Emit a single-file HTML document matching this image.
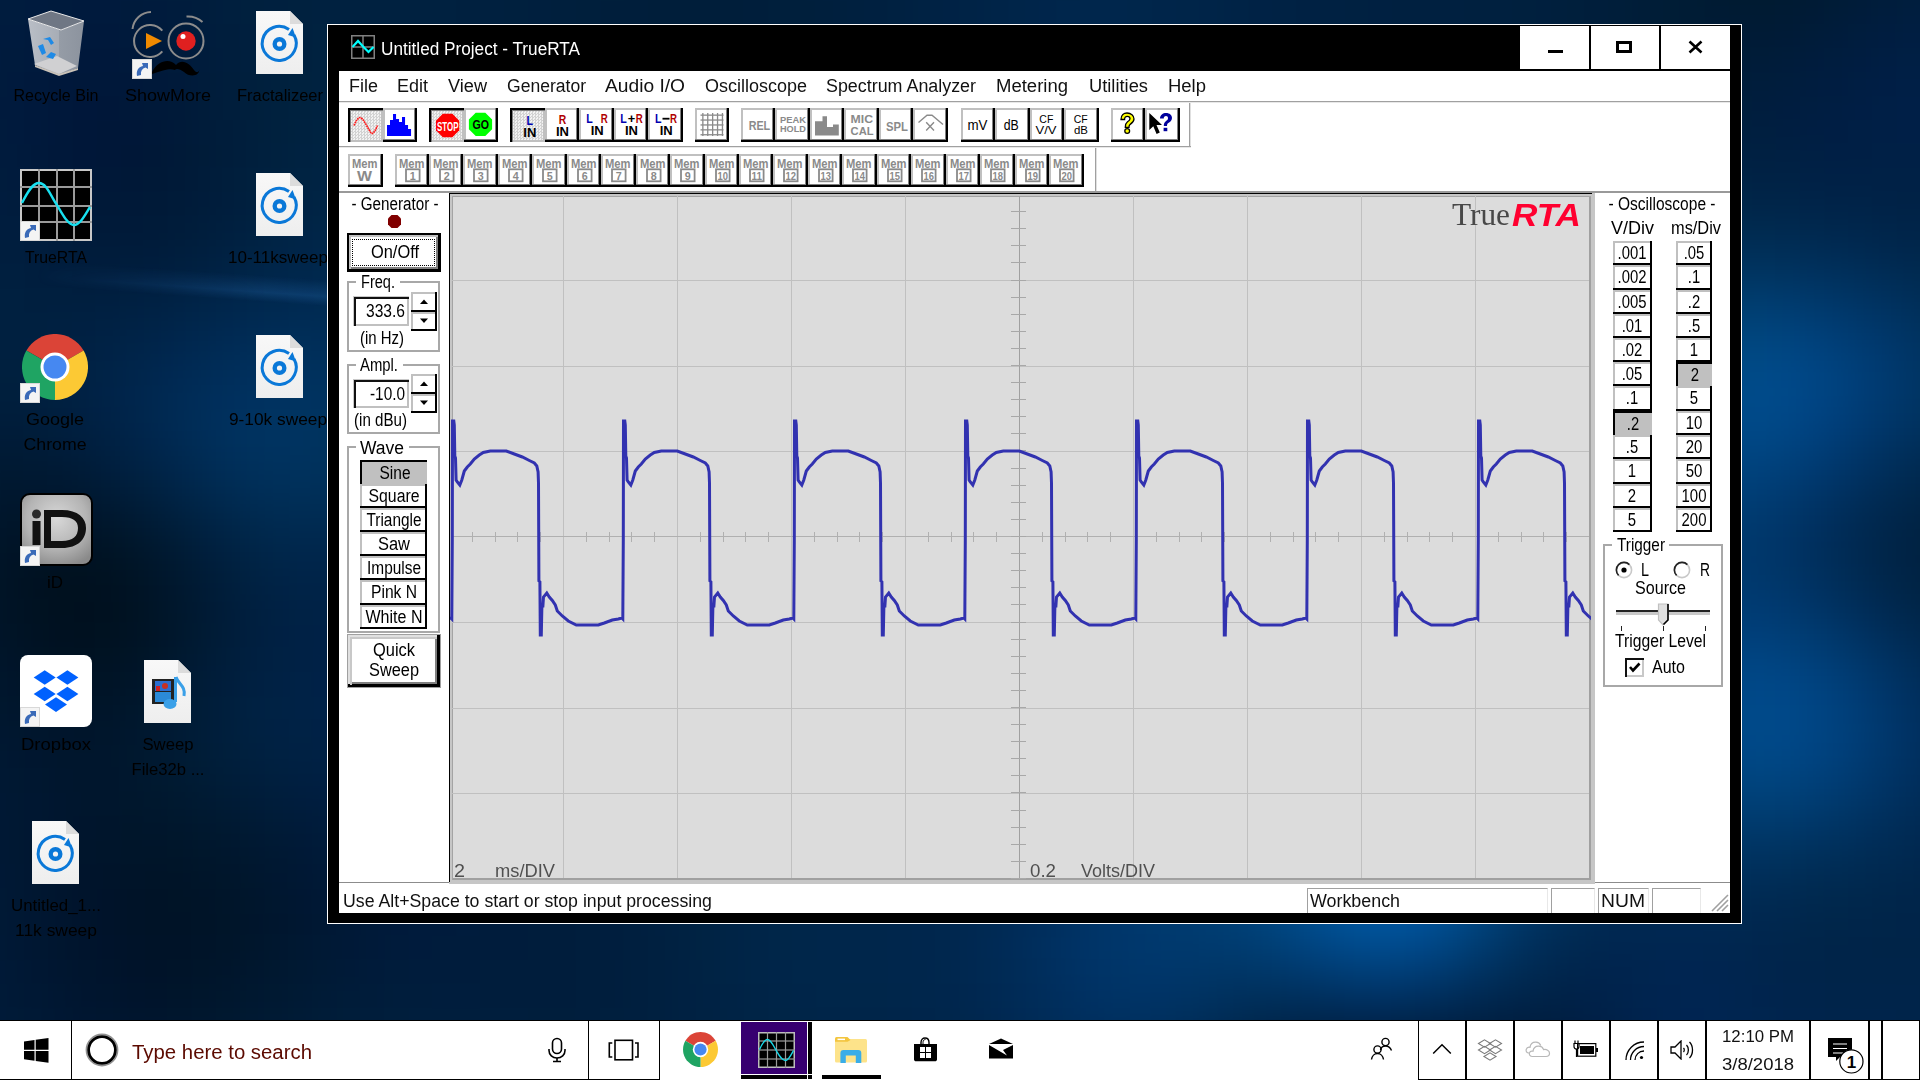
<!DOCTYPE html><html><head><meta charset="utf-8"><title>TrueRTA</title><style>
*{margin:0;padding:0;box-sizing:border-box}
html,body{width:1920px;height:1080px;overflow:hidden;font-family:"Liberation Sans", sans-serif}
body{position:relative;background:#021a3a}
div,svg{position:absolute}
.t{white-space:nowrap}
</style></head><body><svg style="left:-72px;top:-72px;filter:blur(13px)" width="2064" height="1224" viewBox="0 0 2064 1224"><rect width="2064" height="1224" fill="#002040"/><rect x="0" y="0" width="24" height="24" fill="#001f40"/><rect x="24" y="0" width="24" height="24" fill="#001f3f"/><rect x="48" y="0" width="24" height="24" fill="#001e3f"/><rect x="72" y="0" width="24" height="24" fill="#001e3f"/><rect x="96" y="0" width="24" height="24" fill="#001e3f"/><rect x="120" y="0" width="24" height="24" fill="#001e3f"/><rect x="144" y="0" width="24" height="24" fill="#001d3f"/><rect x="168" y="0" width="24" height="24" fill="#001d3f"/><rect x="192" y="0" width="24" height="24" fill="#001e3e"/><rect x="216" y="0" width="24" height="24" fill="#001e3f"/><rect x="240" y="0" width="24" height="24" fill="#001e3f"/><rect x="264" y="0" width="24" height="24" fill="#001f3f"/><rect x="288" y="0" width="24" height="24" fill="#001f3f"/><rect x="312" y="0" width="24" height="24" fill="#00203f"/><rect x="336" y="0" width="24" height="24" fill="#00203f"/><rect x="360" y="0" width="24" height="24" fill="#002040"/><rect x="384" y="0" width="24" height="24" fill="#002140"/><rect x="408" y="0" width="24" height="24" fill="#002140"/><rect x="432" y="0" width="24" height="24" fill="#002140"/><rect x="456" y="0" width="24" height="24" fill="#002040"/><rect x="480" y="0" width="24" height="24" fill="#002040"/><rect x="504" y="0" width="24" height="24" fill="#002040"/><rect x="528" y="0" width="24" height="24" fill="#00203f"/><rect x="552" y="0" width="24" height="24" fill="#00203f"/><rect x="576" y="0" width="24" height="24" fill="#00203e"/><rect x="600" y="0" width="24" height="24" fill="#001f3e"/><rect x="624" y="0" width="24" height="24" fill="#001f3d"/><rect x="648" y="0" width="24" height="24" fill="#001f3d"/><rect x="672" y="0" width="24" height="24" fill="#001f3c"/><rect x="696" y="0" width="24" height="24" fill="#001f3c"/><rect x="720" y="0" width="24" height="24" fill="#001e3b"/><rect x="744" y="0" width="24" height="24" fill="#001e3b"/><rect x="768" y="0" width="24" height="24" fill="#001e3b"/><rect x="792" y="0" width="24" height="24" fill="#001e3b"/><rect x="816" y="0" width="24" height="24" fill="#001f3c"/><rect x="840" y="0" width="24" height="24" fill="#001f3c"/><rect x="864" y="0" width="24" height="24" fill="#001f3d"/><rect x="888" y="0" width="24" height="24" fill="#001f3e"/><rect x="912" y="0" width="24" height="24" fill="#00203f"/><rect x="936" y="0" width="24" height="24" fill="#002040"/><rect x="960" y="0" width="24" height="24" fill="#002141"/><rect x="984" y="0" width="24" height="24" fill="#002143"/><rect x="1008" y="0" width="24" height="24" fill="#002244"/><rect x="1032" y="0" width="24" height="24" fill="#002345"/><rect x="1056" y="0" width="24" height="24" fill="#002347"/><rect x="1080" y="0" width="24" height="24" fill="#002448"/><rect x="1104" y="0" width="24" height="24" fill="#002549"/><rect x="1128" y="0" width="24" height="24" fill="#00254a"/><rect x="1152" y="0" width="24" height="24" fill="#00254a"/><rect x="1176" y="0" width="24" height="24" fill="#00254a"/><rect x="1200" y="0" width="24" height="24" fill="#00254a"/><rect x="1224" y="0" width="24" height="24" fill="#002449"/><rect x="1248" y="0" width="24" height="24" fill="#002448"/><rect x="1272" y="0" width="24" height="24" fill="#002347"/><rect x="1296" y="0" width="24" height="24" fill="#002345"/><rect x="1320" y="0" width="24" height="24" fill="#002244"/><rect x="1344" y="0" width="24" height="24" fill="#002243"/><rect x="1368" y="0" width="24" height="24" fill="#002142"/><rect x="1392" y="0" width="24" height="24" fill="#002142"/><rect x="1416" y="0" width="24" height="24" fill="#002141"/><rect x="1440" y="0" width="24" height="24" fill="#002041"/><rect x="1464" y="0" width="24" height="24" fill="#002040"/><rect x="1488" y="0" width="24" height="24" fill="#002040"/><rect x="1512" y="0" width="24" height="24" fill="#002040"/><rect x="1536" y="0" width="24" height="24" fill="#00203f"/><rect x="1560" y="0" width="24" height="24" fill="#00203f"/><rect x="1584" y="0" width="24" height="24" fill="#00203e"/><rect x="1608" y="0" width="24" height="24" fill="#001f3e"/><rect x="1632" y="0" width="24" height="24" fill="#001f3d"/><rect x="1656" y="0" width="24" height="24" fill="#001f3b"/><rect x="1680" y="0" width="24" height="24" fill="#001e39"/><rect x="1704" y="0" width="24" height="24" fill="#001d38"/><rect x="1728" y="0" width="24" height="24" fill="#001d36"/><rect x="1752" y="0" width="24" height="24" fill="#001c34"/><rect x="1776" y="0" width="24" height="24" fill="#001c32"/><rect x="1800" y="0" width="24" height="24" fill="#001b31"/><rect x="1824" y="0" width="24" height="24" fill="#001b30"/><rect x="1848" y="0" width="24" height="24" fill="#001b30"/><rect x="1872" y="0" width="24" height="24" fill="#001b31"/><rect x="1896" y="0" width="24" height="24" fill="#001b32"/><rect x="1920" y="0" width="24" height="24" fill="#001c34"/><rect x="1944" y="0" width="24" height="24" fill="#001c37"/><rect x="1968" y="0" width="24" height="24" fill="#001d39"/><rect x="1992" y="0" width="24" height="24" fill="#001e3b"/><rect x="2016" y="0" width="24" height="24" fill="#001e3c"/><rect x="2040" y="0" width="24" height="24" fill="#001f3e"/><rect x="2064" y="0" width="24" height="24" fill="#001f3f"/><rect x="0" y="24" width="24" height="24" fill="#001f40"/><rect x="24" y="24" width="24" height="24" fill="#001e3f"/><rect x="48" y="24" width="24" height="24" fill="#001e3f"/><rect x="72" y="24" width="24" height="24" fill="#001d3f"/><rect x="96" y="24" width="24" height="24" fill="#001d3f"/><rect x="120" y="24" width="24" height="24" fill="#001d3e"/><rect x="144" y="24" width="24" height="24" fill="#001c3e"/><rect x="168" y="24" width="24" height="24" fill="#001c3e"/><rect x="192" y="24" width="24" height="24" fill="#001d3e"/><rect x="216" y="24" width="24" height="24" fill="#001d3e"/><rect x="240" y="24" width="24" height="24" fill="#001e3e"/><rect x="264" y="24" width="24" height="24" fill="#001e3e"/><rect x="288" y="24" width="24" height="24" fill="#001f3f"/><rect x="312" y="24" width="24" height="24" fill="#00203f"/><rect x="336" y="24" width="24" height="24" fill="#00203f"/><rect x="360" y="24" width="24" height="24" fill="#002140"/><rect x="384" y="24" width="24" height="24" fill="#002140"/><rect x="408" y="24" width="24" height="24" fill="#002140"/><rect x="432" y="24" width="24" height="24" fill="#002140"/><rect x="456" y="24" width="24" height="24" fill="#002140"/><rect x="480" y="24" width="24" height="24" fill="#002040"/><rect x="504" y="24" width="24" height="24" fill="#002040"/><rect x="528" y="24" width="24" height="24" fill="#00203f"/><rect x="552" y="24" width="24" height="24" fill="#00203f"/><rect x="576" y="24" width="24" height="24" fill="#00203e"/><rect x="600" y="24" width="24" height="24" fill="#001f3e"/><rect x="624" y="24" width="24" height="24" fill="#001f3d"/><rect x="648" y="24" width="24" height="24" fill="#001f3c"/><rect x="672" y="24" width="24" height="24" fill="#001f3c"/><rect x="696" y="24" width="24" height="24" fill="#001e3b"/><rect x="720" y="24" width="24" height="24" fill="#001e3b"/><rect x="744" y="24" width="24" height="24" fill="#001e3a"/><rect x="768" y="24" width="24" height="24" fill="#001e3a"/><rect x="792" y="24" width="24" height="24" fill="#001e3b"/><rect x="816" y="24" width="24" height="24" fill="#001e3b"/><rect x="840" y="24" width="24" height="24" fill="#001f3c"/><rect x="864" y="24" width="24" height="24" fill="#001f3d"/><rect x="888" y="24" width="24" height="24" fill="#001f3e"/><rect x="912" y="24" width="24" height="24" fill="#00203f"/><rect x="936" y="24" width="24" height="24" fill="#002040"/><rect x="960" y="24" width="24" height="24" fill="#002141"/><rect x="984" y="24" width="24" height="24" fill="#002243"/><rect x="1008" y="24" width="24" height="24" fill="#002244"/><rect x="1032" y="24" width="24" height="24" fill="#002346"/><rect x="1056" y="24" width="24" height="24" fill="#002447"/><rect x="1080" y="24" width="24" height="24" fill="#002449"/><rect x="1104" y="24" width="24" height="24" fill="#00254a"/><rect x="1128" y="24" width="24" height="24" fill="#00254b"/><rect x="1152" y="24" width="24" height="24" fill="#00264b"/><rect x="1176" y="24" width="24" height="24" fill="#00264b"/><rect x="1200" y="24" width="24" height="24" fill="#00254b"/><rect x="1224" y="24" width="24" height="24" fill="#00254a"/><rect x="1248" y="24" width="24" height="24" fill="#002449"/><rect x="1272" y="24" width="24" height="24" fill="#002447"/><rect x="1296" y="24" width="24" height="24" fill="#002346"/><rect x="1320" y="24" width="24" height="24" fill="#002245"/><rect x="1344" y="24" width="24" height="24" fill="#002243"/><rect x="1368" y="24" width="24" height="24" fill="#002142"/><rect x="1392" y="24" width="24" height="24" fill="#002142"/><rect x="1416" y="24" width="24" height="24" fill="#002141"/><rect x="1440" y="24" width="24" height="24" fill="#002041"/><rect x="1464" y="24" width="24" height="24" fill="#002040"/><rect x="1488" y="24" width="24" height="24" fill="#002040"/><rect x="1512" y="24" width="24" height="24" fill="#002040"/><rect x="1536" y="24" width="24" height="24" fill="#00203f"/><rect x="1560" y="24" width="24" height="24" fill="#00203f"/><rect x="1584" y="24" width="24" height="24" fill="#00203e"/><rect x="1608" y="24" width="24" height="24" fill="#001f3e"/><rect x="1632" y="24" width="24" height="24" fill="#001f3c"/><rect x="1656" y="24" width="24" height="24" fill="#001e3b"/><rect x="1680" y="24" width="24" height="24" fill="#001e39"/><rect x="1704" y="24" width="24" height="24" fill="#001d37"/><rect x="1728" y="24" width="24" height="24" fill="#001d35"/><rect x="1752" y="24" width="24" height="24" fill="#001c33"/><rect x="1776" y="24" width="24" height="24" fill="#001b32"/><rect x="1800" y="24" width="24" height="24" fill="#001b31"/><rect x="1824" y="24" width="24" height="24" fill="#001b30"/><rect x="1848" y="24" width="24" height="24" fill="#001b31"/><rect x="1872" y="24" width="24" height="24" fill="#001b32"/><rect x="1896" y="24" width="24" height="24" fill="#001b33"/><rect x="1920" y="24" width="24" height="24" fill="#001c36"/><rect x="1944" y="24" width="24" height="24" fill="#001c38"/><rect x="1968" y="24" width="24" height="24" fill="#001d3a"/><rect x="1992" y="24" width="24" height="24" fill="#001e3c"/><rect x="2016" y="24" width="24" height="24" fill="#001e3e"/><rect x="2040" y="24" width="24" height="24" fill="#001f3f"/><rect x="2064" y="24" width="24" height="24" fill="#001f40"/><rect x="0" y="48" width="24" height="24" fill="#001f3f"/><rect x="24" y="48" width="24" height="24" fill="#001e3f"/><rect x="48" y="48" width="24" height="24" fill="#001d3f"/><rect x="72" y="48" width="24" height="24" fill="#001d3e"/><rect x="96" y="48" width="24" height="24" fill="#001c3e"/><rect x="120" y="48" width="24" height="24" fill="#001c3e"/><rect x="144" y="48" width="24" height="24" fill="#001b3d"/><rect x="168" y="48" width="24" height="24" fill="#001b3d"/><rect x="192" y="48" width="24" height="24" fill="#001c3d"/><rect x="216" y="48" width="24" height="24" fill="#001c3d"/><rect x="240" y="48" width="24" height="24" fill="#001d3e"/><rect x="264" y="48" width="24" height="24" fill="#001e3e"/><rect x="288" y="48" width="24" height="24" fill="#001f3e"/><rect x="312" y="48" width="24" height="24" fill="#00203f"/><rect x="336" y="48" width="24" height="24" fill="#00203f"/><rect x="360" y="48" width="24" height="24" fill="#00213f"/><rect x="384" y="48" width="24" height="24" fill="#002140"/><rect x="408" y="48" width="24" height="24" fill="#002140"/><rect x="432" y="48" width="24" height="24" fill="#002140"/><rect x="456" y="48" width="24" height="24" fill="#002140"/><rect x="480" y="48" width="24" height="24" fill="#002140"/><rect x="504" y="48" width="24" height="24" fill="#002040"/><rect x="528" y="48" width="24" height="24" fill="#00203f"/><rect x="552" y="48" width="24" height="24" fill="#00203f"/><rect x="576" y="48" width="24" height="24" fill="#00203e"/><rect x="600" y="48" width="24" height="24" fill="#001f3e"/><rect x="624" y="48" width="24" height="24" fill="#001f3d"/><rect x="648" y="48" width="24" height="24" fill="#001f3c"/><rect x="672" y="48" width="24" height="24" fill="#001f3b"/><rect x="696" y="48" width="24" height="24" fill="#001e3b"/><rect x="720" y="48" width="24" height="24" fill="#001e3a"/><rect x="744" y="48" width="24" height="24" fill="#001e3a"/><rect x="768" y="48" width="24" height="24" fill="#001e3a"/><rect x="792" y="48" width="24" height="24" fill="#001e3a"/><rect x="816" y="48" width="24" height="24" fill="#001e3b"/><rect x="840" y="48" width="24" height="24" fill="#001f3c"/><rect x="864" y="48" width="24" height="24" fill="#001f3c"/><rect x="888" y="48" width="24" height="24" fill="#001f3e"/><rect x="912" y="48" width="24" height="24" fill="#00203f"/><rect x="936" y="48" width="24" height="24" fill="#002040"/><rect x="960" y="48" width="24" height="24" fill="#002141"/><rect x="984" y="48" width="24" height="24" fill="#002243"/><rect x="1008" y="48" width="24" height="24" fill="#002245"/><rect x="1032" y="48" width="24" height="24" fill="#002346"/><rect x="1056" y="48" width="24" height="24" fill="#002448"/><rect x="1080" y="48" width="24" height="24" fill="#002549"/><rect x="1104" y="48" width="24" height="24" fill="#00254b"/><rect x="1128" y="48" width="24" height="24" fill="#00264b"/><rect x="1152" y="48" width="24" height="24" fill="#00264c"/><rect x="1176" y="48" width="24" height="24" fill="#00264c"/><rect x="1200" y="48" width="24" height="24" fill="#00264b"/><rect x="1224" y="48" width="24" height="24" fill="#00254a"/><rect x="1248" y="48" width="24" height="24" fill="#002549"/><rect x="1272" y="48" width="24" height="24" fill="#002448"/><rect x="1296" y="48" width="24" height="24" fill="#002346"/><rect x="1320" y="48" width="24" height="24" fill="#002245"/><rect x="1344" y="48" width="24" height="24" fill="#002244"/><rect x="1368" y="48" width="24" height="24" fill="#002143"/><rect x="1392" y="48" width="24" height="24" fill="#002142"/><rect x="1416" y="48" width="24" height="24" fill="#002141"/><rect x="1440" y="48" width="24" height="24" fill="#002041"/><rect x="1464" y="48" width="24" height="24" fill="#002040"/><rect x="1488" y="48" width="24" height="24" fill="#002040"/><rect x="1512" y="48" width="24" height="24" fill="#002040"/><rect x="1536" y="48" width="24" height="24" fill="#00203f"/><rect x="1560" y="48" width="24" height="24" fill="#00203f"/><rect x="1584" y="48" width="24" height="24" fill="#00203e"/><rect x="1608" y="48" width="24" height="24" fill="#001f3d"/><rect x="1632" y="48" width="24" height="24" fill="#001f3c"/><rect x="1656" y="48" width="24" height="24" fill="#001e3b"/><rect x="1680" y="48" width="24" height="24" fill="#001e39"/><rect x="1704" y="48" width="24" height="24" fill="#001d37"/><rect x="1728" y="48" width="24" height="24" fill="#001d35"/><rect x="1752" y="48" width="24" height="24" fill="#001c34"/><rect x="1776" y="48" width="24" height="24" fill="#001b32"/><rect x="1800" y="48" width="24" height="24" fill="#001b31"/><rect x="1824" y="48" width="24" height="24" fill="#001b31"/><rect x="1848" y="48" width="24" height="24" fill="#001b32"/><rect x="1872" y="48" width="24" height="24" fill="#001b33"/><rect x="1896" y="48" width="24" height="24" fill="#001b35"/><rect x="1920" y="48" width="24" height="24" fill="#001c38"/><rect x="1944" y="48" width="24" height="24" fill="#001d3a"/><rect x="1968" y="48" width="24" height="24" fill="#001d3c"/><rect x="1992" y="48" width="24" height="24" fill="#001e3e"/><rect x="2016" y="48" width="24" height="24" fill="#001f3f"/><rect x="2040" y="48" width="24" height="24" fill="#001f40"/><rect x="2064" y="48" width="24" height="24" fill="#001f41"/><rect x="0" y="72" width="24" height="24" fill="#001e3f"/><rect x="24" y="72" width="24" height="24" fill="#001e3f"/><rect x="48" y="72" width="24" height="24" fill="#001d3f"/><rect x="72" y="72" width="24" height="24" fill="#001c3e"/><rect x="96" y="72" width="24" height="24" fill="#001b3e"/><rect x="120" y="72" width="24" height="24" fill="#001b3d"/><rect x="144" y="72" width="24" height="24" fill="#001a3d"/><rect x="168" y="72" width="24" height="24" fill="#001a3d"/><rect x="192" y="72" width="24" height="24" fill="#001b3c"/><rect x="216" y="72" width="24" height="24" fill="#001b3d"/><rect x="240" y="72" width="24" height="24" fill="#001c3d"/><rect x="264" y="72" width="24" height="24" fill="#001d3d"/><rect x="288" y="72" width="24" height="24" fill="#001f3e"/><rect x="312" y="72" width="24" height="24" fill="#00203e"/><rect x="336" y="72" width="24" height="24" fill="#00203f"/><rect x="360" y="72" width="24" height="24" fill="#00213f"/><rect x="384" y="72" width="24" height="24" fill="#002140"/><rect x="408" y="72" width="24" height="24" fill="#002140"/><rect x="432" y="72" width="24" height="24" fill="#002140"/><rect x="456" y="72" width="24" height="24" fill="#002140"/><rect x="480" y="72" width="24" height="24" fill="#002140"/><rect x="504" y="72" width="24" height="24" fill="#002140"/><rect x="528" y="72" width="24" height="24" fill="#00203f"/><rect x="552" y="72" width="24" height="24" fill="#00203f"/><rect x="576" y="72" width="24" height="24" fill="#00203e"/><rect x="600" y="72" width="24" height="24" fill="#001f3e"/><rect x="624" y="72" width="24" height="24" fill="#001f3d"/><rect x="648" y="72" width="24" height="24" fill="#001f3c"/><rect x="672" y="72" width="24" height="24" fill="#001e3b"/><rect x="696" y="72" width="24" height="24" fill="#001e3b"/><rect x="720" y="72" width="24" height="24" fill="#001e3a"/><rect x="744" y="72" width="24" height="24" fill="#001e3a"/><rect x="768" y="72" width="24" height="24" fill="#001e3a"/><rect x="792" y="72" width="24" height="24" fill="#001e3a"/><rect x="816" y="72" width="24" height="24" fill="#001e3b"/><rect x="840" y="72" width="24" height="24" fill="#001f3c"/><rect x="864" y="72" width="24" height="24" fill="#001f3c"/><rect x="888" y="72" width="24" height="24" fill="#001f3d"/><rect x="912" y="72" width="24" height="24" fill="#00203f"/><rect x="936" y="72" width="24" height="24" fill="#002040"/><rect x="960" y="72" width="24" height="24" fill="#002141"/><rect x="984" y="72" width="24" height="24" fill="#002243"/><rect x="1008" y="72" width="24" height="24" fill="#002245"/><rect x="1032" y="72" width="24" height="24" fill="#002346"/><rect x="1056" y="72" width="24" height="24" fill="#002448"/><rect x="1080" y="72" width="24" height="24" fill="#002549"/><rect x="1104" y="72" width="24" height="24" fill="#00254b"/><rect x="1128" y="72" width="24" height="24" fill="#00264c"/><rect x="1152" y="72" width="24" height="24" fill="#00264c"/><rect x="1176" y="72" width="24" height="24" fill="#00264c"/><rect x="1200" y="72" width="24" height="24" fill="#00264b"/><rect x="1224" y="72" width="24" height="24" fill="#00254a"/><rect x="1248" y="72" width="24" height="24" fill="#002549"/><rect x="1272" y="72" width="24" height="24" fill="#002448"/><rect x="1296" y="72" width="24" height="24" fill="#002346"/><rect x="1320" y="72" width="24" height="24" fill="#002245"/><rect x="1344" y="72" width="24" height="24" fill="#002244"/><rect x="1368" y="72" width="24" height="24" fill="#002143"/><rect x="1392" y="72" width="24" height="24" fill="#002142"/><rect x="1416" y="72" width="24" height="24" fill="#002141"/><rect x="1440" y="72" width="24" height="24" fill="#002041"/><rect x="1464" y="72" width="24" height="24" fill="#002040"/><rect x="1488" y="72" width="24" height="24" fill="#002040"/><rect x="1512" y="72" width="24" height="24" fill="#002040"/><rect x="1536" y="72" width="24" height="24" fill="#00203f"/><rect x="1560" y="72" width="24" height="24" fill="#00203f"/><rect x="1584" y="72" width="24" height="24" fill="#00203e"/><rect x="1608" y="72" width="24" height="24" fill="#001f3e"/><rect x="1632" y="72" width="24" height="24" fill="#001f3c"/><rect x="1656" y="72" width="24" height="24" fill="#001e3b"/><rect x="1680" y="72" width="24" height="24" fill="#001e3a"/><rect x="1704" y="72" width="24" height="24" fill="#001d38"/><rect x="1728" y="72" width="24" height="24" fill="#001d36"/><rect x="1752" y="72" width="24" height="24" fill="#001c35"/><rect x="1776" y="72" width="24" height="24" fill="#001b34"/><rect x="1800" y="72" width="24" height="24" fill="#001b33"/><rect x="1824" y="72" width="24" height="24" fill="#001b33"/><rect x="1848" y="72" width="24" height="24" fill="#001b34"/><rect x="1872" y="72" width="24" height="24" fill="#001b36"/><rect x="1896" y="72" width="24" height="24" fill="#001c38"/><rect x="1920" y="72" width="24" height="24" fill="#001c3b"/><rect x="1944" y="72" width="24" height="24" fill="#001d3d"/><rect x="1968" y="72" width="24" height="24" fill="#001e3f"/><rect x="1992" y="72" width="24" height="24" fill="#001e40"/><rect x="2016" y="72" width="24" height="24" fill="#001f41"/><rect x="2040" y="72" width="24" height="24" fill="#001f42"/><rect x="2064" y="72" width="24" height="24" fill="#002042"/><rect x="0" y="96" width="24" height="24" fill="#001e3f"/><rect x="24" y="96" width="24" height="24" fill="#001d3f"/><rect x="48" y="96" width="24" height="24" fill="#001c3e"/><rect x="72" y="96" width="24" height="24" fill="#001b3e"/><rect x="96" y="96" width="24" height="24" fill="#001a3d"/><rect x="120" y="96" width="24" height="24" fill="#001a3d"/><rect x="144" y="96" width="24" height="24" fill="#00193c"/><rect x="168" y="96" width="24" height="24" fill="#00193c"/><rect x="192" y="96" width="24" height="24" fill="#001a3c"/><rect x="216" y="96" width="24" height="24" fill="#001b3c"/><rect x="240" y="96" width="24" height="24" fill="#001c3c"/><rect x="264" y="96" width="24" height="24" fill="#001d3d"/><rect x="288" y="96" width="24" height="24" fill="#001e3d"/><rect x="312" y="96" width="24" height="24" fill="#001f3e"/><rect x="336" y="96" width="24" height="24" fill="#00203f"/><rect x="360" y="96" width="24" height="24" fill="#00213f"/><rect x="384" y="96" width="24" height="24" fill="#002240"/><rect x="408" y="96" width="24" height="24" fill="#002240"/><rect x="432" y="96" width="24" height="24" fill="#002240"/><rect x="456" y="96" width="24" height="24" fill="#002140"/><rect x="480" y="96" width="24" height="24" fill="#002140"/><rect x="504" y="96" width="24" height="24" fill="#002140"/><rect x="528" y="96" width="24" height="24" fill="#00203f"/><rect x="552" y="96" width="24" height="24" fill="#00203f"/><rect x="576" y="96" width="24" height="24" fill="#00203e"/><rect x="600" y="96" width="24" height="24" fill="#001f3e"/><rect x="624" y="96" width="24" height="24" fill="#001f3d"/><rect x="648" y="96" width="24" height="24" fill="#001f3c"/><rect x="672" y="96" width="24" height="24" fill="#001f3c"/><rect x="696" y="96" width="24" height="24" fill="#001e3b"/><rect x="720" y="96" width="24" height="24" fill="#001e3a"/><rect x="744" y="96" width="24" height="24" fill="#001e3a"/><rect x="768" y="96" width="24" height="24" fill="#001e3a"/><rect x="792" y="96" width="24" height="24" fill="#001e3a"/><rect x="816" y="96" width="24" height="24" fill="#001e3b"/><rect x="840" y="96" width="24" height="24" fill="#001f3c"/><rect x="864" y="96" width="24" height="24" fill="#001f3d"/><rect x="888" y="96" width="24" height="24" fill="#001f3e"/><rect x="912" y="96" width="24" height="24" fill="#00203f"/><rect x="936" y="96" width="24" height="24" fill="#002040"/><rect x="960" y="96" width="24" height="24" fill="#002141"/><rect x="984" y="96" width="24" height="24" fill="#002243"/><rect x="1008" y="96" width="24" height="24" fill="#002245"/><rect x="1032" y="96" width="24" height="24" fill="#002346"/><rect x="1056" y="96" width="24" height="24" fill="#002448"/><rect x="1080" y="96" width="24" height="24" fill="#002549"/><rect x="1104" y="96" width="24" height="24" fill="#00254a"/><rect x="1128" y="96" width="24" height="24" fill="#00264b"/><rect x="1152" y="96" width="24" height="24" fill="#00264c"/><rect x="1176" y="96" width="24" height="24" fill="#00264c"/><rect x="1200" y="96" width="24" height="24" fill="#00264b"/><rect x="1224" y="96" width="24" height="24" fill="#00254a"/><rect x="1248" y="96" width="24" height="24" fill="#002449"/><rect x="1272" y="96" width="24" height="24" fill="#002448"/><rect x="1296" y="96" width="24" height="24" fill="#002346"/><rect x="1320" y="96" width="24" height="24" fill="#002245"/><rect x="1344" y="96" width="24" height="24" fill="#002244"/><rect x="1368" y="96" width="24" height="24" fill="#002143"/><rect x="1392" y="96" width="24" height="24" fill="#002142"/><rect x="1416" y="96" width="24" height="24" fill="#002141"/><rect x="1440" y="96" width="24" height="24" fill="#002041"/><rect x="1464" y="96" width="24" height="24" fill="#002040"/><rect x="1488" y="96" width="24" height="24" fill="#002040"/><rect x="1512" y="96" width="24" height="24" fill="#002040"/><rect x="1536" y="96" width="24" height="24" fill="#00203f"/><rect x="1560" y="96" width="24" height="24" fill="#00203f"/><rect x="1584" y="96" width="24" height="24" fill="#00203f"/><rect x="1608" y="96" width="24" height="24" fill="#001f3e"/><rect x="1632" y="96" width="24" height="24" fill="#001f3d"/><rect x="1656" y="96" width="24" height="24" fill="#001f3c"/><rect x="1680" y="96" width="24" height="24" fill="#001e3a"/><rect x="1704" y="96" width="24" height="24" fill="#001d39"/><rect x="1728" y="96" width="24" height="24" fill="#001d37"/><rect x="1752" y="96" width="24" height="24" fill="#001c36"/><rect x="1776" y="96" width="24" height="24" fill="#001c36"/><rect x="1800" y="96" width="24" height="24" fill="#001b36"/><rect x="1824" y="96" width="24" height="24" fill="#001b36"/><rect x="1848" y="96" width="24" height="24" fill="#001b37"/><rect x="1872" y="96" width="24" height="24" fill="#001c39"/><rect x="1896" y="96" width="24" height="24" fill="#001c3c"/><rect x="1920" y="96" width="24" height="24" fill="#001d3e"/><rect x="1944" y="96" width="24" height="24" fill="#001d40"/><rect x="1968" y="96" width="24" height="24" fill="#001e42"/><rect x="1992" y="96" width="24" height="24" fill="#001f43"/><rect x="2016" y="96" width="24" height="24" fill="#001f44"/><rect x="2040" y="96" width="24" height="24" fill="#002044"/><rect x="2064" y="96" width="24" height="24" fill="#002044"/><rect x="0" y="120" width="24" height="24" fill="#001e3f"/><rect x="24" y="120" width="24" height="24" fill="#001d3f"/><rect x="48" y="120" width="24" height="24" fill="#001c3e"/><rect x="72" y="120" width="24" height="24" fill="#001b3d"/><rect x="96" y="120" width="24" height="24" fill="#001a3d"/><rect x="120" y="120" width="24" height="24" fill="#00193c"/><rect x="144" y="120" width="24" height="24" fill="#00183b"/><rect x="168" y="120" width="24" height="24" fill="#00183b"/><rect x="192" y="120" width="24" height="24" fill="#00193b"/><rect x="216" y="120" width="24" height="24" fill="#001a3b"/><rect x="240" y="120" width="24" height="24" fill="#001b3b"/><rect x="264" y="120" width="24" height="24" fill="#001c3c"/><rect x="288" y="120" width="24" height="24" fill="#001e3d"/><rect x="312" y="120" width="24" height="24" fill="#001f3e"/><rect x="336" y="120" width="24" height="24" fill="#00213e"/><rect x="360" y="120" width="24" height="24" fill="#00213f"/><rect x="384" y="120" width="24" height="24" fill="#002240"/><rect x="408" y="120" width="24" height="24" fill="#002240"/><rect x="432" y="120" width="24" height="24" fill="#002241"/><rect x="456" y="120" width="24" height="24" fill="#002241"/><rect x="480" y="120" width="24" height="24" fill="#002140"/><rect x="504" y="120" width="24" height="24" fill="#002140"/><rect x="528" y="120" width="24" height="24" fill="#002140"/><rect x="552" y="120" width="24" height="24" fill="#00203f"/><rect x="576" y="120" width="24" height="24" fill="#00203f"/><rect x="600" y="120" width="24" height="24" fill="#001f3e"/><rect x="624" y="120" width="24" height="24" fill="#001f3d"/><rect x="648" y="120" width="24" height="24" fill="#001f3d"/><rect x="672" y="120" width="24" height="24" fill="#001f3c"/><rect x="696" y="120" width="24" height="24" fill="#001e3b"/><rect x="720" y="120" width="24" height="24" fill="#001e3b"/><rect x="744" y="120" width="24" height="24" fill="#001e3b"/><rect x="768" y="120" width="24" height="24" fill="#001e3b"/><rect x="792" y="120" width="24" height="24" fill="#001e3b"/><rect x="816" y="120" width="24" height="24" fill="#001e3b"/><rect x="840" y="120" width="24" height="24" fill="#001f3c"/><rect x="864" y="120" width="24" height="24" fill="#001f3d"/><rect x="888" y="120" width="24" height="24" fill="#001f3e"/><rect x="912" y="120" width="24" height="24" fill="#00203f"/><rect x="936" y="120" width="24" height="24" fill="#002040"/><rect x="960" y="120" width="24" height="24" fill="#002141"/><rect x="984" y="120" width="24" height="24" fill="#002243"/><rect x="1008" y="120" width="24" height="24" fill="#002244"/><rect x="1032" y="120" width="24" height="24" fill="#002346"/><rect x="1056" y="120" width="24" height="24" fill="#002447"/><rect x="1080" y="120" width="24" height="24" fill="#002449"/><rect x="1104" y="120" width="24" height="24" fill="#00254a"/><rect x="1128" y="120" width="24" height="24" fill="#00254b"/><rect x="1152" y="120" width="24" height="24" fill="#00254b"/><rect x="1176" y="120" width="24" height="24" fill="#00254b"/><rect x="1200" y="120" width="24" height="24" fill="#00254a"/><rect x="1224" y="120" width="24" height="24" fill="#00254a"/><rect x="1248" y="120" width="24" height="24" fill="#002448"/><rect x="1272" y="120" width="24" height="24" fill="#002447"/><rect x="1296" y="120" width="24" height="24" fill="#002346"/><rect x="1320" y="120" width="24" height="24" fill="#002245"/><rect x="1344" y="120" width="24" height="24" fill="#002243"/><rect x="1368" y="120" width="24" height="24" fill="#002142"/><rect x="1392" y="120" width="24" height="24" fill="#002142"/><rect x="1416" y="120" width="24" height="24" fill="#002141"/><rect x="1440" y="120" width="24" height="24" fill="#002041"/><rect x="1464" y="120" width="24" height="24" fill="#002040"/><rect x="1488" y="120" width="24" height="24" fill="#002040"/><rect x="1512" y="120" width="24" height="24" fill="#002040"/><rect x="1536" y="120" width="24" height="24" fill="#002040"/><rect x="1560" y="120" width="24" height="24" fill="#00203f"/><rect x="1584" y="120" width="24" height="24" fill="#00203f"/><rect x="1608" y="120" width="24" height="24" fill="#001f3e"/><rect x="1632" y="120" width="24" height="24" fill="#001f3d"/><rect x="1656" y="120" width="24" height="24" fill="#001f3c"/><rect x="1680" y="120" width="24" height="24" fill="#001e3b"/><rect x="1704" y="120" width="24" height="24" fill="#001e3a"/><rect x="1728" y="120" width="24" height="24" fill="#001d39"/><rect x="1752" y="120" width="24" height="24" fill="#001d38"/><rect x="1776" y="120" width="24" height="24" fill="#001c38"/><rect x="1800" y="120" width="24" height="24" fill="#001c38"/><rect x="1824" y="120" width="24" height="24" fill="#001c39"/><rect x="1848" y="120" width="24" height="24" fill="#001c3b"/><rect x="1872" y="120" width="24" height="24" fill="#001c3d"/><rect x="1896" y="120" width="24" height="24" fill="#001d3f"/><rect x="1920" y="120" width="24" height="24" fill="#001d41"/><rect x="1944" y="120" width="24" height="24" fill="#001e43"/><rect x="1968" y="120" width="24" height="24" fill="#001f44"/><rect x="1992" y="120" width="24" height="24" fill="#001f45"/><rect x="2016" y="120" width="24" height="24" fill="#002045"/><rect x="2040" y="120" width="24" height="24" fill="#002045"/><rect x="2064" y="120" width="24" height="24" fill="#002045"/><rect x="0" y="144" width="24" height="24" fill="#001e3f"/><rect x="24" y="144" width="24" height="24" fill="#001d3f"/><rect x="48" y="144" width="24" height="24" fill="#001c3e"/><rect x="72" y="144" width="24" height="24" fill="#001a3d"/><rect x="96" y="144" width="24" height="24" fill="#00193c"/><rect x="120" y="144" width="24" height="24" fill="#00183b"/><rect x="144" y="144" width="24" height="24" fill="#00183a"/><rect x="168" y="144" width="24" height="24" fill="#00183a"/><rect x="192" y="144" width="24" height="24" fill="#00183a"/><rect x="216" y="144" width="24" height="24" fill="#00193a"/><rect x="240" y="144" width="24" height="24" fill="#001a3a"/><rect x="264" y="144" width="24" height="24" fill="#001c3b"/><rect x="288" y="144" width="24" height="24" fill="#001e3c"/><rect x="312" y="144" width="24" height="24" fill="#001f3d"/><rect x="336" y="144" width="24" height="24" fill="#00213e"/><rect x="360" y="144" width="24" height="24" fill="#00223f"/><rect x="384" y="144" width="24" height="24" fill="#002240"/><rect x="408" y="144" width="24" height="24" fill="#002241"/><rect x="1776" y="144" width="24" height="24" fill="#001d3a"/><rect x="1800" y="144" width="24" height="24" fill="#001d3b"/><rect x="1824" y="144" width="24" height="24" fill="#001d3c"/><rect x="1848" y="144" width="24" height="24" fill="#001d3d"/><rect x="1872" y="144" width="24" height="24" fill="#001d3f"/><rect x="1896" y="144" width="24" height="24" fill="#001d41"/><rect x="1920" y="144" width="24" height="24" fill="#001e43"/><rect x="1944" y="144" width="24" height="24" fill="#001e45"/><rect x="1968" y="144" width="24" height="24" fill="#001f46"/><rect x="1992" y="144" width="24" height="24" fill="#001f47"/><rect x="2016" y="144" width="24" height="24" fill="#002047"/><rect x="2040" y="144" width="24" height="24" fill="#002046"/><rect x="2064" y="144" width="24" height="24" fill="#002045"/><rect x="0" y="168" width="24" height="24" fill="#001e3f"/><rect x="24" y="168" width="24" height="24" fill="#001d3f"/><rect x="48" y="168" width="24" height="24" fill="#001b3e"/><rect x="72" y="168" width="24" height="24" fill="#001a3d"/><rect x="96" y="168" width="24" height="24" fill="#00193c"/><rect x="120" y="168" width="24" height="24" fill="#00183b"/><rect x="144" y="168" width="24" height="24" fill="#00173a"/><rect x="168" y="168" width="24" height="24" fill="#001739"/><rect x="192" y="168" width="24" height="24" fill="#001839"/><rect x="216" y="168" width="24" height="24" fill="#001939"/><rect x="240" y="168" width="24" height="24" fill="#001a39"/><rect x="264" y="168" width="24" height="24" fill="#001c3a"/><rect x="288" y="168" width="24" height="24" fill="#001e3c"/><rect x="312" y="168" width="24" height="24" fill="#001f3d"/><rect x="336" y="168" width="24" height="24" fill="#00213e"/><rect x="360" y="168" width="24" height="24" fill="#00223f"/><rect x="384" y="168" width="24" height="24" fill="#002240"/><rect x="408" y="168" width="24" height="24" fill="#002341"/><rect x="1776" y="168" width="24" height="24" fill="#001e3c"/><rect x="1800" y="168" width="24" height="24" fill="#001e3d"/><rect x="1824" y="168" width="24" height="24" fill="#001d3e"/><rect x="1848" y="168" width="24" height="24" fill="#001d40"/><rect x="1872" y="168" width="24" height="24" fill="#001e41"/><rect x="1896" y="168" width="24" height="24" fill="#001e43"/><rect x="1920" y="168" width="24" height="24" fill="#001e45"/><rect x="1944" y="168" width="24" height="24" fill="#001f46"/><rect x="1968" y="168" width="24" height="24" fill="#001f47"/><rect x="1992" y="168" width="24" height="24" fill="#002047"/><rect x="2016" y="168" width="24" height="24" fill="#002047"/><rect x="2040" y="168" width="24" height="24" fill="#002046"/><rect x="2064" y="168" width="24" height="24" fill="#002045"/><rect x="0" y="192" width="24" height="24" fill="#001e3f"/><rect x="24" y="192" width="24" height="24" fill="#001d3f"/><rect x="48" y="192" width="24" height="24" fill="#001c3e"/><rect x="72" y="192" width="24" height="24" fill="#001a3d"/><rect x="96" y="192" width="24" height="24" fill="#00193c"/><rect x="120" y="192" width="24" height="24" fill="#00183a"/><rect x="144" y="192" width="24" height="24" fill="#001739"/><rect x="168" y="192" width="24" height="24" fill="#001738"/><rect x="192" y="192" width="24" height="24" fill="#001738"/><rect x="216" y="192" width="24" height="24" fill="#001838"/><rect x="240" y="192" width="24" height="24" fill="#001a39"/><rect x="264" y="192" width="24" height="24" fill="#001c3a"/><rect x="288" y="192" width="24" height="24" fill="#001d3b"/><rect x="312" y="192" width="24" height="24" fill="#001f3d"/><rect x="336" y="192" width="24" height="24" fill="#00213e"/><rect x="360" y="192" width="24" height="24" fill="#002240"/><rect x="384" y="192" width="24" height="24" fill="#002341"/><rect x="408" y="192" width="24" height="24" fill="#002342"/><rect x="1776" y="192" width="24" height="24" fill="#001f3f"/><rect x="1800" y="192" width="24" height="24" fill="#001f3f"/><rect x="1824" y="192" width="24" height="24" fill="#001f40"/><rect x="1848" y="192" width="24" height="24" fill="#001e41"/><rect x="1872" y="192" width="24" height="24" fill="#001e43"/><rect x="1896" y="192" width="24" height="24" fill="#001e44"/><rect x="1920" y="192" width="24" height="24" fill="#001f45"/><rect x="1944" y="192" width="24" height="24" fill="#001f46"/><rect x="1968" y="192" width="24" height="24" fill="#001f47"/><rect x="1992" y="192" width="24" height="24" fill="#002047"/><rect x="2016" y="192" width="24" height="24" fill="#002047"/><rect x="2040" y="192" width="24" height="24" fill="#002046"/><rect x="2064" y="192" width="24" height="24" fill="#002045"/><rect x="0" y="216" width="24" height="24" fill="#001e40"/><rect x="24" y="216" width="24" height="24" fill="#001d3f"/><rect x="48" y="216" width="24" height="24" fill="#001c3e"/><rect x="72" y="216" width="24" height="24" fill="#001b3d"/><rect x="96" y="216" width="24" height="24" fill="#00193b"/><rect x="120" y="216" width="24" height="24" fill="#00183a"/><rect x="144" y="216" width="24" height="24" fill="#001739"/><rect x="168" y="216" width="24" height="24" fill="#001738"/><rect x="192" y="216" width="24" height="24" fill="#001737"/><rect x="216" y="216" width="24" height="24" fill="#001837"/><rect x="240" y="216" width="24" height="24" fill="#001a38"/><rect x="264" y="216" width="24" height="24" fill="#001c39"/><rect x="288" y="216" width="24" height="24" fill="#001d3b"/><rect x="312" y="216" width="24" height="24" fill="#001f3d"/><rect x="336" y="216" width="24" height="24" fill="#00213f"/><rect x="360" y="216" width="24" height="24" fill="#002241"/><rect x="384" y="216" width="24" height="24" fill="#002342"/><rect x="408" y="216" width="24" height="24" fill="#002343"/><rect x="1776" y="216" width="24" height="24" fill="#002141"/><rect x="1800" y="216" width="24" height="24" fill="#002042"/><rect x="1824" y="216" width="24" height="24" fill="#002042"/><rect x="1848" y="216" width="24" height="24" fill="#002043"/><rect x="1872" y="216" width="24" height="24" fill="#002044"/><rect x="1896" y="216" width="24" height="24" fill="#001f45"/><rect x="1920" y="216" width="24" height="24" fill="#001f45"/><rect x="1944" y="216" width="24" height="24" fill="#002046"/><rect x="1968" y="216" width="24" height="24" fill="#002046"/><rect x="1992" y="216" width="24" height="24" fill="#002046"/><rect x="2016" y="216" width="24" height="24" fill="#002046"/><rect x="2040" y="216" width="24" height="24" fill="#002145"/><rect x="2064" y="216" width="24" height="24" fill="#002144"/><rect x="0" y="240" width="24" height="24" fill="#001f40"/><rect x="24" y="240" width="24" height="24" fill="#001e3f"/><rect x="48" y="240" width="24" height="24" fill="#001d3e"/><rect x="72" y="240" width="24" height="24" fill="#001b3d"/><rect x="96" y="240" width="24" height="24" fill="#001a3c"/><rect x="120" y="240" width="24" height="24" fill="#00193a"/><rect x="144" y="240" width="24" height="24" fill="#001839"/><rect x="168" y="240" width="24" height="24" fill="#001838"/><rect x="192" y="240" width="24" height="24" fill="#001837"/><rect x="216" y="240" width="24" height="24" fill="#001937"/><rect x="240" y="240" width="24" height="24" fill="#001a38"/><rect x="264" y="240" width="24" height="24" fill="#001c3a"/><rect x="288" y="240" width="24" height="24" fill="#001e3c"/><rect x="312" y="240" width="24" height="24" fill="#00203e"/><rect x="336" y="240" width="24" height="24" fill="#002140"/><rect x="360" y="240" width="24" height="24" fill="#002342"/><rect x="384" y="240" width="24" height="24" fill="#002343"/><rect x="408" y="240" width="24" height="24" fill="#002444"/><rect x="1776" y="240" width="24" height="24" fill="#002344"/><rect x="1800" y="240" width="24" height="24" fill="#002345"/><rect x="1824" y="240" width="24" height="24" fill="#002245"/><rect x="1848" y="240" width="24" height="24" fill="#002245"/><rect x="1872" y="240" width="24" height="24" fill="#002146"/><rect x="1896" y="240" width="24" height="24" fill="#002146"/><rect x="1920" y="240" width="24" height="24" fill="#002146"/><rect x="1944" y="240" width="24" height="24" fill="#002146"/><rect x="1968" y="240" width="24" height="24" fill="#002146"/><rect x="1992" y="240" width="24" height="24" fill="#002146"/><rect x="2016" y="240" width="24" height="24" fill="#002145"/><rect x="2040" y="240" width="24" height="24" fill="#002145"/><rect x="2064" y="240" width="24" height="24" fill="#002144"/><rect x="0" y="264" width="24" height="24" fill="#001f40"/><rect x="24" y="264" width="24" height="24" fill="#001e3f"/><rect x="48" y="264" width="24" height="24" fill="#001d3f"/><rect x="72" y="264" width="24" height="24" fill="#001c3d"/><rect x="96" y="264" width="24" height="24" fill="#001b3c"/><rect x="120" y="264" width="24" height="24" fill="#001a3a"/><rect x="144" y="264" width="24" height="24" fill="#001939"/><rect x="168" y="264" width="24" height="24" fill="#001938"/><rect x="192" y="264" width="24" height="24" fill="#001938"/><rect x="216" y="264" width="24" height="24" fill="#001a38"/><rect x="240" y="264" width="24" height="24" fill="#001b39"/><rect x="264" y="264" width="24" height="24" fill="#001c3b"/><rect x="288" y="264" width="24" height="24" fill="#001e3d"/><rect x="312" y="264" width="24" height="24" fill="#00203f"/><rect x="336" y="264" width="24" height="24" fill="#002241"/><rect x="360" y="264" width="24" height="24" fill="#002343"/><rect x="384" y="264" width="24" height="24" fill="#002445"/><rect x="408" y="264" width="24" height="24" fill="#002446"/><rect x="1776" y="264" width="24" height="24" fill="#002648"/><rect x="1800" y="264" width="24" height="24" fill="#002649"/><rect x="1824" y="264" width="24" height="24" fill="#002549"/><rect x="1848" y="264" width="24" height="24" fill="#002549"/><rect x="1872" y="264" width="24" height="24" fill="#002449"/><rect x="1896" y="264" width="24" height="24" fill="#002348"/><rect x="1920" y="264" width="24" height="24" fill="#002348"/><rect x="1944" y="264" width="24" height="24" fill="#002247"/><rect x="1968" y="264" width="24" height="24" fill="#002246"/><rect x="1992" y="264" width="24" height="24" fill="#002246"/><rect x="2016" y="264" width="24" height="24" fill="#002245"/><rect x="2040" y="264" width="24" height="24" fill="#002244"/><rect x="2064" y="264" width="24" height="24" fill="#002244"/><rect x="0" y="288" width="24" height="24" fill="#002040"/><rect x="24" y="288" width="24" height="24" fill="#001f40"/><rect x="48" y="288" width="24" height="24" fill="#001e3f"/><rect x="72" y="288" width="24" height="24" fill="#001d3e"/><rect x="96" y="288" width="24" height="24" fill="#001c3d"/><rect x="120" y="288" width="24" height="24" fill="#001b3b"/><rect x="144" y="288" width="24" height="24" fill="#001a3a"/><rect x="168" y="288" width="24" height="24" fill="#001a39"/><rect x="192" y="288" width="24" height="24" fill="#001a39"/><rect x="216" y="288" width="24" height="24" fill="#001b39"/><rect x="240" y="288" width="24" height="24" fill="#001c3a"/><rect x="264" y="288" width="24" height="24" fill="#001e3c"/><rect x="288" y="288" width="24" height="24" fill="#001f3f"/><rect x="312" y="288" width="24" height="24" fill="#002141"/><rect x="336" y="288" width="24" height="24" fill="#002344"/><rect x="360" y="288" width="24" height="24" fill="#002446"/><rect x="384" y="288" width="24" height="24" fill="#002547"/><rect x="408" y="288" width="24" height="24" fill="#002548"/><rect x="1776" y="288" width="24" height="24" fill="#002a4f"/><rect x="1800" y="288" width="24" height="24" fill="#002a4f"/><rect x="1824" y="288" width="24" height="24" fill="#002a4f"/><rect x="1848" y="288" width="24" height="24" fill="#00294f"/><rect x="1872" y="288" width="24" height="24" fill="#00284e"/><rect x="1896" y="288" width="24" height="24" fill="#00274d"/><rect x="1920" y="288" width="24" height="24" fill="#00264c"/><rect x="1944" y="288" width="24" height="24" fill="#00254a"/><rect x="1968" y="288" width="24" height="24" fill="#002449"/><rect x="1992" y="288" width="24" height="24" fill="#002448"/><rect x="2016" y="288" width="24" height="24" fill="#002446"/><rect x="2040" y="288" width="24" height="24" fill="#002345"/><rect x="2064" y="288" width="24" height="24" fill="#002344"/><rect x="0" y="312" width="24" height="24" fill="#002040"/><rect x="24" y="312" width="24" height="24" fill="#002040"/><rect x="48" y="312" width="24" height="24" fill="#001f3f"/><rect x="72" y="312" width="24" height="24" fill="#001e3e"/><rect x="96" y="312" width="24" height="24" fill="#001d3d"/><rect x="120" y="312" width="24" height="24" fill="#001c3c"/><rect x="144" y="312" width="24" height="24" fill="#001c3b"/><rect x="168" y="312" width="24" height="24" fill="#001c3b"/><rect x="192" y="312" width="24" height="24" fill="#001c3b"/><rect x="216" y="312" width="24" height="24" fill="#001c3c"/><rect x="240" y="312" width="24" height="24" fill="#001e3d"/><rect x="264" y="312" width="24" height="24" fill="#001f3f"/><rect x="288" y="312" width="24" height="24" fill="#002142"/><rect x="312" y="312" width="24" height="24" fill="#002344"/><rect x="336" y="312" width="24" height="24" fill="#002447"/><rect x="360" y="312" width="24" height="24" fill="#002549"/><rect x="384" y="312" width="24" height="24" fill="#00264a"/><rect x="408" y="312" width="24" height="24" fill="#00264b"/><rect x="1776" y="312" width="24" height="24" fill="#002f56"/><rect x="1800" y="312" width="24" height="24" fill="#002f58"/><rect x="1824" y="312" width="24" height="24" fill="#002f58"/><rect x="1848" y="312" width="24" height="24" fill="#002e57"/><rect x="1872" y="312" width="24" height="24" fill="#002d56"/><rect x="1896" y="312" width="24" height="24" fill="#002b54"/><rect x="1920" y="312" width="24" height="24" fill="#002a52"/><rect x="1944" y="312" width="24" height="24" fill="#00284f"/><rect x="1968" y="312" width="24" height="24" fill="#00274d"/><rect x="1992" y="312" width="24" height="24" fill="#00274b"/><rect x="2016" y="312" width="24" height="24" fill="#002649"/><rect x="2040" y="312" width="24" height="24" fill="#002547"/><rect x="2064" y="312" width="24" height="24" fill="#002546"/><rect x="0" y="336" width="24" height="24" fill="#002040"/><rect x="24" y="336" width="24" height="24" fill="#002040"/><rect x="48" y="336" width="24" height="24" fill="#002040"/><rect x="72" y="336" width="24" height="24" fill="#001f3f"/><rect x="96" y="336" width="24" height="24" fill="#001e3e"/><rect x="120" y="336" width="24" height="24" fill="#001e3e"/><rect x="144" y="336" width="24" height="24" fill="#001d3d"/><rect x="168" y="336" width="24" height="24" fill="#001d3d"/><rect x="192" y="336" width="24" height="24" fill="#001e3e"/><rect x="216" y="336" width="24" height="24" fill="#001e3f"/><rect x="240" y="336" width="24" height="24" fill="#002041"/><rect x="264" y="336" width="24" height="24" fill="#002143"/><rect x="288" y="336" width="24" height="24" fill="#002346"/><rect x="312" y="336" width="24" height="24" fill="#002548"/><rect x="336" y="336" width="24" height="24" fill="#00264b"/><rect x="360" y="336" width="24" height="24" fill="#00274c"/><rect x="384" y="336" width="24" height="24" fill="#00284d"/><rect x="408" y="336" width="24" height="24" fill="#00284e"/><rect x="1776" y="336" width="24" height="24" fill="#003560"/><rect x="1800" y="336" width="24" height="24" fill="#003562"/><rect x="1824" y="336" width="24" height="24" fill="#003562"/><rect x="1848" y="336" width="24" height="24" fill="#003461"/><rect x="1872" y="336" width="24" height="24" fill="#003260"/><rect x="1896" y="336" width="24" height="24" fill="#00315d"/><rect x="1920" y="336" width="24" height="24" fill="#002f5a"/><rect x="1944" y="336" width="24" height="24" fill="#002d56"/><rect x="1968" y="336" width="24" height="24" fill="#002b53"/><rect x="1992" y="336" width="24" height="24" fill="#002a50"/><rect x="2016" y="336" width="24" height="24" fill="#00294d"/><rect x="2040" y="336" width="24" height="24" fill="#00284b"/><rect x="2064" y="336" width="24" height="24" fill="#002748"/><rect x="0" y="360" width="24" height="24" fill="#002140"/><rect x="24" y="360" width="24" height="24" fill="#002040"/><rect x="48" y="360" width="24" height="24" fill="#002040"/><rect x="72" y="360" width="24" height="24" fill="#002040"/><rect x="96" y="360" width="24" height="24" fill="#001f3f"/><rect x="120" y="360" width="24" height="24" fill="#001f3f"/><rect x="144" y="360" width="24" height="24" fill="#001f3f"/><rect x="168" y="360" width="24" height="24" fill="#001f40"/><rect x="192" y="360" width="24" height="24" fill="#002041"/><rect x="216" y="360" width="24" height="24" fill="#002143"/><rect x="240" y="360" width="24" height="24" fill="#002245"/><rect x="264" y="360" width="24" height="24" fill="#002448"/><rect x="288" y="360" width="24" height="24" fill="#00254a"/><rect x="312" y="360" width="24" height="24" fill="#00274d"/><rect x="336" y="360" width="24" height="24" fill="#00284f"/><rect x="360" y="360" width="24" height="24" fill="#002951"/><rect x="384" y="360" width="24" height="24" fill="#002a51"/><rect x="408" y="360" width="24" height="24" fill="#002951"/><rect x="1776" y="360" width="24" height="24" fill="#003b6a"/><rect x="1800" y="360" width="24" height="24" fill="#003c6d"/><rect x="1824" y="360" width="24" height="24" fill="#003c6e"/><rect x="1848" y="360" width="24" height="24" fill="#003a6d"/><rect x="1872" y="360" width="24" height="24" fill="#00396b"/><rect x="1896" y="360" width="24" height="24" fill="#003667"/><rect x="1920" y="360" width="24" height="24" fill="#003463"/><rect x="1944" y="360" width="24" height="24" fill="#00315f"/><rect x="1968" y="360" width="24" height="24" fill="#002f5a"/><rect x="1992" y="360" width="24" height="24" fill="#002d56"/><rect x="2016" y="360" width="24" height="24" fill="#002b52"/><rect x="2040" y="360" width="24" height="24" fill="#002a4e"/><rect x="2064" y="360" width="24" height="24" fill="#00294b"/><rect x="0" y="384" width="24" height="24" fill="#002040"/><rect x="24" y="384" width="24" height="24" fill="#002040"/><rect x="48" y="384" width="24" height="24" fill="#002040"/><rect x="72" y="384" width="24" height="24" fill="#002040"/><rect x="96" y="384" width="24" height="24" fill="#002040"/><rect x="120" y="384" width="24" height="24" fill="#002041"/><rect x="144" y="384" width="24" height="24" fill="#002042"/><rect x="168" y="384" width="24" height="24" fill="#002143"/><rect x="192" y="384" width="24" height="24" fill="#002245"/><rect x="216" y="384" width="24" height="24" fill="#002347"/><rect x="240" y="384" width="24" height="24" fill="#00254a"/><rect x="264" y="384" width="24" height="24" fill="#00274d"/><rect x="288" y="384" width="24" height="24" fill="#002850"/><rect x="312" y="384" width="24" height="24" fill="#002a52"/><rect x="336" y="384" width="24" height="24" fill="#002b54"/><rect x="360" y="384" width="24" height="24" fill="#002c55"/><rect x="384" y="384" width="24" height="24" fill="#002c55"/><rect x="408" y="384" width="24" height="24" fill="#002c55"/><rect x="1776" y="384" width="24" height="24" fill="#004174"/><rect x="1800" y="384" width="24" height="24" fill="#004277"/><rect x="1824" y="384" width="24" height="24" fill="#004279"/><rect x="1848" y="384" width="24" height="24" fill="#004078"/><rect x="1872" y="384" width="24" height="24" fill="#003e75"/><rect x="1896" y="384" width="24" height="24" fill="#003b71"/><rect x="1920" y="384" width="24" height="24" fill="#00386c"/><rect x="1944" y="384" width="24" height="24" fill="#003566"/><rect x="1968" y="384" width="24" height="24" fill="#003361"/><rect x="1992" y="384" width="24" height="24" fill="#00305b"/><rect x="2016" y="384" width="24" height="24" fill="#002e56"/><rect x="2040" y="384" width="24" height="24" fill="#002c52"/><rect x="2064" y="384" width="24" height="24" fill="#002a4e"/><rect x="0" y="408" width="24" height="24" fill="#00203f"/><rect x="24" y="408" width="24" height="24" fill="#00203f"/><rect x="48" y="408" width="24" height="24" fill="#00203f"/><rect x="72" y="408" width="24" height="24" fill="#002040"/><rect x="96" y="408" width="24" height="24" fill="#002041"/><rect x="120" y="408" width="24" height="24" fill="#002142"/><rect x="144" y="408" width="24" height="24" fill="#002143"/><rect x="168" y="408" width="24" height="24" fill="#002246"/><rect x="192" y="408" width="24" height="24" fill="#002448"/><rect x="216" y="408" width="24" height="24" fill="#00254b"/><rect x="240" y="408" width="24" height="24" fill="#00274f"/><rect x="264" y="408" width="24" height="24" fill="#002952"/><rect x="288" y="408" width="24" height="24" fill="#002b55"/><rect x="312" y="408" width="24" height="24" fill="#002d58"/><rect x="336" y="408" width="24" height="24" fill="#002e59"/><rect x="360" y="408" width="24" height="24" fill="#002f5a"/><rect x="384" y="408" width="24" height="24" fill="#002e59"/><rect x="408" y="408" width="24" height="24" fill="#002e58"/><rect x="1776" y="408" width="24" height="24" fill="#00457d"/><rect x="1800" y="408" width="24" height="24" fill="#004780"/><rect x="1824" y="408" width="24" height="24" fill="#004782"/><rect x="1848" y="408" width="24" height="24" fill="#004581"/><rect x="1872" y="408" width="24" height="24" fill="#00437e"/><rect x="1896" y="408" width="24" height="24" fill="#003f79"/><rect x="1920" y="408" width="24" height="24" fill="#003c73"/><rect x="1944" y="408" width="24" height="24" fill="#00386d"/><rect x="1968" y="408" width="24" height="24" fill="#003566"/><rect x="1992" y="408" width="24" height="24" fill="#00325f"/><rect x="2016" y="408" width="24" height="24" fill="#00305a"/><rect x="2040" y="408" width="24" height="24" fill="#002e54"/><rect x="2064" y="408" width="24" height="24" fill="#002c50"/><rect x="0" y="432" width="24" height="24" fill="#001f3e"/><rect x="24" y="432" width="24" height="24" fill="#001f3e"/><rect x="48" y="432" width="24" height="24" fill="#001f3e"/><rect x="72" y="432" width="24" height="24" fill="#00203f"/><rect x="96" y="432" width="24" height="24" fill="#002040"/><rect x="120" y="432" width="24" height="24" fill="#002142"/><rect x="144" y="432" width="24" height="24" fill="#002244"/><rect x="168" y="432" width="24" height="24" fill="#002347"/><rect x="192" y="432" width="24" height="24" fill="#00254b"/><rect x="216" y="432" width="24" height="24" fill="#00274f"/><rect x="240" y="432" width="24" height="24" fill="#002953"/><rect x="264" y="432" width="24" height="24" fill="#002c56"/><rect x="288" y="432" width="24" height="24" fill="#002e5a"/><rect x="312" y="432" width="24" height="24" fill="#002f5c"/><rect x="336" y="432" width="24" height="24" fill="#00315d"/><rect x="360" y="432" width="24" height="24" fill="#00315e"/><rect x="384" y="432" width="24" height="24" fill="#00315d"/><rect x="408" y="432" width="24" height="24" fill="#00305b"/><rect x="1776" y="432" width="24" height="24" fill="#004882"/><rect x="1800" y="432" width="24" height="24" fill="#004a86"/><rect x="1824" y="432" width="24" height="24" fill="#004a88"/><rect x="1848" y="432" width="24" height="24" fill="#004887"/><rect x="1872" y="432" width="24" height="24" fill="#004583"/><rect x="1896" y="432" width="24" height="24" fill="#00427e"/><rect x="1920" y="432" width="24" height="24" fill="#003e77"/><rect x="1944" y="432" width="24" height="24" fill="#003a70"/><rect x="1968" y="432" width="24" height="24" fill="#003668"/><rect x="1992" y="432" width="24" height="24" fill="#003361"/><rect x="2016" y="432" width="24" height="24" fill="#00315b"/><rect x="2040" y="432" width="24" height="24" fill="#002e55"/><rect x="2064" y="432" width="24" height="24" fill="#002c51"/><rect x="0" y="456" width="24" height="24" fill="#001e3c"/><rect x="24" y="456" width="24" height="24" fill="#001e3c"/><rect x="48" y="456" width="24" height="24" fill="#001e3c"/><rect x="72" y="456" width="24" height="24" fill="#001f3d"/><rect x="96" y="456" width="24" height="24" fill="#001f3f"/><rect x="120" y="456" width="24" height="24" fill="#002041"/><rect x="144" y="456" width="24" height="24" fill="#002144"/><rect x="168" y="456" width="24" height="24" fill="#002348"/><rect x="192" y="456" width="24" height="24" fill="#00254c"/><rect x="216" y="456" width="24" height="24" fill="#002850"/><rect x="240" y="456" width="24" height="24" fill="#002b55"/><rect x="264" y="456" width="24" height="24" fill="#002d59"/><rect x="288" y="456" width="24" height="24" fill="#002f5d"/><rect x="312" y="456" width="24" height="24" fill="#00315f"/><rect x="336" y="456" width="24" height="24" fill="#003260"/><rect x="360" y="456" width="24" height="24" fill="#003360"/><rect x="384" y="456" width="24" height="24" fill="#00325f"/><rect x="408" y="456" width="24" height="24" fill="#00315c"/><rect x="1776" y="456" width="24" height="24" fill="#004a85"/><rect x="1800" y="456" width="24" height="24" fill="#004b89"/><rect x="1824" y="456" width="24" height="24" fill="#004a8a"/><rect x="1848" y="456" width="24" height="24" fill="#004989"/><rect x="1872" y="456" width="24" height="24" fill="#004585"/><rect x="1896" y="456" width="24" height="24" fill="#00427e"/><rect x="1920" y="456" width="24" height="24" fill="#003d77"/><rect x="1944" y="456" width="24" height="24" fill="#00396f"/><rect x="1968" y="456" width="24" height="24" fill="#003668"/><rect x="1992" y="456" width="24" height="24" fill="#003360"/><rect x="2016" y="456" width="24" height="24" fill="#00305a"/><rect x="2040" y="456" width="24" height="24" fill="#002e55"/><rect x="2064" y="456" width="24" height="24" fill="#002c50"/><rect x="0" y="480" width="24" height="24" fill="#001d3a"/><rect x="24" y="480" width="24" height="24" fill="#001d3a"/><rect x="48" y="480" width="24" height="24" fill="#001d3a"/><rect x="72" y="480" width="24" height="24" fill="#001d3b"/><rect x="96" y="480" width="24" height="24" fill="#001e3c"/><rect x="120" y="480" width="24" height="24" fill="#001f3e"/><rect x="144" y="480" width="24" height="24" fill="#002042"/><rect x="168" y="480" width="24" height="24" fill="#002246"/><rect x="192" y="480" width="24" height="24" fill="#00254b"/><rect x="216" y="480" width="24" height="24" fill="#002850"/><rect x="240" y="480" width="24" height="24" fill="#002b55"/><rect x="264" y="480" width="24" height="24" fill="#002e5a"/><rect x="288" y="480" width="24" height="24" fill="#00305d"/><rect x="312" y="480" width="24" height="24" fill="#003260"/><rect x="336" y="480" width="24" height="24" fill="#003361"/><rect x="360" y="480" width="24" height="24" fill="#003461"/><rect x="384" y="480" width="24" height="24" fill="#00335f"/><rect x="408" y="480" width="24" height="24" fill="#00325d"/><rect x="1776" y="480" width="24" height="24" fill="#004984"/><rect x="1800" y="480" width="24" height="24" fill="#004a88"/><rect x="1824" y="480" width="24" height="24" fill="#004988"/><rect x="1848" y="480" width="24" height="24" fill="#004786"/><rect x="1872" y="480" width="24" height="24" fill="#004381"/><rect x="1896" y="480" width="24" height="24" fill="#003f7b"/><rect x="1920" y="480" width="24" height="24" fill="#003b73"/><rect x="1944" y="480" width="24" height="24" fill="#00376b"/><rect x="1968" y="480" width="24" height="24" fill="#003464"/><rect x="1992" y="480" width="24" height="24" fill="#00315d"/><rect x="2016" y="480" width="24" height="24" fill="#002e57"/><rect x="2040" y="480" width="24" height="24" fill="#002c52"/><rect x="2064" y="480" width="24" height="24" fill="#002b4e"/><rect x="0" y="504" width="24" height="24" fill="#001c38"/><rect x="24" y="504" width="24" height="24" fill="#001c37"/><rect x="48" y="504" width="24" height="24" fill="#001b37"/><rect x="72" y="504" width="24" height="24" fill="#001b37"/><rect x="96" y="504" width="24" height="24" fill="#001c38"/><rect x="120" y="504" width="24" height="24" fill="#001d3b"/><rect x="144" y="504" width="24" height="24" fill="#001e3e"/><rect x="168" y="504" width="24" height="24" fill="#002142"/><rect x="192" y="504" width="24" height="24" fill="#002347"/><rect x="216" y="504" width="24" height="24" fill="#00264d"/><rect x="240" y="504" width="24" height="24" fill="#002a52"/><rect x="264" y="504" width="24" height="24" fill="#002d57"/><rect x="288" y="504" width="24" height="24" fill="#00305c"/><rect x="312" y="504" width="24" height="24" fill="#00325f"/><rect x="336" y="504" width="24" height="24" fill="#003360"/><rect x="360" y="504" width="24" height="24" fill="#003360"/><rect x="384" y="504" width="24" height="24" fill="#00335e"/><rect x="408" y="504" width="24" height="24" fill="#00315c"/><rect x="1776" y="504" width="24" height="24" fill="#004681"/><rect x="1800" y="504" width="24" height="24" fill="#004784"/><rect x="1824" y="504" width="24" height="24" fill="#004683"/><rect x="1848" y="504" width="24" height="24" fill="#004380"/><rect x="1872" y="504" width="24" height="24" fill="#00407b"/><rect x="1896" y="504" width="24" height="24" fill="#003b74"/><rect x="1920" y="504" width="24" height="24" fill="#00376c"/><rect x="1944" y="504" width="24" height="24" fill="#003364"/><rect x="1968" y="504" width="24" height="24" fill="#00305d"/><rect x="1992" y="504" width="24" height="24" fill="#002d57"/><rect x="2016" y="504" width="24" height="24" fill="#002b52"/><rect x="2040" y="504" width="24" height="24" fill="#002a4d"/><rect x="2064" y="504" width="24" height="24" fill="#00294a"/><rect x="0" y="528" width="24" height="24" fill="#001b36"/><rect x="24" y="528" width="24" height="24" fill="#001a34"/><rect x="48" y="528" width="24" height="24" fill="#001a33"/><rect x="72" y="528" width="24" height="24" fill="#001a33"/><rect x="96" y="528" width="24" height="24" fill="#001a34"/><rect x="120" y="528" width="24" height="24" fill="#001a35"/><rect x="144" y="528" width="24" height="24" fill="#001c38"/><rect x="168" y="528" width="24" height="24" fill="#001e3d"/><rect x="192" y="528" width="24" height="24" fill="#002142"/><rect x="216" y="528" width="24" height="24" fill="#002447"/><rect x="240" y="528" width="24" height="24" fill="#00274d"/><rect x="264" y="528" width="24" height="24" fill="#002b53"/><rect x="288" y="528" width="24" height="24" fill="#002e58"/><rect x="312" y="528" width="24" height="24" fill="#00305b"/><rect x="336" y="528" width="24" height="24" fill="#00315d"/><rect x="360" y="528" width="24" height="24" fill="#00325d"/><rect x="384" y="528" width="24" height="24" fill="#00315c"/><rect x="408" y="528" width="24" height="24" fill="#003059"/><rect x="1776" y="528" width="24" height="24" fill="#00437c"/><rect x="1800" y="528" width="24" height="24" fill="#00437d"/><rect x="1824" y="528" width="24" height="24" fill="#00417c"/><rect x="1848" y="528" width="24" height="24" fill="#003f78"/><rect x="1872" y="528" width="24" height="24" fill="#003b73"/><rect x="1896" y="528" width="24" height="24" fill="#00376b"/><rect x="1920" y="528" width="24" height="24" fill="#003364"/><rect x="1944" y="528" width="24" height="24" fill="#002f5c"/><rect x="1968" y="528" width="24" height="24" fill="#002c55"/><rect x="1992" y="528" width="24" height="24" fill="#002a50"/><rect x="2016" y="528" width="24" height="24" fill="#00284c"/><rect x="2040" y="528" width="24" height="24" fill="#002748"/><rect x="2064" y="528" width="24" height="24" fill="#002646"/><rect x="0" y="552" width="24" height="24" fill="#001a34"/><rect x="24" y="552" width="24" height="24" fill="#001932"/><rect x="48" y="552" width="24" height="24" fill="#001830"/><rect x="72" y="552" width="24" height="24" fill="#00172f"/><rect x="96" y="552" width="24" height="24" fill="#00172f"/><rect x="120" y="552" width="24" height="24" fill="#001830"/><rect x="144" y="552" width="24" height="24" fill="#001932"/><rect x="168" y="552" width="24" height="24" fill="#001b36"/><rect x="192" y="552" width="24" height="24" fill="#001e3b"/><rect x="216" y="552" width="24" height="24" fill="#002140"/><rect x="240" y="552" width="24" height="24" fill="#002447"/><rect x="264" y="552" width="24" height="24" fill="#00284d"/><rect x="288" y="552" width="24" height="24" fill="#002b52"/><rect x="312" y="552" width="24" height="24" fill="#002d56"/><rect x="336" y="552" width="24" height="24" fill="#002f58"/><rect x="360" y="552" width="24" height="24" fill="#002f59"/><rect x="384" y="552" width="24" height="24" fill="#002f58"/><rect x="408" y="552" width="24" height="24" fill="#002e56"/><rect x="1776" y="552" width="24" height="24" fill="#003f76"/><rect x="1800" y="552" width="24" height="24" fill="#003f77"/><rect x="1824" y="552" width="24" height="24" fill="#003d75"/><rect x="1848" y="552" width="24" height="24" fill="#003a70"/><rect x="1872" y="552" width="24" height="24" fill="#00366a"/><rect x="1896" y="552" width="24" height="24" fill="#003263"/><rect x="1920" y="552" width="24" height="24" fill="#002e5b"/><rect x="1944" y="552" width="24" height="24" fill="#002b54"/><rect x="1968" y="552" width="24" height="24" fill="#00284e"/><rect x="1992" y="552" width="24" height="24" fill="#002649"/><rect x="2016" y="552" width="24" height="24" fill="#002546"/><rect x="2040" y="552" width="24" height="24" fill="#002443"/><rect x="2064" y="552" width="24" height="24" fill="#002442"/><rect x="0" y="576" width="24" height="24" fill="#001932"/><rect x="24" y="576" width="24" height="24" fill="#00182f"/><rect x="48" y="576" width="24" height="24" fill="#00172d"/><rect x="72" y="576" width="24" height="24" fill="#00162b"/><rect x="96" y="576" width="24" height="24" fill="#00152a"/><rect x="120" y="576" width="24" height="24" fill="#00152a"/><rect x="144" y="576" width="24" height="24" fill="#00162c"/><rect x="168" y="576" width="24" height="24" fill="#00182f"/><rect x="192" y="576" width="24" height="24" fill="#001a33"/><rect x="216" y="576" width="24" height="24" fill="#001d39"/><rect x="240" y="576" width="24" height="24" fill="#00213f"/><rect x="264" y="576" width="24" height="24" fill="#002445"/><rect x="288" y="576" width="24" height="24" fill="#00274b"/><rect x="312" y="576" width="24" height="24" fill="#002a4f"/><rect x="336" y="576" width="24" height="24" fill="#002b52"/><rect x="360" y="576" width="24" height="24" fill="#002c53"/><rect x="384" y="576" width="24" height="24" fill="#002c53"/><rect x="408" y="576" width="24" height="24" fill="#002b51"/><rect x="1776" y="576" width="24" height="24" fill="#003c71"/><rect x="1800" y="576" width="24" height="24" fill="#003b71"/><rect x="1824" y="576" width="24" height="24" fill="#00396e"/><rect x="1848" y="576" width="24" height="24" fill="#00366a"/><rect x="1872" y="576" width="24" height="24" fill="#003263"/><rect x="1896" y="576" width="24" height="24" fill="#002e5c"/><rect x="1920" y="576" width="24" height="24" fill="#002b54"/><rect x="1944" y="576" width="24" height="24" fill="#00274e"/><rect x="1968" y="576" width="24" height="24" fill="#002548"/><rect x="1992" y="576" width="24" height="24" fill="#002344"/><rect x="2016" y="576" width="24" height="24" fill="#002241"/><rect x="2040" y="576" width="24" height="24" fill="#002240"/><rect x="2064" y="576" width="24" height="24" fill="#00223f"/><rect x="0" y="600" width="24" height="24" fill="#001931"/><rect x="24" y="600" width="24" height="24" fill="#00172e"/><rect x="48" y="600" width="24" height="24" fill="#00162a"/><rect x="72" y="600" width="24" height="24" fill="#001428"/><rect x="96" y="600" width="24" height="24" fill="#001326"/><rect x="120" y="600" width="24" height="24" fill="#001325"/><rect x="144" y="600" width="24" height="24" fill="#001326"/><rect x="168" y="600" width="24" height="24" fill="#001528"/><rect x="192" y="600" width="24" height="24" fill="#00172c"/><rect x="216" y="600" width="24" height="24" fill="#001a32"/><rect x="240" y="600" width="24" height="24" fill="#001d38"/><rect x="264" y="600" width="24" height="24" fill="#00203f"/><rect x="288" y="600" width="24" height="24" fill="#002344"/><rect x="312" y="600" width="24" height="24" fill="#002649"/><rect x="336" y="600" width="24" height="24" fill="#00284d"/><rect x="360" y="600" width="24" height="24" fill="#00284e"/><rect x="384" y="600" width="24" height="24" fill="#00284e"/><rect x="408" y="600" width="24" height="24" fill="#00284d"/><rect x="1776" y="600" width="24" height="24" fill="#00396e"/><rect x="1800" y="600" width="24" height="24" fill="#00396d"/><rect x="1824" y="600" width="24" height="24" fill="#00376b"/><rect x="1848" y="600" width="24" height="24" fill="#003466"/><rect x="1872" y="600" width="24" height="24" fill="#00305f"/><rect x="1896" y="600" width="24" height="24" fill="#002c58"/><rect x="1920" y="600" width="24" height="24" fill="#002951"/><rect x="1944" y="600" width="24" height="24" fill="#00264a"/><rect x="1968" y="600" width="24" height="24" fill="#002345"/><rect x="1992" y="600" width="24" height="24" fill="#002241"/><rect x="2016" y="600" width="24" height="24" fill="#00213e"/><rect x="2040" y="600" width="24" height="24" fill="#00203d"/><rect x="2064" y="600" width="24" height="24" fill="#00203d"/><rect x="0" y="624" width="24" height="24" fill="#001830"/><rect x="24" y="624" width="24" height="24" fill="#00172d"/><rect x="48" y="624" width="24" height="24" fill="#001529"/><rect x="72" y="624" width="24" height="24" fill="#001325"/><rect x="96" y="624" width="24" height="24" fill="#001223"/><rect x="120" y="624" width="24" height="24" fill="#001121"/><rect x="144" y="624" width="24" height="24" fill="#001221"/><rect x="168" y="624" width="24" height="24" fill="#001323"/><rect x="192" y="624" width="24" height="24" fill="#001527"/><rect x="216" y="624" width="24" height="24" fill="#00172c"/><rect x="240" y="624" width="24" height="24" fill="#001a32"/><rect x="264" y="624" width="24" height="24" fill="#001d39"/><rect x="288" y="624" width="24" height="24" fill="#00203f"/><rect x="312" y="624" width="24" height="24" fill="#002344"/><rect x="336" y="624" width="24" height="24" fill="#002548"/><rect x="360" y="624" width="24" height="24" fill="#00254a"/><rect x="384" y="624" width="24" height="24" fill="#00254a"/><rect x="408" y="624" width="24" height="24" fill="#00254a"/><rect x="1776" y="624" width="24" height="24" fill="#00396d"/><rect x="1800" y="624" width="24" height="24" fill="#00386d"/><rect x="1824" y="624" width="24" height="24" fill="#00376a"/><rect x="1848" y="624" width="24" height="24" fill="#003465"/><rect x="1872" y="624" width="24" height="24" fill="#00305f"/><rect x="1896" y="624" width="24" height="24" fill="#002d58"/><rect x="1920" y="624" width="24" height="24" fill="#002951"/><rect x="1944" y="624" width="24" height="24" fill="#00264a"/><rect x="1968" y="624" width="24" height="24" fill="#002345"/><rect x="1992" y="624" width="24" height="24" fill="#002141"/><rect x="2016" y="624" width="24" height="24" fill="#00203e"/><rect x="2040" y="624" width="24" height="24" fill="#00203d"/><rect x="2064" y="624" width="24" height="24" fill="#00203d"/><rect x="0" y="648" width="24" height="24" fill="#001830"/><rect x="24" y="648" width="24" height="24" fill="#00172c"/><rect x="48" y="648" width="24" height="24" fill="#001528"/><rect x="72" y="648" width="24" height="24" fill="#001325"/><rect x="96" y="648" width="24" height="24" fill="#001121"/><rect x="120" y="648" width="24" height="24" fill="#00111f"/><rect x="144" y="648" width="24" height="24" fill="#00111f"/><rect x="168" y="648" width="24" height="24" fill="#001121"/><rect x="192" y="648" width="24" height="24" fill="#001324"/><rect x="216" y="648" width="24" height="24" fill="#001529"/><rect x="240" y="648" width="24" height="24" fill="#00182f"/><rect x="264" y="648" width="24" height="24" fill="#001b35"/><rect x="288" y="648" width="24" height="24" fill="#001e3b"/><rect x="312" y="648" width="24" height="24" fill="#002141"/><rect x="336" y="648" width="24" height="24" fill="#002245"/><rect x="360" y="648" width="24" height="24" fill="#002347"/><rect x="384" y="648" width="24" height="24" fill="#002347"/><rect x="408" y="648" width="24" height="24" fill="#002347"/><rect x="1776" y="648" width="24" height="24" fill="#003a6f"/><rect x="1800" y="648" width="24" height="24" fill="#003a6f"/><rect x="1824" y="648" width="24" height="24" fill="#00386d"/><rect x="1848" y="648" width="24" height="24" fill="#003669"/><rect x="1872" y="648" width="24" height="24" fill="#003263"/><rect x="1896" y="648" width="24" height="24" fill="#002f5b"/><rect x="1920" y="648" width="24" height="24" fill="#002b54"/><rect x="1944" y="648" width="24" height="24" fill="#00274d"/><rect x="1968" y="648" width="24" height="24" fill="#002547"/><rect x="1992" y="648" width="24" height="24" fill="#002243"/><rect x="2016" y="648" width="24" height="24" fill="#002140"/><rect x="2040" y="648" width="24" height="24" fill="#00203e"/><rect x="2064" y="648" width="24" height="24" fill="#00203d"/><rect x="0" y="672" width="24" height="24" fill="#001931"/><rect x="24" y="672" width="24" height="24" fill="#00172d"/><rect x="48" y="672" width="24" height="24" fill="#001529"/><rect x="72" y="672" width="24" height="24" fill="#001325"/><rect x="96" y="672" width="24" height="24" fill="#001222"/><rect x="120" y="672" width="24" height="24" fill="#00111f"/><rect x="144" y="672" width="24" height="24" fill="#00101f"/><rect x="168" y="672" width="24" height="24" fill="#001120"/><rect x="192" y="672" width="24" height="24" fill="#001323"/><rect x="216" y="672" width="24" height="24" fill="#001528"/><rect x="240" y="672" width="24" height="24" fill="#00182d"/><rect x="264" y="672" width="24" height="24" fill="#001a34"/><rect x="288" y="672" width="24" height="24" fill="#001d3a"/><rect x="312" y="672" width="24" height="24" fill="#001f3f"/><rect x="336" y="672" width="24" height="24" fill="#002143"/><rect x="360" y="672" width="24" height="24" fill="#002245"/><rect x="384" y="672" width="24" height="24" fill="#002246"/><rect x="408" y="672" width="24" height="24" fill="#002146"/><rect x="1776" y="672" width="24" height="24" fill="#003c73"/><rect x="1800" y="672" width="24" height="24" fill="#003c74"/><rect x="1824" y="672" width="24" height="24" fill="#003b73"/><rect x="1848" y="672" width="24" height="24" fill="#00396f"/><rect x="1872" y="672" width="24" height="24" fill="#003669"/><rect x="1896" y="672" width="24" height="24" fill="#003262"/><rect x="1920" y="672" width="24" height="24" fill="#002e5a"/><rect x="1944" y="672" width="24" height="24" fill="#002a53"/><rect x="1968" y="672" width="24" height="24" fill="#00274c"/><rect x="1992" y="672" width="24" height="24" fill="#002547"/><rect x="2016" y="672" width="24" height="24" fill="#002343"/><rect x="2040" y="672" width="24" height="24" fill="#002141"/><rect x="2064" y="672" width="24" height="24" fill="#00213f"/><rect x="0" y="696" width="24" height="24" fill="#001932"/><rect x="24" y="696" width="24" height="24" fill="#00172e"/><rect x="48" y="696" width="24" height="24" fill="#00152a"/><rect x="72" y="696" width="24" height="24" fill="#001426"/><rect x="96" y="696" width="24" height="24" fill="#001223"/><rect x="120" y="696" width="24" height="24" fill="#001121"/><rect x="144" y="696" width="24" height="24" fill="#001120"/><rect x="168" y="696" width="24" height="24" fill="#001221"/><rect x="192" y="696" width="24" height="24" fill="#001324"/><rect x="216" y="696" width="24" height="24" fill="#001528"/><rect x="240" y="696" width="24" height="24" fill="#00182e"/><rect x="264" y="696" width="24" height="24" fill="#001b34"/><rect x="288" y="696" width="24" height="24" fill="#001d3a"/><rect x="312" y="696" width="24" height="24" fill="#001f3f"/><rect x="336" y="696" width="24" height="24" fill="#002043"/><rect x="360" y="696" width="24" height="24" fill="#002145"/><rect x="384" y="696" width="24" height="24" fill="#002146"/><rect x="408" y="696" width="24" height="24" fill="#002145"/><rect x="1776" y="696" width="24" height="24" fill="#003f78"/><rect x="1800" y="696" width="24" height="24" fill="#00407a"/><rect x="1824" y="696" width="24" height="24" fill="#003f7a"/><rect x="1848" y="696" width="24" height="24" fill="#003e76"/><rect x="1872" y="696" width="24" height="24" fill="#003b71"/><rect x="1896" y="696" width="24" height="24" fill="#00376a"/><rect x="1920" y="696" width="24" height="24" fill="#003262"/><rect x="1944" y="696" width="24" height="24" fill="#002e5a"/><rect x="1968" y="696" width="24" height="24" fill="#002a53"/><rect x="1992" y="696" width="24" height="24" fill="#00274d"/><rect x="2016" y="696" width="24" height="24" fill="#002548"/><rect x="2040" y="696" width="24" height="24" fill="#002344"/><rect x="2064" y="696" width="24" height="24" fill="#002242"/><rect x="0" y="720" width="24" height="24" fill="#001a33"/><rect x="24" y="720" width="24" height="24" fill="#001830"/><rect x="48" y="720" width="24" height="24" fill="#00162c"/><rect x="72" y="720" width="24" height="24" fill="#001429"/><rect x="96" y="720" width="24" height="24" fill="#001325"/><rect x="120" y="720" width="24" height="24" fill="#001223"/><rect x="144" y="720" width="24" height="24" fill="#001223"/><rect x="168" y="720" width="24" height="24" fill="#001324"/><rect x="192" y="720" width="24" height="24" fill="#001426"/><rect x="216" y="720" width="24" height="24" fill="#00162b"/><rect x="240" y="720" width="24" height="24" fill="#001930"/><rect x="264" y="720" width="24" height="24" fill="#001b36"/><rect x="288" y="720" width="24" height="24" fill="#001e3b"/><rect x="312" y="720" width="24" height="24" fill="#001f40"/><rect x="336" y="720" width="24" height="24" fill="#002143"/><rect x="360" y="720" width="24" height="24" fill="#002145"/><rect x="384" y="720" width="24" height="24" fill="#002146"/><rect x="408" y="720" width="24" height="24" fill="#002146"/><rect x="1776" y="720" width="24" height="24" fill="#00427e"/><rect x="1800" y="720" width="24" height="24" fill="#004481"/><rect x="1824" y="720" width="24" height="24" fill="#004481"/><rect x="1848" y="720" width="24" height="24" fill="#00427e"/><rect x="1872" y="720" width="24" height="24" fill="#003f79"/><rect x="1896" y="720" width="24" height="24" fill="#003b72"/><rect x="1920" y="720" width="24" height="24" fill="#00376a"/><rect x="1944" y="720" width="24" height="24" fill="#003262"/><rect x="1968" y="720" width="24" height="24" fill="#002e5a"/><rect x="1992" y="720" width="24" height="24" fill="#002a52"/><rect x="2016" y="720" width="24" height="24" fill="#00274d"/><rect x="2040" y="720" width="24" height="24" fill="#002448"/><rect x="2064" y="720" width="24" height="24" fill="#002345"/><rect x="0" y="744" width="24" height="24" fill="#001a35"/><rect x="24" y="744" width="24" height="24" fill="#001932"/><rect x="48" y="744" width="24" height="24" fill="#00172e"/><rect x="72" y="744" width="24" height="24" fill="#00152b"/><rect x="96" y="744" width="24" height="24" fill="#001428"/><rect x="120" y="744" width="24" height="24" fill="#001326"/><rect x="144" y="744" width="24" height="24" fill="#001326"/><rect x="168" y="744" width="24" height="24" fill="#001427"/><rect x="192" y="744" width="24" height="24" fill="#001529"/><rect x="216" y="744" width="24" height="24" fill="#00172d"/><rect x="240" y="744" width="24" height="24" fill="#001a32"/><rect x="264" y="744" width="24" height="24" fill="#001c38"/><rect x="288" y="744" width="24" height="24" fill="#001e3d"/><rect x="312" y="744" width="24" height="24" fill="#002041"/><rect x="336" y="744" width="24" height="24" fill="#002144"/><rect x="360" y="744" width="24" height="24" fill="#002246"/><rect x="384" y="744" width="24" height="24" fill="#002147"/><rect x="408" y="744" width="24" height="24" fill="#002146"/><rect x="1776" y="744" width="24" height="24" fill="#004582"/><rect x="1800" y="744" width="24" height="24" fill="#004786"/><rect x="1824" y="744" width="24" height="24" fill="#004787"/><rect x="1848" y="744" width="24" height="24" fill="#004685"/><rect x="1872" y="744" width="24" height="24" fill="#004380"/><rect x="1896" y="744" width="24" height="24" fill="#003f79"/><rect x="1920" y="744" width="24" height="24" fill="#003a71"/><rect x="1944" y="744" width="24" height="24" fill="#003568"/><rect x="1968" y="744" width="24" height="24" fill="#00305f"/><rect x="1992" y="744" width="24" height="24" fill="#002c57"/><rect x="2016" y="744" width="24" height="24" fill="#002851"/><rect x="2040" y="744" width="24" height="24" fill="#00264b"/><rect x="2064" y="744" width="24" height="24" fill="#002447"/><rect x="0" y="768" width="24" height="24" fill="#001b36"/><rect x="24" y="768" width="24" height="24" fill="#001933"/><rect x="48" y="768" width="24" height="24" fill="#001830"/><rect x="72" y="768" width="24" height="24" fill="#00162d"/><rect x="96" y="768" width="24" height="24" fill="#00152b"/><rect x="120" y="768" width="24" height="24" fill="#001429"/><rect x="144" y="768" width="24" height="24" fill="#001429"/><rect x="168" y="768" width="24" height="24" fill="#00152a"/><rect x="192" y="768" width="24" height="24" fill="#00172c"/><rect x="216" y="768" width="24" height="24" fill="#00192f"/><rect x="240" y="768" width="24" height="24" fill="#001b34"/><rect x="264" y="768" width="24" height="24" fill="#001d39"/><rect x="288" y="768" width="24" height="24" fill="#001f3d"/><rect x="312" y="768" width="24" height="24" fill="#002142"/><rect x="336" y="768" width="24" height="24" fill="#002244"/><rect x="360" y="768" width="24" height="24" fill="#002246"/><rect x="384" y="768" width="24" height="24" fill="#002247"/><rect x="408" y="768" width="24" height="24" fill="#002146"/><rect x="1776" y="768" width="24" height="24" fill="#004785"/><rect x="1800" y="768" width="24" height="24" fill="#004989"/><rect x="1824" y="768" width="24" height="24" fill="#00498a"/><rect x="1848" y="768" width="24" height="24" fill="#004888"/><rect x="1872" y="768" width="24" height="24" fill="#004584"/><rect x="1896" y="768" width="24" height="24" fill="#00417d"/><rect x="1920" y="768" width="24" height="24" fill="#003c75"/><rect x="1944" y="768" width="24" height="24" fill="#00376c"/><rect x="1968" y="768" width="24" height="24" fill="#003263"/><rect x="1992" y="768" width="24" height="24" fill="#002d5b"/><rect x="2016" y="768" width="24" height="24" fill="#002a54"/><rect x="2040" y="768" width="24" height="24" fill="#00274e"/><rect x="2064" y="768" width="24" height="24" fill="#002449"/><rect x="0" y="792" width="24" height="24" fill="#001b37"/><rect x="24" y="792" width="24" height="24" fill="#001a35"/><rect x="48" y="792" width="24" height="24" fill="#001832"/><rect x="72" y="792" width="24" height="24" fill="#00172f"/><rect x="96" y="792" width="24" height="24" fill="#00162d"/><rect x="120" y="792" width="24" height="24" fill="#00152c"/><rect x="144" y="792" width="24" height="24" fill="#00152b"/><rect x="168" y="792" width="24" height="24" fill="#00162c"/><rect x="192" y="792" width="24" height="24" fill="#00172e"/><rect x="216" y="792" width="24" height="24" fill="#001931"/><rect x="240" y="792" width="24" height="24" fill="#001b35"/><rect x="264" y="792" width="24" height="24" fill="#001d39"/><rect x="288" y="792" width="24" height="24" fill="#001f3d"/><rect x="312" y="792" width="24" height="24" fill="#002141"/><rect x="336" y="792" width="24" height="24" fill="#002144"/><rect x="360" y="792" width="24" height="24" fill="#002245"/><rect x="384" y="792" width="24" height="24" fill="#002146"/><rect x="408" y="792" width="24" height="24" fill="#002146"/><rect x="1776" y="792" width="24" height="24" fill="#004784"/><rect x="1800" y="792" width="24" height="24" fill="#004988"/><rect x="1824" y="792" width="24" height="24" fill="#00498a"/><rect x="1848" y="792" width="24" height="24" fill="#004888"/><rect x="1872" y="792" width="24" height="24" fill="#004584"/><rect x="1896" y="792" width="24" height="24" fill="#00417e"/><rect x="1920" y="792" width="24" height="24" fill="#003d76"/><rect x="1944" y="792" width="24" height="24" fill="#00376d"/><rect x="1968" y="792" width="24" height="24" fill="#003264"/><rect x="1992" y="792" width="24" height="24" fill="#002e5c"/><rect x="2016" y="792" width="24" height="24" fill="#002a55"/><rect x="2040" y="792" width="24" height="24" fill="#00274f"/><rect x="2064" y="792" width="24" height="24" fill="#00254a"/><rect x="0" y="816" width="24" height="24" fill="#001b38"/><rect x="24" y="816" width="24" height="24" fill="#001a36"/><rect x="48" y="816" width="24" height="24" fill="#001934"/><rect x="72" y="816" width="24" height="24" fill="#001731"/><rect x="96" y="816" width="24" height="24" fill="#00162f"/><rect x="120" y="816" width="24" height="24" fill="#00162d"/><rect x="144" y="816" width="24" height="24" fill="#00162d"/><rect x="168" y="816" width="24" height="24" fill="#00162d"/><rect x="192" y="816" width="24" height="24" fill="#00182e"/><rect x="216" y="816" width="24" height="24" fill="#001931"/><rect x="240" y="816" width="24" height="24" fill="#001b34"/><rect x="264" y="816" width="24" height="24" fill="#001d38"/><rect x="288" y="816" width="24" height="24" fill="#001f3c"/><rect x="312" y="816" width="24" height="24" fill="#00203f"/><rect x="336" y="816" width="24" height="24" fill="#002142"/><rect x="360" y="816" width="24" height="24" fill="#002143"/><rect x="384" y="816" width="24" height="24" fill="#002144"/><rect x="408" y="816" width="24" height="24" fill="#002045"/><rect x="1776" y="816" width="24" height="24" fill="#004581"/><rect x="1800" y="816" width="24" height="24" fill="#004784"/><rect x="1824" y="816" width="24" height="24" fill="#004886"/><rect x="1848" y="816" width="24" height="24" fill="#004684"/><rect x="1872" y="816" width="24" height="24" fill="#004481"/><rect x="1896" y="816" width="24" height="24" fill="#00407b"/><rect x="1920" y="816" width="24" height="24" fill="#003b73"/><rect x="1944" y="816" width="24" height="24" fill="#00376b"/><rect x="1968" y="816" width="24" height="24" fill="#003263"/><rect x="1992" y="816" width="24" height="24" fill="#002d5b"/><rect x="2016" y="816" width="24" height="24" fill="#002a55"/><rect x="2040" y="816" width="24" height="24" fill="#00274f"/><rect x="2064" y="816" width="24" height="24" fill="#00244a"/><rect x="0" y="840" width="24" height="24" fill="#001c39"/><rect x="24" y="840" width="24" height="24" fill="#001a37"/><rect x="48" y="840" width="24" height="24" fill="#001935"/><rect x="72" y="840" width="24" height="24" fill="#001832"/><rect x="96" y="840" width="24" height="24" fill="#001730"/><rect x="120" y="840" width="24" height="24" fill="#00162e"/><rect x="144" y="840" width="24" height="24" fill="#00162d"/><rect x="168" y="840" width="24" height="24" fill="#00162d"/><rect x="192" y="840" width="24" height="24" fill="#00172e"/><rect x="216" y="840" width="24" height="24" fill="#001930"/><rect x="240" y="840" width="24" height="24" fill="#001a32"/><rect x="264" y="840" width="24" height="24" fill="#001c36"/><rect x="288" y="840" width="24" height="24" fill="#001d39"/><rect x="312" y="840" width="24" height="24" fill="#001e3c"/><rect x="336" y="840" width="24" height="24" fill="#001f3e"/><rect x="360" y="840" width="24" height="24" fill="#001f41"/><rect x="384" y="840" width="24" height="24" fill="#001f42"/><rect x="408" y="840" width="24" height="24" fill="#001f42"/><rect x="1776" y="840" width="24" height="24" fill="#00427a"/><rect x="1800" y="840" width="24" height="24" fill="#00447e"/><rect x="1824" y="840" width="24" height="24" fill="#00447f"/><rect x="1848" y="840" width="24" height="24" fill="#00437d"/><rect x="1872" y="840" width="24" height="24" fill="#00407a"/><rect x="1896" y="840" width="24" height="24" fill="#003d75"/><rect x="1920" y="840" width="24" height="24" fill="#00396e"/><rect x="1944" y="840" width="24" height="24" fill="#003467"/><rect x="1968" y="840" width="24" height="24" fill="#003060"/><rect x="1992" y="840" width="24" height="24" fill="#002c59"/><rect x="2016" y="840" width="24" height="24" fill="#002953"/><rect x="2040" y="840" width="24" height="24" fill="#00264e"/><rect x="2064" y="840" width="24" height="24" fill="#00244a"/><rect x="0" y="864" width="24" height="24" fill="#001c3a"/><rect x="24" y="864" width="24" height="24" fill="#001a38"/><rect x="48" y="864" width="24" height="24" fill="#001935"/><rect x="72" y="864" width="24" height="24" fill="#001833"/><rect x="96" y="864" width="24" height="24" fill="#001731"/><rect x="120" y="864" width="24" height="24" fill="#00162f"/><rect x="144" y="864" width="24" height="24" fill="#00162d"/><rect x="168" y="864" width="24" height="24" fill="#00162d"/><rect x="192" y="864" width="24" height="24" fill="#00172d"/><rect x="216" y="864" width="24" height="24" fill="#00182e"/><rect x="240" y="864" width="24" height="24" fill="#001930"/><rect x="264" y="864" width="24" height="24" fill="#001a32"/><rect x="288" y="864" width="24" height="24" fill="#001b35"/><rect x="312" y="864" width="24" height="24" fill="#001c38"/><rect x="336" y="864" width="24" height="24" fill="#001d3b"/><rect x="360" y="864" width="24" height="24" fill="#001d3d"/><rect x="384" y="864" width="24" height="24" fill="#001d3f"/><rect x="408" y="864" width="24" height="24" fill="#001d40"/><rect x="1776" y="864" width="24" height="24" fill="#003d72"/><rect x="1800" y="864" width="24" height="24" fill="#003f75"/><rect x="1824" y="864" width="24" height="24" fill="#003f75"/><rect x="1848" y="864" width="24" height="24" fill="#003e74"/><rect x="1872" y="864" width="24" height="24" fill="#003c71"/><rect x="1896" y="864" width="24" height="24" fill="#00396c"/><rect x="1920" y="864" width="24" height="24" fill="#003567"/><rect x="1944" y="864" width="24" height="24" fill="#003261"/><rect x="1968" y="864" width="24" height="24" fill="#002e5b"/><rect x="1992" y="864" width="24" height="24" fill="#002b55"/><rect x="2016" y="864" width="24" height="24" fill="#002850"/><rect x="2040" y="864" width="24" height="24" fill="#00254c"/><rect x="2064" y="864" width="24" height="24" fill="#002449"/><rect x="0" y="888" width="24" height="24" fill="#001c3a"/><rect x="24" y="888" width="24" height="24" fill="#001b38"/><rect x="48" y="888" width="24" height="24" fill="#001936"/><rect x="72" y="888" width="24" height="24" fill="#001833"/><rect x="96" y="888" width="24" height="24" fill="#001731"/><rect x="120" y="888" width="24" height="24" fill="#00162f"/><rect x="144" y="888" width="24" height="24" fill="#00152d"/><rect x="168" y="888" width="24" height="24" fill="#00152c"/><rect x="192" y="888" width="24" height="24" fill="#00162b"/><rect x="216" y="888" width="24" height="24" fill="#00162c"/><rect x="240" y="888" width="24" height="24" fill="#00172d"/><rect x="264" y="888" width="24" height="24" fill="#00182f"/><rect x="288" y="888" width="24" height="24" fill="#001931"/><rect x="312" y="888" width="24" height="24" fill="#001a34"/><rect x="336" y="888" width="24" height="24" fill="#001b37"/><rect x="360" y="888" width="24" height="24" fill="#001b39"/><rect x="384" y="888" width="24" height="24" fill="#001c3b"/><rect x="408" y="888" width="24" height="24" fill="#001c3d"/><rect x="1776" y="888" width="24" height="24" fill="#00386a"/><rect x="1800" y="888" width="24" height="24" fill="#00396b"/><rect x="1824" y="888" width="24" height="24" fill="#00396b"/><rect x="1848" y="888" width="24" height="24" fill="#00386a"/><rect x="1872" y="888" width="24" height="24" fill="#003667"/><rect x="1896" y="888" width="24" height="24" fill="#003463"/><rect x="1920" y="888" width="24" height="24" fill="#00315f"/><rect x="1944" y="888" width="24" height="24" fill="#002e5a"/><rect x="1968" y="888" width="24" height="24" fill="#002b56"/><rect x="1992" y="888" width="24" height="24" fill="#002951"/><rect x="2016" y="888" width="24" height="24" fill="#00264e"/><rect x="2040" y="888" width="24" height="24" fill="#00244a"/><rect x="2064" y="888" width="24" height="24" fill="#002347"/><rect x="0" y="912" width="24" height="24" fill="#001c3a"/><rect x="24" y="912" width="24" height="24" fill="#001b38"/><rect x="48" y="912" width="24" height="24" fill="#001936"/><rect x="72" y="912" width="24" height="24" fill="#001833"/><rect x="96" y="912" width="24" height="24" fill="#001731"/><rect x="120" y="912" width="24" height="24" fill="#00162e"/><rect x="144" y="912" width="24" height="24" fill="#00152c"/><rect x="168" y="912" width="24" height="24" fill="#00152b"/><rect x="192" y="912" width="24" height="24" fill="#00152a"/><rect x="216" y="912" width="24" height="24" fill="#00152a"/><rect x="240" y="912" width="24" height="24" fill="#00162a"/><rect x="264" y="912" width="24" height="24" fill="#00172c"/><rect x="288" y="912" width="24" height="24" fill="#00172e"/><rect x="312" y="912" width="24" height="24" fill="#001831"/><rect x="336" y="912" width="24" height="24" fill="#001933"/><rect x="360" y="912" width="24" height="24" fill="#001936"/><rect x="384" y="912" width="24" height="24" fill="#001a39"/><rect x="408" y="912" width="24" height="24" fill="#001a3b"/><rect x="1776" y="912" width="24" height="24" fill="#003361"/><rect x="1800" y="912" width="24" height="24" fill="#003462"/><rect x="1824" y="912" width="24" height="24" fill="#003361"/><rect x="1848" y="912" width="24" height="24" fill="#00335f"/><rect x="1872" y="912" width="24" height="24" fill="#00315d"/><rect x="1896" y="912" width="24" height="24" fill="#002f5a"/><rect x="1920" y="912" width="24" height="24" fill="#002d57"/><rect x="1944" y="912" width="24" height="24" fill="#002b54"/><rect x="1968" y="912" width="24" height="24" fill="#002951"/><rect x="1992" y="912" width="24" height="24" fill="#00274e"/><rect x="2016" y="912" width="24" height="24" fill="#00254b"/><rect x="2040" y="912" width="24" height="24" fill="#002448"/><rect x="2064" y="912" width="24" height="24" fill="#002346"/><rect x="0" y="936" width="24" height="24" fill="#001c3a"/><rect x="24" y="936" width="24" height="24" fill="#001b39"/><rect x="48" y="936" width="24" height="24" fill="#001936"/><rect x="72" y="936" width="24" height="24" fill="#001834"/><rect x="96" y="936" width="24" height="24" fill="#001731"/><rect x="120" y="936" width="24" height="24" fill="#00152e"/><rect x="144" y="936" width="24" height="24" fill="#00142c"/><rect x="168" y="936" width="24" height="24" fill="#00142a"/><rect x="192" y="936" width="24" height="24" fill="#001429"/><rect x="216" y="936" width="24" height="24" fill="#001428"/><rect x="240" y="936" width="24" height="24" fill="#001428"/><rect x="264" y="936" width="24" height="24" fill="#00152a"/><rect x="288" y="936" width="24" height="24" fill="#00162b"/><rect x="312" y="936" width="24" height="24" fill="#00172e"/><rect x="336" y="936" width="24" height="24" fill="#001731"/><rect x="360" y="936" width="24" height="24" fill="#001834"/><rect x="384" y="936" width="24" height="24" fill="#001936"/><rect x="408" y="936" width="24" height="24" fill="#001939"/><rect x="1776" y="936" width="24" height="24" fill="#002e5a"/><rect x="1800" y="936" width="24" height="24" fill="#002f5a"/><rect x="1824" y="936" width="24" height="24" fill="#002e59"/><rect x="1848" y="936" width="24" height="24" fill="#002e57"/><rect x="1872" y="936" width="24" height="24" fill="#002c55"/><rect x="1896" y="936" width="24" height="24" fill="#002b53"/><rect x="1920" y="936" width="24" height="24" fill="#002a51"/><rect x="1944" y="936" width="24" height="24" fill="#00284f"/><rect x="1968" y="936" width="24" height="24" fill="#00274d"/><rect x="1992" y="936" width="24" height="24" fill="#00254b"/><rect x="2016" y="936" width="24" height="24" fill="#002449"/><rect x="2040" y="936" width="24" height="24" fill="#002347"/><rect x="2064" y="936" width="24" height="24" fill="#002246"/><rect x="0" y="960" width="24" height="24" fill="#001c3b"/><rect x="24" y="960" width="24" height="24" fill="#001b39"/><rect x="48" y="960" width="24" height="24" fill="#001a36"/><rect x="72" y="960" width="24" height="24" fill="#001834"/><rect x="96" y="960" width="24" height="24" fill="#001731"/><rect x="120" y="960" width="24" height="24" fill="#00152e"/><rect x="144" y="960" width="24" height="24" fill="#00142c"/><rect x="168" y="960" width="24" height="24" fill="#00132a"/><rect x="192" y="960" width="24" height="24" fill="#001328"/><rect x="216" y="960" width="24" height="24" fill="#001327"/><rect x="240" y="960" width="24" height="24" fill="#001427"/><rect x="264" y="960" width="24" height="24" fill="#001428"/><rect x="288" y="960" width="24" height="24" fill="#00152a"/><rect x="312" y="960" width="24" height="24" fill="#00162c"/><rect x="336" y="960" width="24" height="24" fill="#00172f"/><rect x="360" y="960" width="24" height="24" fill="#001732"/><rect x="384" y="960" width="24" height="24" fill="#001835"/><rect x="408" y="960" width="24" height="24" fill="#001937"/><rect x="432" y="960" width="24" height="24" fill="#001939"/><rect x="456" y="960" width="24" height="24" fill="#001a3b"/><rect x="480" y="960" width="24" height="24" fill="#001b3c"/><rect x="504" y="960" width="24" height="24" fill="#001b3d"/><rect x="528" y="960" width="24" height="24" fill="#001c3d"/><rect x="552" y="960" width="24" height="24" fill="#001c3d"/><rect x="576" y="960" width="24" height="24" fill="#001c3d"/><rect x="600" y="960" width="24" height="24" fill="#001d3d"/><rect x="624" y="960" width="24" height="24" fill="#001d3d"/><rect x="648" y="960" width="24" height="24" fill="#001e3d"/><rect x="672" y="960" width="24" height="24" fill="#001f3e"/><rect x="696" y="960" width="24" height="24" fill="#001f3f"/><rect x="720" y="960" width="24" height="24" fill="#002041"/><rect x="744" y="960" width="24" height="24" fill="#002242"/><rect x="768" y="960" width="24" height="24" fill="#002344"/><rect x="792" y="960" width="24" height="24" fill="#002446"/><rect x="816" y="960" width="24" height="24" fill="#002547"/><rect x="840" y="960" width="24" height="24" fill="#002549"/><rect x="864" y="960" width="24" height="24" fill="#002649"/><rect x="888" y="960" width="24" height="24" fill="#00264a"/><rect x="912" y="960" width="24" height="24" fill="#00264a"/><rect x="936" y="960" width="24" height="24" fill="#00264b"/><rect x="960" y="960" width="24" height="24" fill="#00264b"/><rect x="984" y="960" width="24" height="24" fill="#00264c"/><rect x="1008" y="960" width="24" height="24" fill="#00274d"/><rect x="1032" y="960" width="24" height="24" fill="#002850"/><rect x="1056" y="960" width="24" height="24" fill="#002953"/><rect x="1080" y="960" width="24" height="24" fill="#002b57"/><rect x="1104" y="960" width="24" height="24" fill="#002e5c"/><rect x="1128" y="960" width="24" height="24" fill="#003061"/><rect x="1152" y="960" width="24" height="24" fill="#003365"/><rect x="1176" y="960" width="24" height="24" fill="#003569"/><rect x="1200" y="960" width="24" height="24" fill="#00376c"/><rect x="1224" y="960" width="24" height="24" fill="#00396e"/><rect x="1248" y="960" width="24" height="24" fill="#003b70"/><rect x="1272" y="960" width="24" height="24" fill="#003e73"/><rect x="1296" y="960" width="24" height="24" fill="#004178"/><rect x="1320" y="960" width="24" height="24" fill="#00457f"/><rect x="1344" y="960" width="24" height="24" fill="#004a87"/><rect x="1368" y="960" width="24" height="24" fill="#004f91"/><rect x="1392" y="960" width="24" height="24" fill="#00549a"/><rect x="1416" y="960" width="24" height="24" fill="#0058a2"/><rect x="1440" y="960" width="24" height="24" fill="#0059a5"/><rect x="1464" y="960" width="24" height="24" fill="#0058a4"/><rect x="1488" y="960" width="24" height="24" fill="#00559d"/><rect x="1512" y="960" width="24" height="24" fill="#004f92"/><rect x="1536" y="960" width="24" height="24" fill="#004885"/><rect x="1560" y="960" width="24" height="24" fill="#004077"/><rect x="1584" y="960" width="24" height="24" fill="#00396a"/><rect x="1608" y="960" width="24" height="24" fill="#003360"/><rect x="1632" y="960" width="24" height="24" fill="#002e59"/><rect x="1656" y="960" width="24" height="24" fill="#002c55"/><rect x="1680" y="960" width="24" height="24" fill="#002a54"/><rect x="1704" y="960" width="24" height="24" fill="#002a54"/><rect x="1728" y="960" width="24" height="24" fill="#002a55"/><rect x="1752" y="960" width="24" height="24" fill="#002a55"/><rect x="1776" y="960" width="24" height="24" fill="#002b55"/><rect x="1800" y="960" width="24" height="24" fill="#002b54"/><rect x="1824" y="960" width="24" height="24" fill="#002a52"/><rect x="1848" y="960" width="24" height="24" fill="#002951"/><rect x="1872" y="960" width="24" height="24" fill="#00294f"/><rect x="1896" y="960" width="24" height="24" fill="#00284d"/><rect x="1920" y="960" width="24" height="24" fill="#00274c"/><rect x="1944" y="960" width="24" height="24" fill="#00264b"/><rect x="1968" y="960" width="24" height="24" fill="#00254a"/><rect x="1992" y="960" width="24" height="24" fill="#002449"/><rect x="2016" y="960" width="24" height="24" fill="#002448"/><rect x="2040" y="960" width="24" height="24" fill="#002346"/><rect x="2064" y="960" width="24" height="24" fill="#002245"/><rect x="0" y="984" width="24" height="24" fill="#001c3b"/><rect x="24" y="984" width="24" height="24" fill="#001b39"/><rect x="48" y="984" width="24" height="24" fill="#001a37"/><rect x="72" y="984" width="24" height="24" fill="#001834"/><rect x="96" y="984" width="24" height="24" fill="#001732"/><rect x="120" y="984" width="24" height="24" fill="#00152f"/><rect x="144" y="984" width="24" height="24" fill="#00142c"/><rect x="168" y="984" width="24" height="24" fill="#00132a"/><rect x="192" y="984" width="24" height="24" fill="#001328"/><rect x="216" y="984" width="24" height="24" fill="#001327"/><rect x="240" y="984" width="24" height="24" fill="#001327"/><rect x="264" y="984" width="24" height="24" fill="#001428"/><rect x="288" y="984" width="24" height="24" fill="#001529"/><rect x="312" y="984" width="24" height="24" fill="#00152c"/><rect x="336" y="984" width="24" height="24" fill="#00162e"/><rect x="360" y="984" width="24" height="24" fill="#001731"/><rect x="384" y="984" width="24" height="24" fill="#001834"/><rect x="408" y="984" width="24" height="24" fill="#001937"/><rect x="432" y="984" width="24" height="24" fill="#001a39"/><rect x="456" y="984" width="24" height="24" fill="#001a3b"/><rect x="480" y="984" width="24" height="24" fill="#001b3c"/><rect x="504" y="984" width="24" height="24" fill="#001b3c"/><rect x="528" y="984" width="24" height="24" fill="#001c3d"/><rect x="552" y="984" width="24" height="24" fill="#001c3c"/><rect x="576" y="984" width="24" height="24" fill="#001c3c"/><rect x="600" y="984" width="24" height="24" fill="#001d3c"/><rect x="624" y="984" width="24" height="24" fill="#001d3c"/><rect x="648" y="984" width="24" height="24" fill="#001e3d"/><rect x="672" y="984" width="24" height="24" fill="#001e3e"/><rect x="696" y="984" width="24" height="24" fill="#001f3f"/><rect x="720" y="984" width="24" height="24" fill="#002041"/><rect x="744" y="984" width="24" height="24" fill="#002242"/><rect x="768" y="984" width="24" height="24" fill="#002344"/><rect x="792" y="984" width="24" height="24" fill="#002446"/><rect x="816" y="984" width="24" height="24" fill="#002548"/><rect x="840" y="984" width="24" height="24" fill="#002649"/><rect x="864" y="984" width="24" height="24" fill="#00264a"/><rect x="888" y="984" width="24" height="24" fill="#00264b"/><rect x="912" y="984" width="24" height="24" fill="#00264b"/><rect x="936" y="984" width="24" height="24" fill="#00264b"/><rect x="960" y="984" width="24" height="24" fill="#00264c"/><rect x="984" y="984" width="24" height="24" fill="#00264d"/><rect x="1008" y="984" width="24" height="24" fill="#00274e"/><rect x="1032" y="984" width="24" height="24" fill="#002851"/><rect x="1056" y="984" width="24" height="24" fill="#002a54"/><rect x="1080" y="984" width="24" height="24" fill="#002c59"/><rect x="1104" y="984" width="24" height="24" fill="#002e5d"/><rect x="1128" y="984" width="24" height="24" fill="#003162"/><rect x="1152" y="984" width="24" height="24" fill="#003467"/><rect x="1176" y="984" width="24" height="24" fill="#00366a"/><rect x="1200" y="984" width="24" height="24" fill="#00386d"/><rect x="1224" y="984" width="24" height="24" fill="#003a6f"/><rect x="1248" y="984" width="24" height="24" fill="#003b70"/><rect x="1272" y="984" width="24" height="24" fill="#003d72"/><rect x="1296" y="984" width="24" height="24" fill="#003f75"/><rect x="1320" y="984" width="24" height="24" fill="#00427a"/><rect x="1344" y="984" width="24" height="24" fill="#004681"/><rect x="1368" y="984" width="24" height="24" fill="#004a8a"/><rect x="1392" y="984" width="24" height="24" fill="#004f92"/><rect x="1416" y="984" width="24" height="24" fill="#005298"/><rect x="1440" y="984" width="24" height="24" fill="#00539b"/><rect x="1464" y="984" width="24" height="24" fill="#00529a"/><rect x="1488" y="984" width="24" height="24" fill="#004f94"/><rect x="1512" y="984" width="24" height="24" fill="#004a8a"/><rect x="1536" y="984" width="24" height="24" fill="#00437d"/><rect x="1560" y="984" width="24" height="24" fill="#003c70"/><rect x="1584" y="984" width="24" height="24" fill="#003565"/><rect x="1608" y="984" width="24" height="24" fill="#00305c"/><rect x="1632" y="984" width="24" height="24" fill="#002c56"/><rect x="1656" y="984" width="24" height="24" fill="#002953"/><rect x="1680" y="984" width="24" height="24" fill="#002852"/><rect x="1704" y="984" width="24" height="24" fill="#002852"/><rect x="1728" y="984" width="24" height="24" fill="#002852"/><rect x="1752" y="984" width="24" height="24" fill="#002852"/><rect x="1776" y="984" width="24" height="24" fill="#002852"/><rect x="1800" y="984" width="24" height="24" fill="#002850"/><rect x="1824" y="984" width="24" height="24" fill="#00274f"/><rect x="1848" y="984" width="24" height="24" fill="#00274d"/><rect x="1872" y="984" width="24" height="24" fill="#00264b"/><rect x="1896" y="984" width="24" height="24" fill="#00264a"/><rect x="1920" y="984" width="24" height="24" fill="#00254a"/><rect x="1944" y="984" width="24" height="24" fill="#002549"/><rect x="1968" y="984" width="24" height="24" fill="#002449"/><rect x="1992" y="984" width="24" height="24" fill="#002448"/><rect x="2016" y="984" width="24" height="24" fill="#002347"/><rect x="2040" y="984" width="24" height="24" fill="#002346"/><rect x="2064" y="984" width="24" height="24" fill="#002245"/><rect x="0" y="1008" width="24" height="24" fill="#001d3b"/><rect x="24" y="1008" width="24" height="24" fill="#001b39"/><rect x="48" y="1008" width="24" height="24" fill="#001a37"/><rect x="72" y="1008" width="24" height="24" fill="#001835"/><rect x="96" y="1008" width="24" height="24" fill="#001732"/><rect x="120" y="1008" width="24" height="24" fill="#00162f"/><rect x="144" y="1008" width="24" height="24" fill="#00142d"/><rect x="168" y="1008" width="24" height="24" fill="#00132b"/><rect x="192" y="1008" width="24" height="24" fill="#001329"/><rect x="216" y="1008" width="24" height="24" fill="#001328"/><rect x="240" y="1008" width="24" height="24" fill="#001328"/><rect x="264" y="1008" width="24" height="24" fill="#001429"/><rect x="288" y="1008" width="24" height="24" fill="#00152a"/><rect x="312" y="1008" width="24" height="24" fill="#00162c"/><rect x="336" y="1008" width="24" height="24" fill="#00172f"/><rect x="360" y="1008" width="24" height="24" fill="#001832"/><rect x="384" y="1008" width="24" height="24" fill="#001935"/><rect x="408" y="1008" width="24" height="24" fill="#001937"/><rect x="432" y="1008" width="24" height="24" fill="#001a39"/><rect x="456" y="1008" width="24" height="24" fill="#001b3b"/><rect x="480" y="1008" width="24" height="24" fill="#001b3c"/><rect x="504" y="1008" width="24" height="24" fill="#001c3c"/><rect x="528" y="1008" width="24" height="24" fill="#001c3c"/><rect x="552" y="1008" width="24" height="24" fill="#001c3c"/><rect x="576" y="1008" width="24" height="24" fill="#001c3c"/><rect x="600" y="1008" width="24" height="24" fill="#001d3c"/><rect x="624" y="1008" width="24" height="24" fill="#001d3c"/><rect x="648" y="1008" width="24" height="24" fill="#001e3d"/><rect x="672" y="1008" width="24" height="24" fill="#001e3e"/><rect x="696" y="1008" width="24" height="24" fill="#001f3f"/><rect x="720" y="1008" width="24" height="24" fill="#002040"/><rect x="744" y="1008" width="24" height="24" fill="#002242"/><rect x="768" y="1008" width="24" height="24" fill="#002344"/><rect x="792" y="1008" width="24" height="24" fill="#002446"/><rect x="816" y="1008" width="24" height="24" fill="#002548"/><rect x="840" y="1008" width="24" height="24" fill="#002649"/><rect x="864" y="1008" width="24" height="24" fill="#00264a"/><rect x="888" y="1008" width="24" height="24" fill="#00264b"/><rect x="912" y="1008" width="24" height="24" fill="#00264b"/><rect x="936" y="1008" width="24" height="24" fill="#00264b"/><rect x="960" y="1008" width="24" height="24" fill="#00264c"/><rect x="984" y="1008" width="24" height="24" fill="#00264d"/><rect x="1008" y="1008" width="24" height="24" fill="#00274e"/><rect x="1032" y="1008" width="24" height="24" fill="#002851"/><rect x="1056" y="1008" width="24" height="24" fill="#002a55"/><rect x="1080" y="1008" width="24" height="24" fill="#002c59"/><rect x="1104" y="1008" width="24" height="24" fill="#002f5e"/><rect x="1128" y="1008" width="24" height="24" fill="#003163"/><rect x="1152" y="1008" width="24" height="24" fill="#003467"/><rect x="1176" y="1008" width="24" height="24" fill="#00366a"/><rect x="1200" y="1008" width="24" height="24" fill="#00376c"/><rect x="1224" y="1008" width="24" height="24" fill="#00396d"/><rect x="1248" y="1008" width="24" height="24" fill="#00396d"/><rect x="1272" y="1008" width="24" height="24" fill="#003a6e"/><rect x="1296" y="1008" width="24" height="24" fill="#003b6f"/><rect x="1320" y="1008" width="24" height="24" fill="#003d72"/><rect x="1344" y="1008" width="24" height="24" fill="#004077"/><rect x="1368" y="1008" width="24" height="24" fill="#00437e"/><rect x="1392" y="1008" width="24" height="24" fill="#004684"/><rect x="1416" y="1008" width="24" height="24" fill="#004989"/><rect x="1440" y="1008" width="24" height="24" fill="#004a8c"/><rect x="1464" y="1008" width="24" height="24" fill="#00498a"/><rect x="1488" y="1008" width="24" height="24" fill="#004685"/><rect x="1512" y="1008" width="24" height="24" fill="#00427c"/><rect x="1536" y="1008" width="24" height="24" fill="#003c71"/><rect x="1560" y="1008" width="24" height="24" fill="#003667"/><rect x="1584" y="1008" width="24" height="24" fill="#00305d"/><rect x="1608" y="1008" width="24" height="24" fill="#002c56"/><rect x="1632" y="1008" width="24" height="24" fill="#002951"/><rect x="1656" y="1008" width="24" height="24" fill="#002750"/><rect x="1680" y="1008" width="24" height="24" fill="#002650"/><rect x="1704" y="1008" width="24" height="24" fill="#002650"/><rect x="1728" y="1008" width="24" height="24" fill="#002651"/><rect x="1752" y="1008" width="24" height="24" fill="#002651"/><rect x="1776" y="1008" width="24" height="24" fill="#002650"/><rect x="1800" y="1008" width="24" height="24" fill="#00264f"/><rect x="1824" y="1008" width="24" height="24" fill="#00254d"/><rect x="1848" y="1008" width="24" height="24" fill="#00254b"/><rect x="1872" y="1008" width="24" height="24" fill="#00254a"/><rect x="1896" y="1008" width="24" height="24" fill="#002449"/><rect x="1920" y="1008" width="24" height="24" fill="#002449"/><rect x="1944" y="1008" width="24" height="24" fill="#002448"/><rect x="1968" y="1008" width="24" height="24" fill="#002448"/><rect x="1992" y="1008" width="24" height="24" fill="#002448"/><rect x="2016" y="1008" width="24" height="24" fill="#002347"/><rect x="2040" y="1008" width="24" height="24" fill="#002347"/><rect x="2064" y="1008" width="24" height="24" fill="#002246"/><rect x="0" y="1032" width="24" height="24" fill="#001d3c"/><rect x="24" y="1032" width="24" height="24" fill="#001c3a"/><rect x="48" y="1032" width="24" height="24" fill="#001a38"/><rect x="72" y="1032" width="24" height="24" fill="#001936"/><rect x="96" y="1032" width="24" height="24" fill="#001733"/><rect x="120" y="1032" width="24" height="24" fill="#001630"/><rect x="144" y="1032" width="24" height="24" fill="#00152e"/><rect x="168" y="1032" width="24" height="24" fill="#00142c"/><rect x="192" y="1032" width="24" height="24" fill="#00132a"/><rect x="216" y="1032" width="24" height="24" fill="#001329"/><rect x="240" y="1032" width="24" height="24" fill="#001429"/><rect x="264" y="1032" width="24" height="24" fill="#00152a"/><rect x="288" y="1032" width="24" height="24" fill="#00152c"/><rect x="312" y="1032" width="24" height="24" fill="#00172e"/><rect x="336" y="1032" width="24" height="24" fill="#001830"/><rect x="360" y="1032" width="24" height="24" fill="#001933"/><rect x="384" y="1032" width="24" height="24" fill="#001a35"/><rect x="408" y="1032" width="24" height="24" fill="#001a38"/><rect x="432" y="1032" width="24" height="24" fill="#001b3a"/><rect x="456" y="1032" width="24" height="24" fill="#001c3b"/><rect x="480" y="1032" width="24" height="24" fill="#001c3c"/><rect x="504" y="1032" width="24" height="24" fill="#001c3c"/><rect x="528" y="1032" width="24" height="24" fill="#001c3c"/><rect x="552" y="1032" width="24" height="24" fill="#001d3c"/><rect x="576" y="1032" width="24" height="24" fill="#001d3c"/><rect x="600" y="1032" width="24" height="24" fill="#001d3c"/><rect x="624" y="1032" width="24" height="24" fill="#001d3c"/><rect x="648" y="1032" width="24" height="24" fill="#001e3d"/><rect x="672" y="1032" width="24" height="24" fill="#001e3d"/><rect x="696" y="1032" width="24" height="24" fill="#001f3f"/><rect x="720" y="1032" width="24" height="24" fill="#002040"/><rect x="744" y="1032" width="24" height="24" fill="#002142"/><rect x="768" y="1032" width="24" height="24" fill="#002344"/><rect x="792" y="1032" width="24" height="24" fill="#002446"/><rect x="816" y="1032" width="24" height="24" fill="#002548"/><rect x="840" y="1032" width="24" height="24" fill="#002549"/><rect x="864" y="1032" width="24" height="24" fill="#00264a"/><rect x="888" y="1032" width="24" height="24" fill="#00264a"/><rect x="912" y="1032" width="24" height="24" fill="#00264b"/><rect x="936" y="1032" width="24" height="24" fill="#00264b"/><rect x="960" y="1032" width="24" height="24" fill="#00264c"/><rect x="984" y="1032" width="24" height="24" fill="#00264c"/><rect x="1008" y="1032" width="24" height="24" fill="#00274e"/><rect x="1032" y="1032" width="24" height="24" fill="#002851"/><rect x="1056" y="1032" width="24" height="24" fill="#002a54"/><rect x="1080" y="1032" width="24" height="24" fill="#002c58"/><rect x="1104" y="1032" width="24" height="24" fill="#002e5d"/><rect x="1128" y="1032" width="24" height="24" fill="#003162"/><rect x="1152" y="1032" width="24" height="24" fill="#003366"/><rect x="1176" y="1032" width="24" height="24" fill="#003568"/><rect x="1200" y="1032" width="24" height="24" fill="#00366a"/><rect x="1224" y="1032" width="24" height="24" fill="#00366a"/><rect x="1248" y="1032" width="24" height="24" fill="#003669"/><rect x="1272" y="1032" width="24" height="24" fill="#003667"/><rect x="1296" y="1032" width="24" height="24" fill="#003667"/><rect x="1320" y="1032" width="24" height="24" fill="#003768"/><rect x="1344" y="1032" width="24" height="24" fill="#00386b"/><rect x="1368" y="1032" width="24" height="24" fill="#003a6f"/><rect x="1392" y="1032" width="24" height="24" fill="#003c73"/><rect x="1416" y="1032" width="24" height="24" fill="#003e77"/><rect x="1440" y="1032" width="24" height="24" fill="#003e78"/><rect x="1464" y="1032" width="24" height="24" fill="#003e77"/><rect x="1488" y="1032" width="24" height="24" fill="#003b73"/><rect x="1512" y="1032" width="24" height="24" fill="#00386c"/><rect x="1536" y="1032" width="24" height="24" fill="#003363"/><rect x="1560" y="1032" width="24" height="24" fill="#002f5b"/><rect x="1584" y="1032" width="24" height="24" fill="#002b54"/><rect x="1608" y="1032" width="24" height="24" fill="#00274f"/><rect x="1632" y="1032" width="24" height="24" fill="#00254d"/><rect x="1656" y="1032" width="24" height="24" fill="#00244d"/><rect x="1680" y="1032" width="24" height="24" fill="#00244e"/><rect x="1704" y="1032" width="24" height="24" fill="#00254f"/><rect x="1728" y="1032" width="24" height="24" fill="#002551"/><rect x="1752" y="1032" width="24" height="24" fill="#002551"/><rect x="1776" y="1032" width="24" height="24" fill="#002550"/><rect x="1800" y="1032" width="24" height="24" fill="#00254f"/><rect x="1824" y="1032" width="24" height="24" fill="#00254d"/><rect x="1848" y="1032" width="24" height="24" fill="#00244b"/><rect x="1872" y="1032" width="24" height="24" fill="#00244a"/><rect x="1896" y="1032" width="24" height="24" fill="#002449"/><rect x="1920" y="1032" width="24" height="24" fill="#002449"/><rect x="1944" y="1032" width="24" height="24" fill="#002449"/><rect x="1968" y="1032" width="24" height="24" fill="#002449"/><rect x="1992" y="1032" width="24" height="24" fill="#002448"/><rect x="2016" y="1032" width="24" height="24" fill="#002348"/><rect x="2040" y="1032" width="24" height="24" fill="#002347"/><rect x="2064" y="1032" width="24" height="24" fill="#002346"/><rect x="0" y="1056" width="24" height="24" fill="#001d3c"/><rect x="24" y="1056" width="24" height="24" fill="#001c3a"/><rect x="48" y="1056" width="24" height="24" fill="#001b39"/><rect x="72" y="1056" width="24" height="24" fill="#001936"/><rect x="96" y="1056" width="24" height="24" fill="#001834"/><rect x="120" y="1056" width="24" height="24" fill="#001732"/><rect x="144" y="1056" width="24" height="24" fill="#00152f"/><rect x="168" y="1056" width="24" height="24" fill="#00152e"/><rect x="192" y="1056" width="24" height="24" fill="#00142c"/><rect x="216" y="1056" width="24" height="24" fill="#00142b"/><rect x="240" y="1056" width="24" height="24" fill="#00152b"/><rect x="264" y="1056" width="24" height="24" fill="#00162c"/><rect x="288" y="1056" width="24" height="24" fill="#00172e"/><rect x="312" y="1056" width="24" height="24" fill="#001830"/><rect x="336" y="1056" width="24" height="24" fill="#001932"/><rect x="360" y="1056" width="24" height="24" fill="#001a34"/><rect x="384" y="1056" width="24" height="24" fill="#001b37"/><rect x="408" y="1056" width="24" height="24" fill="#001c39"/><rect x="432" y="1056" width="24" height="24" fill="#001c3a"/><rect x="456" y="1056" width="24" height="24" fill="#001d3c"/><rect x="480" y="1056" width="24" height="24" fill="#001d3c"/><rect x="504" y="1056" width="24" height="24" fill="#001d3d"/><rect x="528" y="1056" width="24" height="24" fill="#001d3d"/><rect x="552" y="1056" width="24" height="24" fill="#001d3c"/><rect x="576" y="1056" width="24" height="24" fill="#001d3c"/><rect x="600" y="1056" width="24" height="24" fill="#001d3c"/><rect x="624" y="1056" width="24" height="24" fill="#001d3c"/><rect x="648" y="1056" width="24" height="24" fill="#001e3d"/><rect x="672" y="1056" width="24" height="24" fill="#001e3d"/><rect x="696" y="1056" width="24" height="24" fill="#001f3f"/><rect x="720" y="1056" width="24" height="24" fill="#002040"/><rect x="744" y="1056" width="24" height="24" fill="#002142"/><rect x="768" y="1056" width="24" height="24" fill="#002244"/><rect x="792" y="1056" width="24" height="24" fill="#002345"/><rect x="816" y="1056" width="24" height="24" fill="#002447"/><rect x="840" y="1056" width="24" height="24" fill="#002548"/><rect x="864" y="1056" width="24" height="24" fill="#002549"/><rect x="888" y="1056" width="24" height="24" fill="#00264a"/><rect x="912" y="1056" width="24" height="24" fill="#00264a"/><rect x="936" y="1056" width="24" height="24" fill="#00264a"/><rect x="960" y="1056" width="24" height="24" fill="#00264b"/><rect x="984" y="1056" width="24" height="24" fill="#00264c"/><rect x="1008" y="1056" width="24" height="24" fill="#00264d"/><rect x="1032" y="1056" width="24" height="24" fill="#002750"/><rect x="1056" y="1056" width="24" height="24" fill="#002953"/><rect x="1080" y="1056" width="24" height="24" fill="#002b57"/><rect x="1104" y="1056" width="24" height="24" fill="#002d5b"/><rect x="1128" y="1056" width="24" height="24" fill="#002f5f"/><rect x="1152" y="1056" width="24" height="24" fill="#003163"/><rect x="1176" y="1056" width="24" height="24" fill="#003365"/><rect x="1200" y="1056" width="24" height="24" fill="#003366"/><rect x="1224" y="1056" width="24" height="24" fill="#003365"/><rect x="1248" y="1056" width="24" height="24" fill="#003363"/><rect x="1272" y="1056" width="24" height="24" fill="#003260"/><rect x="1296" y="1056" width="24" height="24" fill="#00305d"/><rect x="1320" y="1056" width="24" height="24" fill="#00305c"/><rect x="1344" y="1056" width="24" height="24" fill="#00305c"/><rect x="1368" y="1056" width="24" height="24" fill="#00305e"/><rect x="1392" y="1056" width="24" height="24" fill="#003160"/><rect x="1416" y="1056" width="24" height="24" fill="#003263"/><rect x="1440" y="1056" width="24" height="24" fill="#003264"/><rect x="1464" y="1056" width="24" height="24" fill="#003162"/><rect x="1488" y="1056" width="24" height="24" fill="#00305f"/><rect x="1512" y="1056" width="24" height="24" fill="#002d5a"/><rect x="1536" y="1056" width="24" height="24" fill="#002a54"/><rect x="1560" y="1056" width="24" height="24" fill="#00274f"/><rect x="1584" y="1056" width="24" height="24" fill="#00254b"/><rect x="1608" y="1056" width="24" height="24" fill="#002348"/><rect x="1632" y="1056" width="24" height="24" fill="#002248"/><rect x="1656" y="1056" width="24" height="24" fill="#00224a"/><rect x="1680" y="1056" width="24" height="24" fill="#00234c"/><rect x="1704" y="1056" width="24" height="24" fill="#00244f"/><rect x="1728" y="1056" width="24" height="24" fill="#002450"/><rect x="1752" y="1056" width="24" height="24" fill="#002551"/><rect x="1776" y="1056" width="24" height="24" fill="#002551"/><rect x="1800" y="1056" width="24" height="24" fill="#00254f"/><rect x="1824" y="1056" width="24" height="24" fill="#00244e"/><rect x="1848" y="1056" width="24" height="24" fill="#00244c"/><rect x="1872" y="1056" width="24" height="24" fill="#00244b"/><rect x="1896" y="1056" width="24" height="24" fill="#00244a"/><rect x="1920" y="1056" width="24" height="24" fill="#00244a"/><rect x="1944" y="1056" width="24" height="24" fill="#00244a"/><rect x="1968" y="1056" width="24" height="24" fill="#00244a"/><rect x="1992" y="1056" width="24" height="24" fill="#002449"/><rect x="2016" y="1056" width="24" height="24" fill="#002448"/><rect x="2040" y="1056" width="24" height="24" fill="#002347"/><rect x="2064" y="1056" width="24" height="24" fill="#002346"/><rect x="0" y="1080" width="24" height="24" fill="#001d3c"/><rect x="24" y="1080" width="24" height="24" fill="#001c3b"/><rect x="48" y="1080" width="24" height="24" fill="#001b39"/><rect x="72" y="1080" width="24" height="24" fill="#001a37"/><rect x="96" y="1080" width="24" height="24" fill="#001935"/><rect x="120" y="1080" width="24" height="24" fill="#001733"/><rect x="144" y="1080" width="24" height="24" fill="#001631"/><rect x="168" y="1080" width="24" height="24" fill="#001630"/><rect x="192" y="1080" width="24" height="24" fill="#00152e"/><rect x="216" y="1080" width="24" height="24" fill="#00152e"/><rect x="240" y="1080" width="24" height="24" fill="#00162e"/><rect x="264" y="1080" width="24" height="24" fill="#00172f"/><rect x="288" y="1080" width="24" height="24" fill="#001830"/><rect x="312" y="1080" width="24" height="24" fill="#001932"/><rect x="336" y="1080" width="24" height="24" fill="#001a34"/><rect x="360" y="1080" width="24" height="24" fill="#001b36"/><rect x="384" y="1080" width="24" height="24" fill="#001c38"/><rect x="408" y="1080" width="24" height="24" fill="#001d3a"/><rect x="432" y="1080" width="24" height="24" fill="#001d3b"/><rect x="456" y="1080" width="24" height="24" fill="#001e3c"/><rect x="480" y="1080" width="24" height="24" fill="#001e3d"/><rect x="504" y="1080" width="24" height="24" fill="#001e3d"/><rect x="528" y="1080" width="24" height="24" fill="#001e3d"/><rect x="552" y="1080" width="24" height="24" fill="#001e3d"/><rect x="576" y="1080" width="24" height="24" fill="#001e3d"/><rect x="600" y="1080" width="24" height="24" fill="#001e3c"/><rect x="624" y="1080" width="24" height="24" fill="#001e3c"/><rect x="648" y="1080" width="24" height="24" fill="#001e3d"/><rect x="672" y="1080" width="24" height="24" fill="#001f3e"/><rect x="696" y="1080" width="24" height="24" fill="#001f3f"/><rect x="720" y="1080" width="24" height="24" fill="#002040"/><rect x="744" y="1080" width="24" height="24" fill="#002142"/><rect x="768" y="1080" width="24" height="24" fill="#002243"/><rect x="792" y="1080" width="24" height="24" fill="#002345"/><rect x="816" y="1080" width="24" height="24" fill="#002446"/><rect x="840" y="1080" width="24" height="24" fill="#002547"/><rect x="864" y="1080" width="24" height="24" fill="#002548"/><rect x="888" y="1080" width="24" height="24" fill="#002549"/><rect x="912" y="1080" width="24" height="24" fill="#002549"/><rect x="936" y="1080" width="24" height="24" fill="#002549"/><rect x="960" y="1080" width="24" height="24" fill="#00254a"/><rect x="984" y="1080" width="24" height="24" fill="#00254b"/><rect x="1008" y="1080" width="24" height="24" fill="#00264c"/><rect x="1032" y="1080" width="24" height="24" fill="#00274e"/><rect x="1056" y="1080" width="24" height="24" fill="#002851"/><rect x="1080" y="1080" width="24" height="24" fill="#002a55"/><rect x="1104" y="1080" width="24" height="24" fill="#002c58"/><rect x="1128" y="1080" width="24" height="24" fill="#002e5c"/><rect x="1152" y="1080" width="24" height="24" fill="#002f5f"/><rect x="1176" y="1080" width="24" height="24" fill="#003060"/><rect x="1200" y="1080" width="24" height="24" fill="#003160"/><rect x="1224" y="1080" width="24" height="24" fill="#00305f"/><rect x="1248" y="1080" width="24" height="24" fill="#002f5c"/><rect x="1272" y="1080" width="24" height="24" fill="#002d58"/><rect x="1296" y="1080" width="24" height="24" fill="#002b54"/><rect x="1320" y="1080" width="24" height="24" fill="#002950"/><rect x="1344" y="1080" width="24" height="24" fill="#00274f"/><rect x="1368" y="1080" width="24" height="24" fill="#00274e"/><rect x="1392" y="1080" width="24" height="24" fill="#00264e"/><rect x="1416" y="1080" width="24" height="24" fill="#00264f"/><rect x="1440" y="1080" width="24" height="24" fill="#00264f"/><rect x="1464" y="1080" width="24" height="24" fill="#00264e"/><rect x="1488" y="1080" width="24" height="24" fill="#00254c"/><rect x="1512" y="1080" width="24" height="24" fill="#002349"/><rect x="1536" y="1080" width="24" height="24" fill="#002246"/><rect x="1560" y="1080" width="24" height="24" fill="#002043"/><rect x="1584" y="1080" width="24" height="24" fill="#001f42"/><rect x="1608" y="1080" width="24" height="24" fill="#001f42"/><rect x="1632" y="1080" width="24" height="24" fill="#001f44"/><rect x="1656" y="1080" width="24" height="24" fill="#002047"/><rect x="1680" y="1080" width="24" height="24" fill="#00224a"/><rect x="1704" y="1080" width="24" height="24" fill="#00234e"/><rect x="1728" y="1080" width="24" height="24" fill="#002450"/><rect x="1752" y="1080" width="24" height="24" fill="#002451"/><rect x="1776" y="1080" width="24" height="24" fill="#002551"/><rect x="1800" y="1080" width="24" height="24" fill="#002550"/><rect x="1824" y="1080" width="24" height="24" fill="#00254f"/><rect x="1848" y="1080" width="24" height="24" fill="#00244d"/><rect x="1872" y="1080" width="24" height="24" fill="#00244c"/><rect x="1896" y="1080" width="24" height="24" fill="#00244b"/><rect x="1920" y="1080" width="24" height="24" fill="#00244b"/><rect x="1944" y="1080" width="24" height="24" fill="#00244b"/><rect x="1968" y="1080" width="24" height="24" fill="#00244a"/><rect x="1992" y="1080" width="24" height="24" fill="#00244a"/><rect x="2016" y="1080" width="24" height="24" fill="#002449"/><rect x="2040" y="1080" width="24" height="24" fill="#002348"/><rect x="2064" y="1080" width="24" height="24" fill="#002346"/><rect x="0" y="1104" width="24" height="24" fill="#001e3d"/><rect x="24" y="1104" width="24" height="24" fill="#001d3c"/><rect x="48" y="1104" width="24" height="24" fill="#001c3a"/><rect x="72" y="1104" width="24" height="24" fill="#001b38"/><rect x="96" y="1104" width="24" height="24" fill="#001937"/><rect x="120" y="1104" width="24" height="24" fill="#001835"/><rect x="144" y="1104" width="24" height="24" fill="#001733"/><rect x="168" y="1104" width="24" height="24" fill="#001732"/><rect x="192" y="1104" width="24" height="24" fill="#001731"/><rect x="216" y="1104" width="24" height="24" fill="#001730"/><rect x="240" y="1104" width="24" height="24" fill="#001731"/><rect x="264" y="1104" width="24" height="24" fill="#001831"/><rect x="288" y="1104" width="24" height="24" fill="#001933"/><rect x="312" y="1104" width="24" height="24" fill="#001a34"/><rect x="336" y="1104" width="24" height="24" fill="#001b36"/><rect x="360" y="1104" width="24" height="24" fill="#001c38"/><rect x="384" y="1104" width="24" height="24" fill="#001d3a"/><rect x="408" y="1104" width="24" height="24" fill="#001e3b"/><rect x="432" y="1104" width="24" height="24" fill="#001e3c"/><rect x="456" y="1104" width="24" height="24" fill="#001f3d"/><rect x="480" y="1104" width="24" height="24" fill="#001f3d"/><rect x="504" y="1104" width="24" height="24" fill="#001e3e"/><rect x="528" y="1104" width="24" height="24" fill="#001e3d"/><rect x="552" y="1104" width="24" height="24" fill="#001e3d"/><rect x="576" y="1104" width="24" height="24" fill="#001e3d"/><rect x="600" y="1104" width="24" height="24" fill="#001e3d"/><rect x="624" y="1104" width="24" height="24" fill="#001e3d"/><rect x="648" y="1104" width="24" height="24" fill="#001e3d"/><rect x="672" y="1104" width="24" height="24" fill="#001f3e"/><rect x="696" y="1104" width="24" height="24" fill="#001f3f"/><rect x="720" y="1104" width="24" height="24" fill="#002040"/><rect x="744" y="1104" width="24" height="24" fill="#002141"/><rect x="768" y="1104" width="24" height="24" fill="#002243"/><rect x="792" y="1104" width="24" height="24" fill="#002344"/><rect x="816" y="1104" width="24" height="24" fill="#002345"/><rect x="840" y="1104" width="24" height="24" fill="#002446"/><rect x="864" y="1104" width="24" height="24" fill="#002447"/><rect x="888" y="1104" width="24" height="24" fill="#002448"/><rect x="912" y="1104" width="24" height="24" fill="#002448"/><rect x="936" y="1104" width="24" height="24" fill="#002448"/><rect x="960" y="1104" width="24" height="24" fill="#002448"/><rect x="984" y="1104" width="24" height="24" fill="#002549"/><rect x="1008" y="1104" width="24" height="24" fill="#00254a"/><rect x="1032" y="1104" width="24" height="24" fill="#00264c"/><rect x="1056" y="1104" width="24" height="24" fill="#00274f"/><rect x="1080" y="1104" width="24" height="24" fill="#002852"/><rect x="1104" y="1104" width="24" height="24" fill="#002a55"/><rect x="1128" y="1104" width="24" height="24" fill="#002c58"/><rect x="1152" y="1104" width="24" height="24" fill="#002d5a"/><rect x="1176" y="1104" width="24" height="24" fill="#002e5b"/><rect x="1200" y="1104" width="24" height="24" fill="#002d5b"/><rect x="1224" y="1104" width="24" height="24" fill="#002c58"/><rect x="1248" y="1104" width="24" height="24" fill="#002a54"/><rect x="1272" y="1104" width="24" height="24" fill="#002850"/><rect x="1296" y="1104" width="24" height="24" fill="#00254b"/><rect x="1320" y="1104" width="24" height="24" fill="#002246"/><rect x="1344" y="1104" width="24" height="24" fill="#002042"/><rect x="1368" y="1104" width="24" height="24" fill="#001e40"/><rect x="1392" y="1104" width="24" height="24" fill="#001d3f"/><rect x="1416" y="1104" width="24" height="24" fill="#001d3e"/><rect x="1440" y="1104" width="24" height="24" fill="#001c3e"/><rect x="1464" y="1104" width="24" height="24" fill="#001c3d"/><rect x="1488" y="1104" width="24" height="24" fill="#001b3c"/><rect x="1512" y="1104" width="24" height="24" fill="#001b3b"/><rect x="1536" y="1104" width="24" height="24" fill="#001b3a"/><rect x="1560" y="1104" width="24" height="24" fill="#001b3a"/><rect x="1584" y="1104" width="24" height="24" fill="#001b3a"/><rect x="1608" y="1104" width="24" height="24" fill="#001c3d"/><rect x="1632" y="1104" width="24" height="24" fill="#001d40"/><rect x="1656" y="1104" width="24" height="24" fill="#001f44"/><rect x="1680" y="1104" width="24" height="24" fill="#002149"/><rect x="1704" y="1104" width="24" height="24" fill="#00224c"/><rect x="1728" y="1104" width="24" height="24" fill="#00234f"/><rect x="1752" y="1104" width="24" height="24" fill="#002451"/><rect x="1776" y="1104" width="24" height="24" fill="#002551"/><rect x="1800" y="1104" width="24" height="24" fill="#002550"/><rect x="1824" y="1104" width="24" height="24" fill="#00254f"/><rect x="1848" y="1104" width="24" height="24" fill="#00254e"/><rect x="1872" y="1104" width="24" height="24" fill="#00254d"/><rect x="1896" y="1104" width="24" height="24" fill="#00244c"/><rect x="1920" y="1104" width="24" height="24" fill="#00244b"/><rect x="1944" y="1104" width="24" height="24" fill="#00244b"/><rect x="1968" y="1104" width="24" height="24" fill="#00244a"/><rect x="1992" y="1104" width="24" height="24" fill="#00244a"/><rect x="2016" y="1104" width="24" height="24" fill="#002449"/><rect x="2040" y="1104" width="24" height="24" fill="#002347"/><rect x="2064" y="1104" width="24" height="24" fill="#002346"/></svg><div style="left:-40px;top:170px;width:420px;height:120px;transform:rotate(4deg);transform-origin:0 0;-webkit-mask-image:linear-gradient(90deg,transparent 20%,#000 75%);mask-image:linear-gradient(90deg,transparent 20%,#000 75%);background:linear-gradient(180deg,rgba(20,80,150,0) 70%,rgba(40,110,180,0.28) 84%,rgba(12,60,120,0) 92%)"></div><svg style="position:absolute;left:26px;top:9px" width="62" height="68" viewBox="0 0 62 68"><defs><linearGradient id="rbs" x1="0" x2="1"><stop offset="0" stop-color="#b9bec6"/><stop offset="0.55" stop-color="#a7adb6"/><stop offset="0.56" stop-color="#959ca6"/><stop offset="1" stop-color="#8c939e"/></linearGradient></defs><path d="M2 10 L35 21 L58 12 L52 59 L33 66 L9 56 Z" fill="url(#rbs)"/><path d="M2 10 L25 2 L58 12 L35 21 Z" fill="#6f7784" stroke="#e8e8e8" stroke-width="1"/><path d="M8 55 L31 47 L51 57 L33 65 Z" fill="#d0d0d2"/><path d="M9 56 L33 65 L52 59 L52 61 L33 67 L9 58 Z" fill="#c9c2b8"/><g fill="#1e8ae6"><path d="M17 30 L24 28 L28 34 L25 36 L22 31 Z"/><path d="M12 37 L17 35 L20 44 L16 46 Z"/><path d="M20 48 L27 50 L30 45 L25 43 Z"/></g></svg><div class="t" style="left:-24.0px;top:85.96px;width:160px;text-align:center;font-size:16px;line-height:19px;color:#000;transform:scaleX(1.0061);transform-origin:50% 0;">Recycle Bin</div><svg style="position:absolute;left:128px;top:8px" width="80" height="72" viewBox="0 0 80 72"><path d="M4.5 21 A19 19 0 0 1 23 4" fill="none" stroke="#8c8c8c" stroke-width="2"/><path d="M58.5 8.5 A22 22 0 0 1 74.5 14" fill="none" stroke="#8c8c8c" stroke-width="2"/><path d="M34.3 22.7 A16 16 0 1 0 34.3 43.3" fill="none" stroke="#8c8c8c" stroke-width="2"/><circle cx="58" cy="33" r="17.5" fill="none" stroke="#8c8c8c" stroke-width="2"/><path d="M18 25 L34 33 L18 41 Z" fill="#f08a00"/><circle cx="58" cy="33" r="9.7" fill="#e02020"/><circle cx="55" cy="28.5" r="2.5" fill="#fff"/><path d="M24 64 C30 52 42 50 48 57 C54 50 62 56 66 62 C69 66 72 64 71 60 C73 68 62 70 56 64 C52 61 48 60 47 62 C42 60 36 62 24 66 Z" fill="#000"/></svg><div style="left:132px;top:59px;width:20px;height:20px;background:#f4f4f4;border:1px solid #d8d8d8"><svg width="18" height="18" viewBox="0 0 18 18" style="position:absolute;left:0;top:0"><path d="M4 16 C3 11 5 7 10 6 L9 3 L15 3 L15 9 L12.5 7.5 C9 8.5 7.5 11 8 15 Z" fill="#3a6ab8"/></svg></div><div class="t" style="left:87.5px;top:85.96px;width:160px;text-align:center;font-size:16px;line-height:19px;color:#000;transform:scaleX(1.1244);transform-origin:50% 0;">ShowMore</div><svg style="position:absolute;left:256px;top:11px" width="48" height="64" viewBox="0 0 48 64"><defs><linearGradient id="dg25611" x1="0" y1="0" x2="0" y2="1"><stop offset="0" stop-color="#f8f8f8"/><stop offset="1" stop-color="#eeeeee"/></linearGradient></defs><path d="M0 0 H34 L47 13 V63 H0 Z" fill="url(#dg25611)"/><path d="M34 0 V13 H47 Z" fill="#dcdcdc"/><g transform="translate(23.5,33)"><path d="M9.5 -14.5 A17 17 0 1 0 14.5 -9" fill="none" stroke="#0a78d8" stroke-width="3"/><path d="M13 -16 L16.5 -6.5 L8.5 -9 Z" fill="#0a78d8"/><circle r="7" fill="#0a78d8"/><circle r="2.6" fill="#f4f4f4"/></g></svg><div class="t" style="left:199.5px;top:85.96px;width:160px;text-align:center;font-size:16px;line-height:19px;color:#000;transform:scaleX(1.0290);transform-origin:50% 0;">Fractalizeer</div><svg style="position:absolute;left:20px;top:169px" width="72" height="72" viewBox="0 0 72 72"><rect x="0" y="0" width="72" height="72" fill="#000"/><rect x="1" y="1" width="70" height="70" fill="none" stroke="#c8c8c8" stroke-width="2"/><rect x="18" y="0" width="2" height="72" fill="#9a9a9a"/><rect x="36" y="0" width="2" height="72" fill="#9a9a9a"/><rect x="53" y="0" width="2" height="72" fill="#9a9a9a"/><rect x="0" y="17" width="72" height="2" fill="#9a9a9a"/><rect x="0" y="36" width="72" height="2" fill="#9a9a9a"/><rect x="0" y="52" width="72" height="2" fill="#9a9a9a"/><path d="M2 34 C8 22 13 14 19 14 C27 14 31 28 37 36 C43 46 48 56 54 56 C60 56 65 46 70 38" fill="none" stroke="#18e0f0" stroke-width="2.4"/></svg><div style="left:20px;top:221px;width:20px;height:20px;background:#f4f4f4;border:1px solid #d8d8d8"><svg width="18" height="18" viewBox="0 0 18 18" style="position:absolute;left:0;top:0"><path d="M4 16 C3 11 5 7 10 6 L9 3 L15 3 L15 9 L12.5 7.5 C9 8.5 7.5 11 8 15 Z" fill="#3a6ab8"/></svg></div><div class="t" style="left:-24.5px;top:247.96px;width:160px;text-align:center;font-size:16px;line-height:19px;color:#000;transform:scaleX(0.9868);transform-origin:50% 0;">TrueRTA</div><svg style="position:absolute;left:256px;top:173px" width="48" height="64" viewBox="0 0 48 64"><defs><linearGradient id="dg256173" x1="0" y1="0" x2="0" y2="1"><stop offset="0" stop-color="#f8f8f8"/><stop offset="1" stop-color="#eeeeee"/></linearGradient></defs><path d="M0 0 H34 L47 13 V63 H0 Z" fill="url(#dg256173)"/><path d="M34 0 V13 H47 Z" fill="#dcdcdc"/><g transform="translate(23.5,33)"><path d="M9.5 -14.5 A17 17 0 1 0 14.5 -9" fill="none" stroke="#0a78d8" stroke-width="3"/><path d="M13 -16 L16.5 -6.5 L8.5 -9 Z" fill="#0a78d8"/><circle r="7" fill="#0a78d8"/><circle r="2.6" fill="#f4f4f4"/></g></svg><div class="t" style="left:228px;top:247.96px;font-size:16px;line-height:19px;color:#000;transform:scaleX(1.0640);transform-origin:0 0;">10-11ksweep</div><svg style="position:absolute;left:22px;top:334px" width="66" height="66" viewBox="-33 -33 66 66"><path d="M0 0 L-28.6 -16.5 A33 33 0 0 1 28.6 -16.5 Z" fill="#db4437"/><path d="M0 0 L28.6 -16.5 A33 33 0 0 1 0 33 Z" fill="#fcc934"/><path d="M0 0 L0 33 A33 33 0 0 1 -28.6 -16.5 Z" fill="#1fa463"/><circle r="14.5" fill="#fff"/><circle r="11.5" fill="#4688f1"/></svg><div style="left:20px;top:383px;width:20px;height:20px;background:#f4f4f4;border:1px solid #d8d8d8"><svg width="18" height="18" viewBox="0 0 18 18" style="position:absolute;left:0;top:0"><path d="M4 16 C3 11 5 7 10 6 L9 3 L15 3 L15 9 L12.5 7.5 C9 8.5 7.5 11 8 15 Z" fill="#3a6ab8"/></svg></div><div class="t" style="left:-25.5px;top:409.96px;width:160px;text-align:center;font-size:16px;line-height:19px;color:#000;transform:scaleX(1.1242);transform-origin:50% 0;">Google</div><div class="t" style="left:-25.0px;top:434.96px;width:160px;text-align:center;font-size:16px;line-height:19px;color:#000;transform:scaleX(1.1071);transform-origin:50% 0;">Chrome</div><svg style="position:absolute;left:256px;top:335px" width="48" height="64" viewBox="0 0 48 64"><defs><linearGradient id="dg256335" x1="0" y1="0" x2="0" y2="1"><stop offset="0" stop-color="#f8f8f8"/><stop offset="1" stop-color="#eeeeee"/></linearGradient></defs><path d="M0 0 H34 L47 13 V63 H0 Z" fill="url(#dg256335)"/><path d="M34 0 V13 H47 Z" fill="#dcdcdc"/><g transform="translate(23.5,33)"><path d="M9.5 -14.5 A17 17 0 1 0 14.5 -9" fill="none" stroke="#0a78d8" stroke-width="3"/><path d="M13 -16 L16.5 -6.5 L8.5 -9 Z" fill="#0a78d8"/><circle r="7" fill="#0a78d8"/><circle r="2.6" fill="#f4f4f4"/></g></svg><div class="t" style="left:229px;top:409.96px;font-size:16px;line-height:19px;color:#000;transform:scaleX(1.0803);transform-origin:0 0;">9-10k sweep</div><svg style="position:absolute;left:20px;top:493px" width="73" height="73" viewBox="0 0 73 73"><defs><radialGradient id="idg" cx="0.5" cy="0.35" r="0.7"><stop offset="0" stop-color="#d8d8d8"/><stop offset="0.6" stop-color="#b4b4b4"/><stop offset="1" stop-color="#8a8a8a"/></radialGradient></defs><rect x="1" y="1" width="71" height="71" rx="9" fill="url(#idg)" stroke="#000" stroke-width="2"/><circle cx="16.5" cy="21" r="4.5" fill="#2a2a2a"/><rect x="12.5" y="28" width="8" height="24" fill="#111"/><path d="M24 17 H42 C58 17 66 25 66 35 C66 46 58 55 42 55 H24 Z M31 24 V48 H42 C53 48 58 43 58 35 C58 28 53 24 42 24 Z" fill="#111" fill-rule="evenodd"/></svg><div style="left:20px;top:546px;width:20px;height:20px;background:#f4f4f4;border:1px solid #d8d8d8"><svg width="18" height="18" viewBox="0 0 18 18" style="position:absolute;left:0;top:0"><path d="M4 16 C3 11 5 7 10 6 L9 3 L15 3 L15 9 L12.5 7.5 C9 8.5 7.5 11 8 15 Z" fill="#3a6ab8"/></svg></div><div class="t" style="left:-25.0px;top:572.96px;width:160px;text-align:center;font-size:16px;line-height:19px;color:#000;transform:scaleX(1.0589);transform-origin:50% 0;">iD</div><svg style="position:absolute;left:20px;top:655px" width="72" height="72" viewBox="0 0 72 72"><rect x="0" y="0" width="72" height="72" rx="8" fill="#fff"/><path d="M13.7 22.5 L24.7 15.2 L35.7 22.5 L24.7 29.8 Z" fill="#0061fe"/><path d="M36.4 22.5 L47.4 15.2 L58.4 22.5 L47.4 29.8 Z" fill="#0061fe"/><path d="M13.7 39 L24.7 31.7 L35.7 39 L24.7 46.3 Z" fill="#0061fe"/><path d="M36.4 39 L47.4 31.7 L58.4 39 L47.4 46.3 Z" fill="#0061fe"/><path d="M25 49.6 L36 42.300000000000004 L47 49.6 L36 56.9 Z" fill="#0061fe"/></svg><div style="left:20px;top:707px;width:20px;height:20px;background:#f4f4f4;border:1px solid #d8d8d8"><svg width="18" height="18" viewBox="0 0 18 18" style="position:absolute;left:0;top:0"><path d="M4 16 C3 11 5 7 10 6 L9 3 L15 3 L15 9 L12.5 7.5 C9 8.5 7.5 11 8 15 Z" fill="#3a6ab8"/></svg></div><div class="t" style="left:-24.5px;top:734.96px;width:160px;text-align:center;font-size:16px;line-height:19px;color:#000;transform:scaleX(1.1573);transform-origin:50% 0;">Dropbox</div><svg style="position:absolute;left:144px;top:660px" width="48" height="64" viewBox="0 0 48 64"><defs><linearGradient id="dg144660" x1="0" y1="0" x2="0" y2="1"><stop offset="0" stop-color="#f8f8f8"/><stop offset="1" stop-color="#eeeeee"/></linearGradient></defs><path d="M0 0 H34 L47 13 V63 H0 Z" fill="url(#dg144660)"/><path d="M34 0 V13 H47 Z" fill="#dcdcdc"/><rect x="8" y="19" width="22" height="25" fill="#222"/><rect x="11" y="21" width="16" height="10" fill="#2b6fd0"/><rect x="11" y="32" width="16" height="10" fill="#2b8ad8"/><rect x="12" y="26" width="4" height="5" fill="#d02020"/><circle cx="21" cy="26" r="3" fill="#c83020"/><path d="M32 17 C34 24 42 26 40 36" fill="none" stroke="#3aa0e8" stroke-width="3"/><rect x="30" y="17" width="3" height="25" fill="#3aa0e8"/><ellipse cx="26" cy="44" rx="6.5" ry="5" fill="#3aa0e8"/></svg><div class="t" style="left:88.0px;top:734.96px;width:160px;text-align:center;font-size:16px;line-height:19px;color:#000;transform:scaleX(1.0425);transform-origin:50% 0;">Sweep</div><div class="t" style="left:88.0px;top:759.96px;width:160px;text-align:center;font-size:16px;line-height:19px;color:#000;transform:scaleX(1.0389);transform-origin:50% 0;">File32b ...</div><svg style="position:absolute;left:32px;top:821px" width="48" height="64" viewBox="0 0 48 64"><defs><linearGradient id="dg32821" x1="0" y1="0" x2="0" y2="1"><stop offset="0" stop-color="#f8f8f8"/><stop offset="1" stop-color="#eeeeee"/></linearGradient></defs><path d="M0 0 H34 L47 13 V63 H0 Z" fill="url(#dg32821)"/><path d="M34 0 V13 H47 Z" fill="#dcdcdc"/><g transform="translate(23.5,33)"><path d="M9.5 -14.5 A17 17 0 1 0 14.5 -9" fill="none" stroke="#0a78d8" stroke-width="3"/><path d="M13 -16 L16.5 -6.5 L8.5 -9 Z" fill="#0a78d8"/><circle r="7" fill="#0a78d8"/><circle r="2.6" fill="#f4f4f4"/></g></svg><div class="t" style="left:-24.5px;top:895.96px;width:160px;text-align:center;font-size:16px;line-height:19px;color:#000;transform:scaleX(1.0540);transform-origin:50% 0;">Untitled_1...</div><div class="t" style="left:-24.0px;top:920.96px;width:160px;text-align:center;font-size:16px;line-height:19px;color:#000;transform:scaleX(1.0888);transform-origin:50% 0;">11k sweep</div><div style="left:327px;top:24px;width:1415px;height:900px;background:#000;border:1px solid #fff"></div><div style="left:339px;top:71px;width:1391px;height:842px;background:#fff"></div><svg style="left:351px;top:35px" width="24" height="24" viewBox="0 0 24 24"><rect x="0.75" y="0.75" width="22.5" height="22.5" fill="none" stroke="#808080" stroke-width="1.5"/><rect x="11.25" y="0" width="1.5" height="24" fill="#808080"/><rect x="0" y="11.25" width="24" height="1.5" fill="#808080"/><path d="M1.5 12 L7 6 L12.5 12 L17.5 17 L22.5 12" fill="none" stroke="#00ffff" stroke-width="2.2"/></svg><div class="t" style="left:381px;top:37.76px;font-size:18px;line-height:22px;color:#fff;transform:scaleX(0.9549);transform-origin:0 0;">Untitled Project - TrueRTA</div><div style="left:1520px;top:26px;width:210px;height:43px;background:#fff"></div><div style="left:1589px;top:26px;width:2px;height:43px;background:#000"></div><div style="left:1659px;top:26px;width:2px;height:43px;background:#000"></div><div style="left:1520px;top:69px;width:210px;height:2px;background:#000"></div><div style="left:1548px;top:50px;width:15px;height:3px;background:#000"></div><div style="left:1616px;top:41px;width:16px;height:12px;border:3px solid #000"></div><svg style="left:1688px;top:40px" width="15" height="14" viewBox="0 0 15 14"><path d="M1.5 1.5 L13.5 12.5 M13.5 1.5 L1.5 12.5" stroke="#000" stroke-width="2.6"/></svg><div class="t" style="left:349px;top:74.76px;font-size:18px;line-height:22px;color:#111;transform:scaleX(0.9995);transform-origin:0 0;">File</div><div class="t" style="left:397px;top:74.76px;font-size:18px;line-height:22px;color:#111;transform:scaleX(0.9990);transform-origin:0 0;">Edit</div><div class="t" style="left:448px;top:74.76px;font-size:18px;line-height:22px;color:#111;transform:scaleX(1.0077);transform-origin:0 0;">View</div><div class="t" style="left:507px;top:74.76px;font-size:18px;line-height:22px;color:#111;transform:scaleX(0.9747);transform-origin:0 0;">Generator</div><div class="t" style="left:605px;top:74.76px;font-size:18px;line-height:22px;color:#111;transform:scaleX(1.0660);transform-origin:0 0;">Audio I/O</div><div class="t" style="left:705px;top:74.76px;font-size:18px;line-height:22px;color:#111;transform:scaleX(0.9995);transform-origin:0 0;">Oscilloscope</div><div class="t" style="left:826px;top:74.76px;font-size:18px;line-height:22px;color:#111;transform:scaleX(0.9929);transform-origin:0 0;">Spectrum Analyzer</div><div class="t" style="left:996px;top:74.76px;font-size:18px;line-height:22px;color:#111;transform:scaleX(1.0281);transform-origin:0 0;">Metering</div><div class="t" style="left:1089px;top:74.76px;font-size:18px;line-height:22px;color:#111;transform:scaleX(1.0170);transform-origin:0 0;">Utilities</div><div class="t" style="left:1168px;top:74.76px;font-size:18px;line-height:22px;color:#111;transform:scaleX(1.0262);transform-origin:0 0;">Help</div><div style="left:339px;top:101px;width:1391px;height:1px;background:#a0a0a0"></div><div style="left:339px;top:102px;width:1391px;height:1px;background:#e8e8e8"></div><div style="left:1189px;top:103px;width:2px;height:44px;background:linear-gradient(90deg,#a0a0a0 50%,#e0e0e0 50%)"></div><div style="left:339px;top:146px;width:852px;height:2px;background:linear-gradient(#a0a0a0 50%,#e8e8e8 50%)"></div><div style="left:1095px;top:148px;width:2px;height:44px;background:linear-gradient(90deg,#a0a0a0 50%,#e0e0e0 50%)"></div><div style="left:339px;top:191px;width:1391px;height:2px;background:#999"></div><div style="left:348px;top:108px;width:35px;height:34px;background-color:#f2f2f2;background-image:conic-gradient(#d2d2d2 25%,transparent 0 50%,#d2d2d2 0 75%,transparent 0);background-size:3px 3px;box-shadow:inset 2px 2px 0 #000,inset 3px 3px 0 #808080,inset -2px -2px 0 #c0c0c0"></div><div style="left:383px;top:108px;width:34px;height:34px;background:#fff;box-shadow:inset -2px -2px 0 #000,inset -3px -3px 0 #808080,inset 2px 2px 0 #c0c0c0"></div><div style="left:429px;top:108px;width:35px;height:34px;background-color:#f2f2f2;background-image:conic-gradient(#d2d2d2 25%,transparent 0 50%,#d2d2d2 0 75%,transparent 0);background-size:3px 3px;box-shadow:inset 2px 2px 0 #000,inset 3px 3px 0 #808080,inset -2px -2px 0 #c0c0c0"></div><div style="left:464px;top:108px;width:34px;height:34px;background:#fff;box-shadow:inset -2px -2px 0 #000,inset -3px -3px 0 #808080,inset 2px 2px 0 #c0c0c0"></div><div style="left:510px;top:108px;width:35px;height:34px;background-color:#f2f2f2;background-image:conic-gradient(#d2d2d2 25%,transparent 0 50%,#d2d2d2 0 75%,transparent 0);background-size:3px 3px;box-shadow:inset 2px 2px 0 #000,inset 3px 3px 0 #808080,inset -2px -2px 0 #c0c0c0"></div><div style="left:545px;top:108px;width:34px;height:34px;background:#fff;box-shadow:inset -2px -2px 0 #000,inset -3px -3px 0 #808080,inset 2px 2px 0 #c0c0c0"></div><div style="left:579px;top:108px;width:35px;height:34px;background:#fff;box-shadow:inset -2px -2px 0 #000,inset -3px -3px 0 #808080,inset 2px 2px 0 #c0c0c0"></div><div style="left:614px;top:108px;width:34px;height:34px;background:#fff;box-shadow:inset -2px -2px 0 #000,inset -3px -3px 0 #808080,inset 2px 2px 0 #c0c0c0"></div><div style="left:648px;top:108px;width:35px;height:34px;background:#fff;box-shadow:inset -2px -2px 0 #000,inset -3px -3px 0 #808080,inset 2px 2px 0 #c0c0c0"></div><div style="left:695px;top:108px;width:34px;height:34px;background:#fff;box-shadow:inset -2px -2px 0 #000,inset -3px -3px 0 #808080,inset 2px 2px 0 #c0c0c0"></div><div style="left:741px;top:108px;width:34px;height:34px;background:#fff;box-shadow:inset -2px -2px 0 #000,inset -3px -3px 0 #808080,inset 2px 2px 0 #c0c0c0"></div><div style="left:775px;top:108px;width:35px;height:34px;background:#fff;box-shadow:inset -2px -2px 0 #000,inset -3px -3px 0 #808080,inset 2px 2px 0 #c0c0c0"></div><div style="left:810px;top:108px;width:34px;height:34px;background:#fff;box-shadow:inset -2px -2px 0 #000,inset -3px -3px 0 #808080,inset 2px 2px 0 #c0c0c0"></div><div style="left:844px;top:108px;width:35px;height:34px;background:#fff;box-shadow:inset -2px -2px 0 #000,inset -3px -3px 0 #808080,inset 2px 2px 0 #c0c0c0"></div><div style="left:879px;top:108px;width:34px;height:34px;background:#fff;box-shadow:inset -2px -2px 0 #000,inset -3px -3px 0 #808080,inset 2px 2px 0 #c0c0c0"></div><div style="left:913px;top:108px;width:35px;height:34px;background:#fff;box-shadow:inset -2px -2px 0 #000,inset -3px -3px 0 #808080,inset 2px 2px 0 #c0c0c0"></div><div style="left:961px;top:108px;width:34px;height:34px;background:#fff;box-shadow:inset -2px -2px 0 #000,inset -3px -3px 0 #808080,inset 2px 2px 0 #c0c0c0"></div><div style="left:995px;top:108px;width:35px;height:34px;background:#fff;box-shadow:inset -2px -2px 0 #000,inset -3px -3px 0 #808080,inset 2px 2px 0 #c0c0c0"></div><div style="left:1030px;top:108px;width:34px;height:34px;background:#fff;box-shadow:inset -2px -2px 0 #000,inset -3px -3px 0 #808080,inset 2px 2px 0 #c0c0c0"></div><div style="left:1064px;top:108px;width:35px;height:34px;background:#fff;box-shadow:inset -2px -2px 0 #000,inset -3px -3px 0 #808080,inset 2px 2px 0 #c0c0c0"></div><div style="left:1111px;top:108px;width:34px;height:34px;background:#fff;box-shadow:inset -2px -2px 0 #000,inset -3px -3px 0 #808080,inset 2px 2px 0 #c0c0c0"></div><div style="left:1145px;top:108px;width:35px;height:34px;background:#fff;box-shadow:inset -2px -2px 0 #000,inset -3px -3px 0 #808080,inset 2px 2px 0 #c0c0c0"></div><div style="left:348px;top:154px;width:35px;height:33px;background:#fff;box-shadow:inset -2px -2px 0 #000,inset -3px -3px 0 #808080,inset 2px 2px 0 #c0c0c0"></div><div style="left:395px;top:154px;width:34px;height:33px;background:#fff;box-shadow:inset -2px -2px 0 #000,inset -3px -3px 0 #808080,inset 2px 2px 0 #c0c0c0"></div><div style="left:429px;top:154px;width:34px;height:33px;background:#fff;box-shadow:inset -2px -2px 0 #000,inset -3px -3px 0 #808080,inset 2px 2px 0 #c0c0c0"></div><div style="left:463px;top:154px;width:35px;height:33px;background:#fff;box-shadow:inset -2px -2px 0 #000,inset -3px -3px 0 #808080,inset 2px 2px 0 #c0c0c0"></div><div style="left:498px;top:154px;width:34px;height:33px;background:#fff;box-shadow:inset -2px -2px 0 #000,inset -3px -3px 0 #808080,inset 2px 2px 0 #c0c0c0"></div><div style="left:532px;top:154px;width:35px;height:33px;background:#fff;box-shadow:inset -2px -2px 0 #000,inset -3px -3px 0 #808080,inset 2px 2px 0 #c0c0c0"></div><div style="left:567px;top:154px;width:34px;height:33px;background:#fff;box-shadow:inset -2px -2px 0 #000,inset -3px -3px 0 #808080,inset 2px 2px 0 #c0c0c0"></div><div style="left:601px;top:154px;width:35px;height:33px;background:#fff;box-shadow:inset -2px -2px 0 #000,inset -3px -3px 0 #808080,inset 2px 2px 0 #c0c0c0"></div><div style="left:636px;top:154px;width:34px;height:33px;background:#fff;box-shadow:inset -2px -2px 0 #000,inset -3px -3px 0 #808080,inset 2px 2px 0 #c0c0c0"></div><div style="left:670px;top:154px;width:35px;height:33px;background:#fff;box-shadow:inset -2px -2px 0 #000,inset -3px -3px 0 #808080,inset 2px 2px 0 #c0c0c0"></div><div style="left:705px;top:154px;width:34px;height:33px;background:#fff;box-shadow:inset -2px -2px 0 #000,inset -3px -3px 0 #808080,inset 2px 2px 0 #c0c0c0"></div><div style="left:739px;top:154px;width:34px;height:33px;background:#fff;box-shadow:inset -2px -2px 0 #000,inset -3px -3px 0 #808080,inset 2px 2px 0 #c0c0c0"></div><div style="left:773px;top:154px;width:35px;height:33px;background:#fff;box-shadow:inset -2px -2px 0 #000,inset -3px -3px 0 #808080,inset 2px 2px 0 #c0c0c0"></div><div style="left:808px;top:154px;width:34px;height:33px;background:#fff;box-shadow:inset -2px -2px 0 #000,inset -3px -3px 0 #808080,inset 2px 2px 0 #c0c0c0"></div><div style="left:842px;top:154px;width:35px;height:33px;background:#fff;box-shadow:inset -2px -2px 0 #000,inset -3px -3px 0 #808080,inset 2px 2px 0 #c0c0c0"></div><div style="left:877px;top:154px;width:34px;height:33px;background:#fff;box-shadow:inset -2px -2px 0 #000,inset -3px -3px 0 #808080,inset 2px 2px 0 #c0c0c0"></div><div style="left:911px;top:154px;width:35px;height:33px;background:#fff;box-shadow:inset -2px -2px 0 #000,inset -3px -3px 0 #808080,inset 2px 2px 0 #c0c0c0"></div><div style="left:946px;top:154px;width:34px;height:33px;background:#fff;box-shadow:inset -2px -2px 0 #000,inset -3px -3px 0 #808080,inset 2px 2px 0 #c0c0c0"></div><div style="left:980px;top:154px;width:35px;height:33px;background:#fff;box-shadow:inset -2px -2px 0 #000,inset -3px -3px 0 #808080,inset 2px 2px 0 #c0c0c0"></div><div style="left:1015px;top:154px;width:34px;height:33px;background:#fff;box-shadow:inset -2px -2px 0 #000,inset -3px -3px 0 #808080,inset 2px 2px 0 #c0c0c0"></div><div style="left:1049px;top:154px;width:35px;height:33px;background:#fff;box-shadow:inset -2px -2px 0 #000,inset -3px -3px 0 #808080,inset 2px 2px 0 #c0c0c0"></div><svg style="left:0;top:0" width="1920" height="200" viewBox="0 0 1920 200"><path d="M354 125.5 C356 121 358 117.6 360 117.6 C363 117.6 366 125 369 129.5 C370.5 132 371 133.4 372 133.4 C374 133.4 376 129 377.5 125.5" fill="none" stroke="#ff1818" stroke-width="1.7" stroke-dasharray="1.7 0.6"/><rect x="387" y="125" width="3.05" height="11" fill="#0000ff"/><rect x="390" y="120" width="3.05" height="16" fill="#0000ff"/><rect x="393" y="114" width="3.05" height="22" fill="#0000ff"/><rect x="396" y="119" width="3.05" height="17" fill="#0000ff"/><rect x="399" y="122" width="3.05" height="14" fill="#0000ff"/><rect x="402" y="117" width="3.05" height="19" fill="#0000ff"/><rect x="405" y="125" width="3.05" height="11" fill="#0000ff"/><rect x="408" y="129" width="3.05" height="7" fill="#0000ff"/><polygon points="459.25,130.33 452.43,137.15 442.77,137.15 435.95,130.33 435.95,120.67 442.77,113.85 452.43,113.85 459.25,120.67" fill="#ff0000"/><text x="447.8" y="131.2" text-anchor="middle" font-family="Liberation Sans" font-size="13" font-weight="bold" fill="#ffffff" textLength="21.5" lengthAdjust="spacingAndGlyphs">STOP</text><polygon points="492.10,129.20 485.30,136.00 475.70,136.00 468.90,129.20 468.90,119.60 475.70,112.80 485.30,112.80 492.10,119.60" fill="#00ff00"/><text x="480.7" y="129.3" text-anchor="middle" font-family="Liberation Sans" font-size="13.5" font-weight="bold" fill="#000" textLength="16.5" lengthAdjust="spacingAndGlyphs">GO</text><text x="529.7" y="125.2" text-anchor="middle" font-family="Liberation Sans" font-size="12.5" font-weight="bold" fill="#0000b0" textLength="6.5" lengthAdjust="spacingAndGlyphs">L</text><text x="529.8" y="136.8" text-anchor="middle" font-family="Liberation Sans" font-size="12.5" font-weight="bold" fill="#000" textLength="13" lengthAdjust="spacingAndGlyphs">IN</text><text x="562.5" y="123.8" text-anchor="middle" font-family="Liberation Sans" font-size="12.5" font-weight="bold" fill="#b00000" textLength="7.5" lengthAdjust="spacingAndGlyphs">R</text><text x="562.5" y="135.7" text-anchor="middle" font-family="Liberation Sans" font-size="12.5" font-weight="bold" fill="#000" textLength="13" lengthAdjust="spacingAndGlyphs">IN</text><text x="589.4" y="123.2" text-anchor="middle" font-family="Liberation Sans" font-size="12.5" font-weight="bold" fill="#0000b0" textLength="6.5" lengthAdjust="spacingAndGlyphs">L</text><text x="604.3" y="123.2" text-anchor="middle" font-family="Liberation Sans" font-size="12.5" font-weight="bold" fill="#b00000" textLength="7" lengthAdjust="spacingAndGlyphs">R</text><text x="597.2" y="135.2" text-anchor="middle" font-family="Liberation Sans" font-size="12.5" font-weight="bold" fill="#000" textLength="13" lengthAdjust="spacingAndGlyphs">IN</text><text x="623.6" y="123.2" text-anchor="middle" font-family="Liberation Sans" font-size="12.5" font-weight="bold" fill="#0000b0" textLength="6.5" lengthAdjust="spacingAndGlyphs">L</text><text x="631.6" y="123.2" text-anchor="middle" font-family="Liberation Sans" font-size="12.5" font-weight="bold" fill="#000" textLength="7.5" lengthAdjust="spacingAndGlyphs">+</text><text x="639.2" y="123.2" text-anchor="middle" font-family="Liberation Sans" font-size="12.5" font-weight="bold" fill="#b00000" textLength="7" lengthAdjust="spacingAndGlyphs">R</text><text x="631.5" y="135.2" text-anchor="middle" font-family="Liberation Sans" font-size="12.5" font-weight="bold" fill="#000" textLength="13" lengthAdjust="spacingAndGlyphs">IN</text><text x="658.2" y="123.2" text-anchor="middle" font-family="Liberation Sans" font-size="12.5" font-weight="bold" fill="#0000b0" textLength="6.5" lengthAdjust="spacingAndGlyphs">L</text><rect x="662.5" y="117.8" width="7" height="1.8" fill="#000"/><text x="673.6" y="123.2" text-anchor="middle" font-family="Liberation Sans" font-size="12.5" font-weight="bold" fill="#b00000" textLength="7" lengthAdjust="spacingAndGlyphs">R</text><text x="666.2" y="135.2" text-anchor="middle" font-family="Liberation Sans" font-size="12.5" font-weight="bold" fill="#000" textLength="13" lengthAdjust="spacingAndGlyphs">IN</text><rect x="702.2" y="113" width="1.3" height="23" fill="#8a8a8a"/><rect x="700.5" y="114.5" width="23" height="1.3" fill="#8a8a8a"/><rect x="707.1" y="113" width="1.3" height="23" fill="#8a8a8a"/><rect x="700.5" y="119.4" width="23" height="1.3" fill="#8a8a8a"/><rect x="712.0" y="113" width="1.3" height="23" fill="#8a8a8a"/><rect x="700.5" y="124.3" width="23" height="1.3" fill="#8a8a8a"/><rect x="716.9" y="113" width="1.3" height="23" fill="#8a8a8a"/><rect x="700.5" y="129.2" width="23" height="1.3" fill="#8a8a8a"/><rect x="721.8" y="113" width="1.3" height="23" fill="#8a8a8a"/><rect x="700.5" y="134.1" width="23" height="1.3" fill="#8a8a8a"/><text x="759.4" y="130.3" text-anchor="middle" font-family="Liberation Sans" font-size="12.5" font-weight="bold" fill="#8a8a8a" textLength="21.5" lengthAdjust="spacingAndGlyphs">REL</text><text x="793" y="122.5" text-anchor="middle" font-family="Liberation Sans" font-size="8.5" font-weight="bold" fill="#8a8a8a" textLength="26" lengthAdjust="spacingAndGlyphs">PEAK</text><text x="793" y="131.5" text-anchor="middle" font-family="Liberation Sans" font-size="8.5" font-weight="bold" fill="#8a8a8a" textLength="26" lengthAdjust="spacingAndGlyphs">HOLD</text><path d="M815 135.6 V121.2 H822.5 V116.2 H827 V126.9 H833 V124.4 H838.8 V135.6 Z" fill="#8a8a8a"/><text x="861.8" y="122.6" text-anchor="middle" font-family="Liberation Sans" font-size="10" font-weight="bold" fill="#8a8a8a" textLength="22.5" lengthAdjust="spacingAndGlyphs">MIC</text><text x="862.1" y="134.5" text-anchor="middle" font-family="Liberation Sans" font-size="10" font-weight="bold" fill="#8a8a8a" textLength="23" lengthAdjust="spacingAndGlyphs">CAL</text><text x="897" y="130.6" text-anchor="middle" font-family="Liberation Sans" font-size="12.5" font-weight="bold" fill="#8a8a8a" textLength="22" lengthAdjust="spacingAndGlyphs">SPL</text><path d="M918.5 122.5 L927 115.3 H932 L943 124.5" fill="none" stroke="#8a8a8a" stroke-width="1.4"/><path d="M926.2 122.2 L934 130.4 M934 122.2 L926.2 130.4" stroke="#8a8a8a" stroke-width="1.4"/><text x="977.5" y="129.5" text-anchor="middle" font-family="Liberation Sans" font-size="15" font-weight="normal" fill="#000" textLength="20" lengthAdjust="spacingAndGlyphs">mV</text><text x="1011.3" y="129.5" text-anchor="middle" font-family="Liberation Sans" font-size="15" font-weight="normal" fill="#000" textLength="15" lengthAdjust="spacingAndGlyphs">dB</text><text x="1046.3" y="122.6" text-anchor="middle" font-family="Liberation Sans" font-size="11" font-weight="normal" fill="#000" textLength="14" lengthAdjust="spacingAndGlyphs">CF</text><text x="1046" y="133.9" text-anchor="middle" font-family="Liberation Sans" font-size="11" font-weight="normal" fill="#000" textLength="21" lengthAdjust="spacingAndGlyphs">V/V</text><text x="1080.7" y="122.6" text-anchor="middle" font-family="Liberation Sans" font-size="11" font-weight="normal" fill="#000" textLength="14" lengthAdjust="spacingAndGlyphs">CF</text><text x="1081" y="133.9" text-anchor="middle" font-family="Liberation Sans" font-size="11" font-weight="normal" fill="#000" textLength="14" lengthAdjust="spacingAndGlyphs">dB</text><path d="M1121 119.5 C1121 115 1124 113 1127 113 C1131 113 1134 115.5 1134 119 C1134 122 1131.5 123.5 1130 124.5 C1129 125.3 1129 126 1129 127.3 H1125.3 C1125.3 125 1125.5 123.3 1127.3 122 C1128.8 121 1130 120.3 1130 118.8 C1130 117.2 1128.8 116.3 1127.3 116.3 C1125.6 116.3 1124.5 117.5 1124.6 119.5 Z" fill="#ffff00" stroke="#000" stroke-width="1.3"/><circle cx="1127.2" cy="131" r="2.4" fill="#ffff00" stroke="#000" stroke-width="1.3"/><path d="M1149.3 113 V130 L1153.3 126.3 L1156.6 134 L1159.8 132.6 L1156.5 125 H1162 Z" fill="#000"/><path d="M1160 118.5 C1160 115 1163 113 1166 113 C1169.8 113 1172 115.3 1172 118 C1172 120.8 1169.8 122 1168.3 123 C1167.3 123.7 1167 124.5 1167 126 H1163.8 C1163.8 123.7 1164.3 122.3 1165.8 121.2 C1167 120.3 1168 119.6 1168 118.2 C1168 116.8 1167.2 116 1166 116 C1164.6 116 1163.6 117 1163.8 118.6 Z" fill="#00009c"/><rect x="1163.6" y="127.8" width="3.7" height="3.4" fill="#00009c"/><text x="364.7" y="168.2" text-anchor="middle" font-family="Liberation Sans" font-size="13.5" font-weight="bold" fill="#8a8a8a" textLength="25.5" lengthAdjust="spacingAndGlyphs">Mem</text><text x="364.5" y="180.5" text-anchor="middle" font-family="Liberation Sans" font-size="14" font-weight="bold" fill="#8a8a8a" textLength="15" lengthAdjust="spacingAndGlyphs">W</text><text x="411.7" y="168.2" text-anchor="middle" font-family="Liberation Sans" font-size="13.5" font-weight="bold" fill="#8a8a8a" textLength="25.5" lengthAdjust="spacingAndGlyphs">Mem</text><rect x="406" y="169.3" width="13.6" height="12" fill="none" stroke="#8a8a8a" stroke-width="1.8"/><text x="412.8" y="180" text-anchor="middle" font-family="Liberation Sans" font-size="10.5" font-weight="bold" fill="#8a8a8a" textLength="6" lengthAdjust="spacingAndGlyphs">1</text><text x="445.7" y="168.2" text-anchor="middle" font-family="Liberation Sans" font-size="13.5" font-weight="bold" fill="#8a8a8a" textLength="25.5" lengthAdjust="spacingAndGlyphs">Mem</text><rect x="440" y="169.3" width="13.6" height="12" fill="none" stroke="#8a8a8a" stroke-width="1.8"/><text x="446.8" y="180" text-anchor="middle" font-family="Liberation Sans" font-size="10.5" font-weight="bold" fill="#8a8a8a" textLength="6" lengthAdjust="spacingAndGlyphs">2</text><text x="479.7" y="168.2" text-anchor="middle" font-family="Liberation Sans" font-size="13.5" font-weight="bold" fill="#8a8a8a" textLength="25.5" lengthAdjust="spacingAndGlyphs">Mem</text><rect x="474" y="169.3" width="13.6" height="12" fill="none" stroke="#8a8a8a" stroke-width="1.8"/><text x="480.8" y="180" text-anchor="middle" font-family="Liberation Sans" font-size="10.5" font-weight="bold" fill="#8a8a8a" textLength="6" lengthAdjust="spacingAndGlyphs">3</text><text x="514.7" y="168.2" text-anchor="middle" font-family="Liberation Sans" font-size="13.5" font-weight="bold" fill="#8a8a8a" textLength="25.5" lengthAdjust="spacingAndGlyphs">Mem</text><rect x="509" y="169.3" width="13.6" height="12" fill="none" stroke="#8a8a8a" stroke-width="1.8"/><text x="515.8" y="180" text-anchor="middle" font-family="Liberation Sans" font-size="10.5" font-weight="bold" fill="#8a8a8a" textLength="6" lengthAdjust="spacingAndGlyphs">4</text><text x="548.7" y="168.2" text-anchor="middle" font-family="Liberation Sans" font-size="13.5" font-weight="bold" fill="#8a8a8a" textLength="25.5" lengthAdjust="spacingAndGlyphs">Mem</text><rect x="543" y="169.3" width="13.6" height="12" fill="none" stroke="#8a8a8a" stroke-width="1.8"/><text x="549.8" y="180" text-anchor="middle" font-family="Liberation Sans" font-size="10.5" font-weight="bold" fill="#8a8a8a" textLength="6" lengthAdjust="spacingAndGlyphs">5</text><text x="583.7" y="168.2" text-anchor="middle" font-family="Liberation Sans" font-size="13.5" font-weight="bold" fill="#8a8a8a" textLength="25.5" lengthAdjust="spacingAndGlyphs">Mem</text><rect x="578" y="169.3" width="13.6" height="12" fill="none" stroke="#8a8a8a" stroke-width="1.8"/><text x="584.8" y="180" text-anchor="middle" font-family="Liberation Sans" font-size="10.5" font-weight="bold" fill="#8a8a8a" textLength="6" lengthAdjust="spacingAndGlyphs">6</text><text x="617.7" y="168.2" text-anchor="middle" font-family="Liberation Sans" font-size="13.5" font-weight="bold" fill="#8a8a8a" textLength="25.5" lengthAdjust="spacingAndGlyphs">Mem</text><rect x="612" y="169.3" width="13.6" height="12" fill="none" stroke="#8a8a8a" stroke-width="1.8"/><text x="618.8" y="180" text-anchor="middle" font-family="Liberation Sans" font-size="10.5" font-weight="bold" fill="#8a8a8a" textLength="6" lengthAdjust="spacingAndGlyphs">7</text><text x="652.7" y="168.2" text-anchor="middle" font-family="Liberation Sans" font-size="13.5" font-weight="bold" fill="#8a8a8a" textLength="25.5" lengthAdjust="spacingAndGlyphs">Mem</text><rect x="647" y="169.3" width="13.6" height="12" fill="none" stroke="#8a8a8a" stroke-width="1.8"/><text x="653.8" y="180" text-anchor="middle" font-family="Liberation Sans" font-size="10.5" font-weight="bold" fill="#8a8a8a" textLength="6" lengthAdjust="spacingAndGlyphs">8</text><text x="686.7" y="168.2" text-anchor="middle" font-family="Liberation Sans" font-size="13.5" font-weight="bold" fill="#8a8a8a" textLength="25.5" lengthAdjust="spacingAndGlyphs">Mem</text><rect x="681" y="169.3" width="13.6" height="12" fill="none" stroke="#8a8a8a" stroke-width="1.8"/><text x="687.8" y="180" text-anchor="middle" font-family="Liberation Sans" font-size="10.5" font-weight="bold" fill="#8a8a8a" textLength="6" lengthAdjust="spacingAndGlyphs">9</text><text x="721.7" y="168.2" text-anchor="middle" font-family="Liberation Sans" font-size="13.5" font-weight="bold" fill="#8a8a8a" textLength="25.5" lengthAdjust="spacingAndGlyphs">Mem</text><rect x="716" y="169.3" width="13.6" height="12" fill="none" stroke="#8a8a8a" stroke-width="1.8"/><text x="722.8" y="180" text-anchor="middle" font-family="Liberation Sans" font-size="10.5" font-weight="bold" fill="#8a8a8a" textLength="10.5" lengthAdjust="spacingAndGlyphs">10</text><text x="755.7" y="168.2" text-anchor="middle" font-family="Liberation Sans" font-size="13.5" font-weight="bold" fill="#8a8a8a" textLength="25.5" lengthAdjust="spacingAndGlyphs">Mem</text><rect x="750" y="169.3" width="13.6" height="12" fill="none" stroke="#8a8a8a" stroke-width="1.8"/><text x="756.8" y="180" text-anchor="middle" font-family="Liberation Sans" font-size="10.5" font-weight="bold" fill="#8a8a8a" textLength="10.5" lengthAdjust="spacingAndGlyphs">11</text><text x="789.7" y="168.2" text-anchor="middle" font-family="Liberation Sans" font-size="13.5" font-weight="bold" fill="#8a8a8a" textLength="25.5" lengthAdjust="spacingAndGlyphs">Mem</text><rect x="784" y="169.3" width="13.6" height="12" fill="none" stroke="#8a8a8a" stroke-width="1.8"/><text x="790.8" y="180" text-anchor="middle" font-family="Liberation Sans" font-size="10.5" font-weight="bold" fill="#8a8a8a" textLength="10.5" lengthAdjust="spacingAndGlyphs">12</text><text x="824.7" y="168.2" text-anchor="middle" font-family="Liberation Sans" font-size="13.5" font-weight="bold" fill="#8a8a8a" textLength="25.5" lengthAdjust="spacingAndGlyphs">Mem</text><rect x="819" y="169.3" width="13.6" height="12" fill="none" stroke="#8a8a8a" stroke-width="1.8"/><text x="825.8" y="180" text-anchor="middle" font-family="Liberation Sans" font-size="10.5" font-weight="bold" fill="#8a8a8a" textLength="10.5" lengthAdjust="spacingAndGlyphs">13</text><text x="858.7" y="168.2" text-anchor="middle" font-family="Liberation Sans" font-size="13.5" font-weight="bold" fill="#8a8a8a" textLength="25.5" lengthAdjust="spacingAndGlyphs">Mem</text><rect x="853" y="169.3" width="13.6" height="12" fill="none" stroke="#8a8a8a" stroke-width="1.8"/><text x="859.8" y="180" text-anchor="middle" font-family="Liberation Sans" font-size="10.5" font-weight="bold" fill="#8a8a8a" textLength="10.5" lengthAdjust="spacingAndGlyphs">14</text><text x="893.7" y="168.2" text-anchor="middle" font-family="Liberation Sans" font-size="13.5" font-weight="bold" fill="#8a8a8a" textLength="25.5" lengthAdjust="spacingAndGlyphs">Mem</text><rect x="888" y="169.3" width="13.6" height="12" fill="none" stroke="#8a8a8a" stroke-width="1.8"/><text x="894.8" y="180" text-anchor="middle" font-family="Liberation Sans" font-size="10.5" font-weight="bold" fill="#8a8a8a" textLength="10.5" lengthAdjust="spacingAndGlyphs">15</text><text x="927.7" y="168.2" text-anchor="middle" font-family="Liberation Sans" font-size="13.5" font-weight="bold" fill="#8a8a8a" textLength="25.5" lengthAdjust="spacingAndGlyphs">Mem</text><rect x="922" y="169.3" width="13.6" height="12" fill="none" stroke="#8a8a8a" stroke-width="1.8"/><text x="928.8" y="180" text-anchor="middle" font-family="Liberation Sans" font-size="10.5" font-weight="bold" fill="#8a8a8a" textLength="10.5" lengthAdjust="spacingAndGlyphs">16</text><text x="962.7" y="168.2" text-anchor="middle" font-family="Liberation Sans" font-size="13.5" font-weight="bold" fill="#8a8a8a" textLength="25.5" lengthAdjust="spacingAndGlyphs">Mem</text><rect x="957" y="169.3" width="13.6" height="12" fill="none" stroke="#8a8a8a" stroke-width="1.8"/><text x="963.8" y="180" text-anchor="middle" font-family="Liberation Sans" font-size="10.5" font-weight="bold" fill="#8a8a8a" textLength="10.5" lengthAdjust="spacingAndGlyphs">17</text><text x="996.7" y="168.2" text-anchor="middle" font-family="Liberation Sans" font-size="13.5" font-weight="bold" fill="#8a8a8a" textLength="25.5" lengthAdjust="spacingAndGlyphs">Mem</text><rect x="991" y="169.3" width="13.6" height="12" fill="none" stroke="#8a8a8a" stroke-width="1.8"/><text x="997.8" y="180" text-anchor="middle" font-family="Liberation Sans" font-size="10.5" font-weight="bold" fill="#8a8a8a" textLength="10.5" lengthAdjust="spacingAndGlyphs">18</text><text x="1031.7" y="168.2" text-anchor="middle" font-family="Liberation Sans" font-size="13.5" font-weight="bold" fill="#8a8a8a" textLength="25.5" lengthAdjust="spacingAndGlyphs">Mem</text><rect x="1026" y="169.3" width="13.6" height="12" fill="none" stroke="#8a8a8a" stroke-width="1.8"/><text x="1032.8" y="180" text-anchor="middle" font-family="Liberation Sans" font-size="10.5" font-weight="bold" fill="#8a8a8a" textLength="10.5" lengthAdjust="spacingAndGlyphs">19</text><text x="1065.7" y="168.2" text-anchor="middle" font-family="Liberation Sans" font-size="13.5" font-weight="bold" fill="#8a8a8a" textLength="25.5" lengthAdjust="spacingAndGlyphs">Mem</text><rect x="1060" y="169.3" width="13.6" height="12" fill="none" stroke="#8a8a8a" stroke-width="1.8"/><text x="1066.8" y="180" text-anchor="middle" font-family="Liberation Sans" font-size="10.5" font-weight="bold" fill="#8a8a8a" textLength="10.5" lengthAdjust="spacingAndGlyphs">20</text></svg><div style="left:449px;top:193px;width:1146px;height:691px;background:#c6c6c6"></div><div style="left:449px;top:193px;width:1143px;height:1px;background:#000"></div><div style="left:449px;top:193px;width:1px;height:689px;background:#000"></div><div style="left:452px;top:196px;width:1139px;height:684px;background:#a4a4a4"></div><div style="left:453px;top:197px;width:1138px;height:683px;background:#a0a0a0"></div><div style="left:453px;top:197px;width:1136px;height:681px;background:#dcdcdc"></div><svg style="left:0;top:0" width="1920" height="1080" viewBox="0 0 1920 1080"><defs><clipPath id="pc"><rect x="450" y="195" width="1141" height="684"/></clipPath></defs><g clip-path="url(#pc)"><rect x="563" y="196" width="1" height="682" fill="#c0c0c0"/><rect x="677" y="196" width="1" height="682" fill="#c0c0c0"/><rect x="791" y="196" width="1" height="682" fill="#c0c0c0"/><rect x="905" y="196" width="1" height="682" fill="#c0c0c0"/><rect x="1133" y="196" width="1" height="682" fill="#c0c0c0"/><rect x="1247" y="196" width="1" height="682" fill="#c0c0c0"/><rect x="1361" y="196" width="1" height="682" fill="#c0c0c0"/><rect x="1475" y="196" width="1" height="682" fill="#c0c0c0"/><rect x="452" y="280" width="1137" height="1" fill="#c0c0c0"/><rect x="452" y="366" width="1137" height="1" fill="#c0c0c0"/><rect x="452" y="451" width="1137" height="1" fill="#c0c0c0"/><rect x="452" y="622" width="1137" height="1" fill="#c0c0c0"/><rect x="452" y="708" width="1137" height="1" fill="#c0c0c0"/><rect x="452" y="793" width="1137" height="1" fill="#c0c0c0"/><rect x="452" y="536" width="1137" height="1" fill="#b0b0b0"/><rect x="1019" y="196" width="1" height="682" fill="#a0a0a0"/><rect x="1011" y="194" width="15" height="1" fill="#a8a8a8"/><rect x="1011" y="211" width="15" height="1" fill="#a8a8a8"/><rect x="1011" y="228" width="15" height="1" fill="#a8a8a8"/><rect x="1011" y="245" width="15" height="1" fill="#a8a8a8"/><rect x="1011" y="262" width="15" height="1" fill="#a8a8a8"/><rect x="1011" y="280" width="15" height="1" fill="#a8a8a8"/><rect x="1011" y="297" width="15" height="1" fill="#a8a8a8"/><rect x="1011" y="314" width="15" height="1" fill="#a8a8a8"/><rect x="1011" y="331" width="15" height="1" fill="#a8a8a8"/><rect x="1011" y="348" width="15" height="1" fill="#a8a8a8"/><rect x="1011" y="365" width="15" height="1" fill="#a8a8a8"/><rect x="1011" y="382" width="15" height="1" fill="#a8a8a8"/><rect x="1011" y="399" width="15" height="1" fill="#a8a8a8"/><rect x="1011" y="416" width="15" height="1" fill="#a8a8a8"/><rect x="1011" y="433" width="15" height="1" fill="#a8a8a8"/><rect x="1011" y="450" width="15" height="1" fill="#a8a8a8"/><rect x="1011" y="468" width="15" height="1" fill="#a8a8a8"/><rect x="1011" y="485" width="15" height="1" fill="#a8a8a8"/><rect x="1011" y="502" width="15" height="1" fill="#a8a8a8"/><rect x="1011" y="519" width="15" height="1" fill="#a8a8a8"/><rect x="1011" y="536" width="15" height="1" fill="#a8a8a8"/><rect x="1011" y="553" width="15" height="1" fill="#a8a8a8"/><rect x="1011" y="570" width="15" height="1" fill="#a8a8a8"/><rect x="1011" y="587" width="15" height="1" fill="#a8a8a8"/><rect x="1011" y="604" width="15" height="1" fill="#a8a8a8"/><rect x="1011" y="622" width="15" height="1" fill="#a8a8a8"/><rect x="1011" y="639" width="15" height="1" fill="#a8a8a8"/><rect x="1011" y="656" width="15" height="1" fill="#a8a8a8"/><rect x="1011" y="673" width="15" height="1" fill="#a8a8a8"/><rect x="1011" y="690" width="15" height="1" fill="#a8a8a8"/><rect x="1011" y="707" width="15" height="1" fill="#a8a8a8"/><rect x="1011" y="724" width="15" height="1" fill="#a8a8a8"/><rect x="1011" y="741" width="15" height="1" fill="#a8a8a8"/><rect x="1011" y="758" width="15" height="1" fill="#a8a8a8"/><rect x="1011" y="775" width="15" height="1" fill="#a8a8a8"/><rect x="1011" y="792" width="15" height="1" fill="#a8a8a8"/><rect x="1011" y="810" width="15" height="1" fill="#a8a8a8"/><rect x="1011" y="827" width="15" height="1" fill="#a8a8a8"/><rect x="1011" y="844" width="15" height="1" fill="#a8a8a8"/><rect x="1011" y="861" width="15" height="1" fill="#a8a8a8"/><rect x="1011" y="878" width="15" height="1" fill="#a8a8a8"/><rect x="472" y="532" width="1" height="10" fill="#b0b0b0"/><rect x="495" y="532" width="1" height="10" fill="#b0b0b0"/><rect x="517" y="532" width="1" height="10" fill="#b0b0b0"/><rect x="540" y="532" width="1" height="10" fill="#b0b0b0"/><rect x="586" y="532" width="1" height="10" fill="#b0b0b0"/><rect x="609" y="532" width="1" height="10" fill="#b0b0b0"/><rect x="631" y="532" width="1" height="10" fill="#b0b0b0"/><rect x="654" y="532" width="1" height="10" fill="#b0b0b0"/><rect x="700" y="532" width="1" height="10" fill="#b0b0b0"/><rect x="723" y="532" width="1" height="10" fill="#b0b0b0"/><rect x="745" y="532" width="1" height="10" fill="#b0b0b0"/><rect x="768" y="532" width="1" height="10" fill="#b0b0b0"/><rect x="814" y="532" width="1" height="10" fill="#b0b0b0"/><rect x="837" y="532" width="1" height="10" fill="#b0b0b0"/><rect x="859" y="532" width="1" height="10" fill="#b0b0b0"/><rect x="882" y="532" width="1" height="10" fill="#b0b0b0"/><rect x="928" y="532" width="1" height="10" fill="#b0b0b0"/><rect x="951" y="532" width="1" height="10" fill="#b0b0b0"/><rect x="973" y="532" width="1" height="10" fill="#b0b0b0"/><rect x="996" y="532" width="1" height="10" fill="#b0b0b0"/><rect x="1042" y="532" width="1" height="10" fill="#b0b0b0"/><rect x="1065" y="532" width="1" height="10" fill="#b0b0b0"/><rect x="1087" y="532" width="1" height="10" fill="#b0b0b0"/><rect x="1110" y="532" width="1" height="10" fill="#b0b0b0"/><rect x="1156" y="532" width="1" height="10" fill="#b0b0b0"/><rect x="1179" y="532" width="1" height="10" fill="#b0b0b0"/><rect x="1201" y="532" width="1" height="10" fill="#b0b0b0"/><rect x="1224" y="532" width="1" height="10" fill="#b0b0b0"/><rect x="1270" y="532" width="1" height="10" fill="#b0b0b0"/><rect x="1293" y="532" width="1" height="10" fill="#b0b0b0"/><rect x="1315" y="532" width="1" height="10" fill="#b0b0b0"/><rect x="1338" y="532" width="1" height="10" fill="#b0b0b0"/><rect x="1384" y="532" width="1" height="10" fill="#b0b0b0"/><rect x="1407" y="532" width="1" height="10" fill="#b0b0b0"/><rect x="1429" y="532" width="1" height="10" fill="#b0b0b0"/><rect x="1452" y="532" width="1" height="10" fill="#b0b0b0"/><rect x="1498" y="532" width="1" height="10" fill="#b0b0b0"/><rect x="1521" y="532" width="1" height="10" fill="#b0b0b0"/><rect x="1543" y="532" width="1" height="10" fill="#b0b0b0"/><rect x="1566" y="532" width="1" height="10" fill="#b0b0b0"/><polyline points="280.8,619.0 281.3,540.0 281.5,421.0 282.8,421.0 283.3,425.0 283.8,456.0 284.5,458.0 285.1,480.0 286.3,482.0 288.8,485.0 290.8,480.0 293.3,471.0 296.3,467.0 299.3,464.0 303.3,459.0 308.3,455.0 312.3,452.5 319.3,451.0 335.3,451.0 343.3,454.0 351.3,457.0 358.3,460.5 363.3,463.0 365.8,466.0 367.1,472.0 367.5,483.0 367.9,581.0 368.9,582.0 369.3,635.0 370.3,635.0 370.9,606.0 371.9,606.0 372.5,597.0 375.8,593.0 378.3,597.0 381.3,600.5 384.3,605.0 386.3,611.0 391.3,616.0 397.3,621.0 405.3,625.0 427.3,625.0 433.3,623.0 441.3,620.0 447.3,619.0 450.8,618.0 451.8,619.0 452.3,540.0 452.5,421.0 453.8,421.0 454.3,425.0 454.8,456.0 455.5,458.0 456.1,480.0 457.3,482.0 459.8,485.0 461.8,480.0 464.3,471.0 467.3,467.0 470.3,464.0 474.3,459.0 479.3,455.0 483.3,452.5 490.3,451.0 506.3,451.0 514.3,454.0 522.3,457.0 529.3,460.5 534.3,463.0 536.8,466.0 538.1,472.0 538.5,483.0 538.9,581.0 539.9,582.0 540.3,635.0 541.3,635.0 541.9,606.0 542.9,606.0 543.5,597.0 546.8,593.0 549.3,597.0 552.3,600.5 555.3,605.0 557.3,611.0 562.3,616.0 568.3,621.0 576.3,625.0 598.3,625.0 604.3,623.0 612.3,620.0 618.3,619.0 621.8,618.0 622.8,619.0 623.3,540.0 623.5,421.0 624.8,421.0 625.3,425.0 625.8,456.0 626.5,458.0 627.1,480.0 628.3,482.0 630.8,485.0 632.8,480.0 635.3,471.0 638.3,467.0 641.3,464.0 645.3,459.0 650.3,455.0 654.3,452.5 661.3,451.0 677.3,451.0 685.3,454.0 693.3,457.0 700.3,460.5 705.3,463.0 707.8,466.0 709.1,472.0 709.5,483.0 709.9,581.0 710.9,582.0 711.3,635.0 712.3,635.0 712.9,606.0 713.9,606.0 714.5,597.0 717.8,593.0 720.3,597.0 723.3,600.5 726.3,605.0 728.3,611.0 733.3,616.0 739.3,621.0 747.3,625.0 769.3,625.0 775.3,623.0 783.3,620.0 789.3,619.0 792.8,618.0 793.8,619.0 794.3,540.0 794.5,421.0 795.8,421.0 796.3,425.0 796.8,456.0 797.5,458.0 798.1,480.0 799.3,482.0 801.8,485.0 803.8,480.0 806.3,471.0 809.3,467.0 812.3,464.0 816.3,459.0 821.3,455.0 825.3,452.5 832.3,451.0 848.3,451.0 856.3,454.0 864.3,457.0 871.3,460.5 876.3,463.0 878.8,466.0 880.1,472.0 880.5,483.0 880.9,581.0 881.9,582.0 882.3,635.0 883.3,635.0 883.9,606.0 884.9,606.0 885.5,597.0 888.8,593.0 891.3,597.0 894.3,600.5 897.3,605.0 899.3,611.0 904.3,616.0 910.3,621.0 918.3,625.0 940.3,625.0 946.3,623.0 954.3,620.0 960.3,619.0 963.8,618.0 964.8,619.0 965.3,540.0 965.5,421.0 966.8,421.0 967.3,425.0 967.8,456.0 968.5,458.0 969.1,480.0 970.3,482.0 972.8,485.0 974.8,480.0 977.3,471.0 980.3,467.0 983.3,464.0 987.3,459.0 992.3,455.0 996.3,452.5 1003.3,451.0 1019.3,451.0 1027.3,454.0 1035.3,457.0 1042.3,460.5 1047.3,463.0 1049.8,466.0 1051.1,472.0 1051.5,483.0 1051.9,581.0 1052.9,582.0 1053.3,635.0 1054.3,635.0 1054.9,606.0 1055.9,606.0 1056.5,597.0 1059.8,593.0 1062.3,597.0 1065.3,600.5 1068.3,605.0 1070.3,611.0 1075.3,616.0 1081.3,621.0 1089.3,625.0 1111.3,625.0 1117.3,623.0 1125.3,620.0 1131.3,619.0 1134.8,618.0 1135.8,619.0 1136.3,540.0 1136.5,421.0 1137.8,421.0 1138.3,425.0 1138.8,456.0 1139.5,458.0 1140.1,480.0 1141.3,482.0 1143.8,485.0 1145.8,480.0 1148.3,471.0 1151.3,467.0 1154.3,464.0 1158.3,459.0 1163.3,455.0 1167.3,452.5 1174.3,451.0 1190.3,451.0 1198.3,454.0 1206.3,457.0 1213.3,460.5 1218.3,463.0 1220.8,466.0 1222.1,472.0 1222.5,483.0 1222.9,581.0 1223.9,582.0 1224.3,635.0 1225.3,635.0 1225.9,606.0 1226.9,606.0 1227.5,597.0 1230.8,593.0 1233.3,597.0 1236.3,600.5 1239.3,605.0 1241.3,611.0 1246.3,616.0 1252.3,621.0 1260.3,625.0 1282.3,625.0 1288.3,623.0 1296.3,620.0 1302.3,619.0 1305.8,618.0 1306.8,619.0 1307.3,540.0 1307.5,421.0 1308.8,421.0 1309.3,425.0 1309.8,456.0 1310.5,458.0 1311.1,480.0 1312.3,482.0 1314.8,485.0 1316.8,480.0 1319.3,471.0 1322.3,467.0 1325.3,464.0 1329.3,459.0 1334.3,455.0 1338.3,452.5 1345.3,451.0 1361.3,451.0 1369.3,454.0 1377.3,457.0 1384.3,460.5 1389.3,463.0 1391.8,466.0 1393.1,472.0 1393.5,483.0 1393.9,581.0 1394.9,582.0 1395.3,635.0 1396.3,635.0 1396.9,606.0 1397.9,606.0 1398.5,597.0 1401.8,593.0 1404.3,597.0 1407.3,600.5 1410.3,605.0 1412.3,611.0 1417.3,616.0 1423.3,621.0 1431.3,625.0 1453.3,625.0 1459.3,623.0 1467.3,620.0 1473.3,619.0 1476.8,618.0 1477.8,619.0 1478.3,540.0 1478.5,421.0 1479.8,421.0 1480.3,425.0 1480.8,456.0 1481.5,458.0 1482.1,480.0 1483.3,482.0 1485.8,485.0 1487.8,480.0 1490.3,471.0 1493.3,467.0 1496.3,464.0 1500.3,459.0 1505.3,455.0 1509.3,452.5 1516.3,451.0 1532.3,451.0 1540.3,454.0 1548.3,457.0 1555.3,460.5 1560.3,463.0 1562.8,466.0 1564.1,472.0 1564.5,483.0 1564.9,581.0 1565.9,582.0 1566.3,635.0 1567.3,635.0 1567.9,606.0 1568.9,606.0 1569.5,597.0 1572.8,593.0 1575.3,597.0 1578.3,600.5 1581.3,605.0 1583.3,611.0 1588.3,616.0 1594.3,621.0 1602.3,625.0 1624.3,625.0 1630.3,623.0 1638.3,620.0 1644.3,619.0 1647.8,618.0 1648.8,619.0 1649.3,540.0 1649.5,421.0 1650.8,421.0 1651.3,425.0 1651.8,456.0 1652.5,458.0 1653.1,480.0 1654.3,482.0 1656.8,485.0 1658.8,480.0 1661.3,471.0 1664.3,467.0 1667.3,464.0 1671.3,459.0 1676.3,455.0 1680.3,452.5 1687.3,451.0" fill="none" stroke="#3232b0" stroke-width="3" stroke-linejoin="miter" stroke-miterlimit="3"/></g></svg><div class="t" style="left:454px;top:859.76px;font-size:18px;line-height:22px;color:#505050;transform:scaleX(1.0983);transform-origin:0 0;">2</div><div class="t" style="left:495px;top:859.76px;font-size:18px;line-height:22px;color:#505050;transform:scaleX(1.0167);transform-origin:0 0;">ms/DIV</div><div class="t" style="left:1030px;top:859.76px;font-size:18px;line-height:22px;color:#505050;transform:scaleX(1.0387);transform-origin:0 0;">0.2</div><div class="t" style="left:1081px;top:859.76px;font-size:18px;line-height:22px;color:#505050;transform:scaleX(0.9996);transform-origin:0 0;">Volts/DIV</div><div class="t" style="left:1451.5px;top:196.26px;font-size:31px;line-height:37px;color:#484848;font-family:'Liberation Serif', serif;transform:scaleX(1.0098);transform-origin:0 0;">True</div><div class="t" style="left:1512px;top:195.59px;font-size:31.5px;line-height:38px;color:#ff0030;font-weight:bold;font-style:italic;transform:scaleX(1.1157);transform-origin:0 0;">RTA</div><div class="t" style="left:294.5px;top:193.26px;width:200px;text-align:center;font-size:18px;line-height:22px;color:#000;transform:scaleX(0.8443);transform-origin:50% 0;">- Generator -</div><svg style="left:388px;top:215px" width="13" height="13" viewBox="0 0 13 13"><path d="M3.5 0 H9.5 L13 3.5 V9.5 L9.5 13 H3.5 L0 9.5 V3.5 Z" fill="#800000"/></svg><div style="left:347px;top:233px;width:94px;height:39px;background:#fff;border:2px solid #000;border-right-width:3px;border-bottom-width:3px;box-shadow:inset 2px 2px 0 #c0c0c0,inset -2px -2px 0 #808080"></div><div style="left:352px;top:239px;width:83px;height:27px;border:1.5px dotted #000"></div><div class="t" style="left:294.5px;top:241.26px;width:200px;text-align:center;font-size:18px;line-height:22px;color:#000;transform:scaleX(0.9108);transform-origin:50% 0;">On/Off</div><div style="left:347px;top:281px;width:93px;height:71px;border:2px solid #a8a8a8"></div><div style="left:356px;top:279px;width:44px;height:5px;background:#fff"></div><div class="t" style="left:361px;top:271.26px;font-size:18px;line-height:22px;color:#000;transform:scaleX(0.8092);transform-origin:0 0;">Freq.</div><div style="left:353px;top:296px;width:56px;height:30px;background:#fff;box-shadow:inset 1px 1px 0 #c8c8c8,inset 3px 3px 0 #111,inset -2px -2px 0 #c0c0c0"></div><div class="t" style="left:305px;top:299.76px;width:100px;text-align:right;font-size:18px;line-height:22px;color:#000;transform:scaleX(0.8658);transform-origin:100% 0;">333.6</div><div style="left:411px;top:292px;width:26px;height:39px;background:#fff"></div><div style="left:411px;top:292px;width:26px;height:20px;background:#fff;box-shadow:inset -2px -2px 0 #000,inset 2px 2px 0 #c0c0c0"></div><div style="left:411px;top:312px;width:26px;height:19px;background:#fff;box-shadow:inset -2px -2px 0 #000,inset 2px 2px 0 #c0c0c0"></div><svg style="left:411px;top:292px" width="26" height="39" viewBox="0 0 26 39"><path d="M9 12 L13 7.5 L17 12 Z" fill="#000"/><path d="M9 26.5 L17 26.5 L13 31 Z" fill="#000"/></svg><div class="t" style="left:360px;top:326.76px;font-size:18px;line-height:22px;color:#000;transform:scaleX(0.8302);transform-origin:0 0;">(in Hz)</div><div style="left:347px;top:364px;width:93px;height:70px;border:2px solid #a8a8a8"></div><div style="left:356px;top:362px;width:47px;height:5px;background:#fff"></div><div class="t" style="left:360px;top:353.76px;font-size:18px;line-height:22px;color:#000;transform:scaleX(0.8258);transform-origin:0 0;">Ampl.</div><div style="left:353px;top:379px;width:56px;height:29px;background:#fff;box-shadow:inset 1px 1px 0 #c8c8c8,inset 3px 3px 0 #111,inset -2px -2px 0 #c0c0c0"></div><div class="t" style="left:305px;top:382.76px;width:100px;text-align:right;font-size:18px;line-height:22px;color:#000;transform:scaleX(0.8530);transform-origin:100% 0;">-10.0</div><div style="left:411px;top:374px;width:26px;height:39px;background:#fff"></div><div style="left:411px;top:374px;width:26px;height:20px;background:#fff;box-shadow:inset -2px -2px 0 #000,inset 2px 2px 0 #c0c0c0"></div><div style="left:411px;top:394px;width:26px;height:19px;background:#fff;box-shadow:inset -2px -2px 0 #000,inset 2px 2px 0 #c0c0c0"></div><svg style="left:411px;top:374px" width="26" height="39" viewBox="0 0 26 39"><path d="M9 12 L13 7.5 L17 12 Z" fill="#000"/><path d="M9 26.5 L17 26.5 L13 31 Z" fill="#000"/></svg><div class="t" style="left:354px;top:409.26px;font-size:18px;line-height:22px;color:#000;transform:scaleX(0.8409);transform-origin:0 0;">(in dBu)</div><div style="left:347px;top:446px;width:93px;height:187px;border:2px solid #a8a8a8"></div><div style="left:356px;top:444px;width:53px;height:5px;background:#fff"></div><div class="t" style="left:360px;top:436.76px;font-size:18px;line-height:22px;color:#000;transform:scaleX(0.9704);transform-origin:0 0;">Wave</div><div style="left:360px;top:460px;width:67px;height:26px;background:#c0c0c0;box-shadow:inset 2px 2px 0 #000"></div><div class="t" style="left:295.0px;top:461.76px;width:200px;text-align:center;font-size:18px;line-height:22px;color:#000;transform:scaleX(0.8604);transform-origin:50% 0;">Sine</div><div style="left:360px;top:484px;width:67px;height:24px;background:#fff;box-shadow:inset -2px -2px 0 #000,inset 2px 2px 0 #c0c0c0"></div><div class="t" style="left:294.0px;top:484.76px;width:200px;text-align:center;font-size:18px;line-height:22px;color:#000;transform:scaleX(0.8786);transform-origin:50% 0;">Square</div><div style="left:360px;top:508px;width:67px;height:24px;background:#fff;box-shadow:inset -2px -2px 0 #000,inset 2px 2px 0 #c0c0c0"></div><div class="t" style="left:294.0px;top:508.76px;width:200px;text-align:center;font-size:18px;line-height:22px;color:#000;transform:scaleX(0.8544);transform-origin:50% 0;">Triangle</div><div style="left:360px;top:532px;width:67px;height:24px;background:#fff;box-shadow:inset -2px -2px 0 #000,inset 2px 2px 0 #c0c0c0"></div><div class="t" style="left:294.0px;top:532.76px;width:200px;text-align:center;font-size:18px;line-height:22px;color:#000;transform:scaleX(0.9139);transform-origin:50% 0;">Saw</div><div style="left:360px;top:556px;width:67px;height:24px;background:#fff;box-shadow:inset -2px -2px 0 #000,inset 2px 2px 0 #c0c0c0"></div><div class="t" style="left:294.0px;top:556.76px;width:200px;text-align:center;font-size:18px;line-height:22px;color:#000;transform:scaleX(0.8567);transform-origin:50% 0;">Impulse</div><div style="left:360px;top:580px;width:67px;height:25px;background:#fff;box-shadow:inset -2px -2px 0 #000,inset 2px 2px 0 #c0c0c0"></div><div class="t" style="left:294.0px;top:580.76px;width:200px;text-align:center;font-size:18px;line-height:22px;color:#000;transform:scaleX(0.8677);transform-origin:50% 0;">Pink N</div><div style="left:360px;top:605px;width:67px;height:24px;background:#fff;box-shadow:inset -2px -2px 0 #000,inset 2px 2px 0 #c0c0c0"></div><div class="t" style="left:294.0px;top:605.76px;width:200px;text-align:center;font-size:18px;line-height:22px;color:#000;transform:scaleX(0.8904);transform-origin:50% 0;">White N</div><div style="left:347px;top:634px;width:94px;height:54px;background:#fff;border:1px solid #a0a0a0;box-shadow:inset -3px -3px 0 #000,inset 3px 3px 0 #e0e0e0,inset -5px -5px 0 #808080,inset 5px 5px 0 #fff"></div><div style="left:350px;top:637px;width:87px;height:48px;box-shadow:inset 2px 2px 0 #c8c8c8"></div><div class="t" style="left:293.5px;top:638.76px;width:200px;text-align:center;font-size:18px;line-height:22px;color:#000;transform:scaleX(0.9127);transform-origin:50% 0;">Quick</div><div class="t" style="left:293.5px;top:658.76px;width:200px;text-align:center;font-size:18px;line-height:22px;color:#000;transform:scaleX(0.9083);transform-origin:50% 0;">Sweep</div><div class="t" style="left:1561.5px;top:193.26px;width:200px;text-align:center;font-size:18px;line-height:22px;color:#000;transform:scaleX(0.8627);transform-origin:50% 0;">- Oscilloscope -</div><div class="t" style="left:1611px;top:217.26px;font-size:18px;line-height:22px;color:#000;transform:scaleX(0.9996);transform-origin:0 0;">V/Div</div><div class="t" style="left:1671px;top:217.26px;font-size:18px;line-height:22px;color:#000;transform:scaleX(0.9091);transform-origin:0 0;">ms/Div</div><div style="left:1613px;top:241px;width:39px;height:24px;background:#fff;box-shadow:inset -2px -2px 0 #000,inset 2px 2px 0 #c0c0c0"></div><div class="t" style="left:1532.0px;top:241.76px;width:200px;text-align:center;font-size:18px;line-height:22px;color:#000;transform:scaleX(0.8246);transform-origin:50% 0;">.001</div><div style="left:1676px;top:241px;width:36px;height:24px;background:#fff;box-shadow:inset -2px -2px 0 #000,inset 2px 2px 0 #c0c0c0"></div><div class="t" style="left:1594.0px;top:241.76px;width:200px;text-align:center;font-size:18px;line-height:22px;color:#000;transform:scaleX(0.8230);transform-origin:50% 0;">.05</div><div style="left:1613px;top:265px;width:39px;height:25px;background:#fff;box-shadow:inset -2px -2px 0 #000,inset 2px 2px 0 #c0c0c0"></div><div class="t" style="left:1532.0px;top:265.76px;width:200px;text-align:center;font-size:18px;line-height:22px;color:#000;transform:scaleX(0.8246);transform-origin:50% 0;">.002</div><div style="left:1676px;top:265px;width:36px;height:25px;background:#fff;box-shadow:inset -2px -2px 0 #000,inset 2px 2px 0 #c0c0c0"></div><div class="t" style="left:1594.0px;top:265.76px;width:200px;text-align:center;font-size:18px;line-height:22px;color:#000;transform:scaleX(0.8191);transform-origin:50% 0;">.1</div><div style="left:1613px;top:290px;width:39px;height:24px;background:#fff;box-shadow:inset -2px -2px 0 #000,inset 2px 2px 0 #c0c0c0"></div><div class="t" style="left:1532.0px;top:290.76px;width:200px;text-align:center;font-size:18px;line-height:22px;color:#000;transform:scaleX(0.8246);transform-origin:50% 0;">.005</div><div style="left:1676px;top:290px;width:36px;height:24px;background:#fff;box-shadow:inset -2px -2px 0 #000,inset 2px 2px 0 #c0c0c0"></div><div class="t" style="left:1594.0px;top:290.76px;width:200px;text-align:center;font-size:18px;line-height:22px;color:#000;transform:scaleX(0.8191);transform-origin:50% 0;">.2</div><div style="left:1613px;top:314px;width:39px;height:24px;background:#fff;box-shadow:inset -2px -2px 0 #000,inset 2px 2px 0 #c0c0c0"></div><div class="t" style="left:1532.0px;top:314.76px;width:200px;text-align:center;font-size:18px;line-height:22px;color:#000;transform:scaleX(0.8230);transform-origin:50% 0;">.01</div><div style="left:1676px;top:314px;width:36px;height:24px;background:#fff;box-shadow:inset -2px -2px 0 #000,inset 2px 2px 0 #c0c0c0"></div><div class="t" style="left:1594.0px;top:314.76px;width:200px;text-align:center;font-size:18px;line-height:22px;color:#000;transform:scaleX(0.8191);transform-origin:50% 0;">.5</div><div style="left:1613px;top:338px;width:39px;height:24px;background:#fff;box-shadow:inset -2px -2px 0 #000,inset 2px 2px 0 #c0c0c0"></div><div class="t" style="left:1532.0px;top:338.76px;width:200px;text-align:center;font-size:18px;line-height:22px;color:#000;transform:scaleX(0.8230);transform-origin:50% 0;">.02</div><div style="left:1676px;top:338px;width:36px;height:24px;background:#fff;box-shadow:inset -2px -2px 0 #000,inset 2px 2px 0 #c0c0c0"></div><div class="t" style="left:1594.0px;top:338.76px;width:200px;text-align:center;font-size:18px;line-height:22px;color:#000;transform:scaleX(0.8287);transform-origin:50% 0;">1</div><div style="left:1613px;top:362px;width:39px;height:24px;background:#fff;box-shadow:inset -2px -2px 0 #000,inset 2px 2px 0 #c0c0c0"></div><div class="t" style="left:1532.0px;top:362.76px;width:200px;text-align:center;font-size:18px;line-height:22px;color:#000;transform:scaleX(0.8230);transform-origin:50% 0;">.05</div><div style="left:1676px;top:362px;width:36px;height:25px;background:#c0c0c0;box-shadow:inset 2px 2px 0 #000"></div><div class="t" style="left:1595.0px;top:363.76px;width:200px;text-align:center;font-size:18px;line-height:22px;color:#000;transform:scaleX(0.8287);transform-origin:50% 0;">2</div><div style="left:1613px;top:386px;width:39px;height:25px;background:#fff;box-shadow:inset -2px -2px 0 #000,inset 2px 2px 0 #c0c0c0"></div><div class="t" style="left:1532.0px;top:386.76px;width:200px;text-align:center;font-size:18px;line-height:22px;color:#000;transform:scaleX(0.8191);transform-origin:50% 0;">.1</div><div style="left:1676px;top:386px;width:36px;height:25px;background:#fff;box-shadow:inset -2px -2px 0 #000,inset 2px 2px 0 #c0c0c0"></div><div class="t" style="left:1594.0px;top:386.76px;width:200px;text-align:center;font-size:18px;line-height:22px;color:#000;transform:scaleX(0.8287);transform-origin:50% 0;">5</div><div style="left:1613px;top:411px;width:39px;height:25px;background:#c0c0c0;box-shadow:inset 2px 2px 0 #000"></div><div class="t" style="left:1533.0px;top:412.76px;width:200px;text-align:center;font-size:18px;line-height:22px;color:#000;transform:scaleX(0.8191);transform-origin:50% 0;">.2</div><div style="left:1676px;top:411px;width:36px;height:24px;background:#fff;box-shadow:inset -2px -2px 0 #000,inset 2px 2px 0 #c0c0c0"></div><div class="t" style="left:1594.0px;top:411.76px;width:200px;text-align:center;font-size:18px;line-height:22px;color:#000;transform:scaleX(0.8287);transform-origin:50% 0;">10</div><div style="left:1613px;top:435px;width:39px;height:24px;background:#fff;box-shadow:inset -2px -2px 0 #000,inset 2px 2px 0 #c0c0c0"></div><div class="t" style="left:1532.0px;top:435.76px;width:200px;text-align:center;font-size:18px;line-height:22px;color:#000;transform:scaleX(0.8191);transform-origin:50% 0;">.5</div><div style="left:1676px;top:435px;width:36px;height:24px;background:#fff;box-shadow:inset -2px -2px 0 #000,inset 2px 2px 0 #c0c0c0"></div><div class="t" style="left:1594.0px;top:435.76px;width:200px;text-align:center;font-size:18px;line-height:22px;color:#000;transform:scaleX(0.8287);transform-origin:50% 0;">20</div><div style="left:1613px;top:459px;width:39px;height:25px;background:#fff;box-shadow:inset -2px -2px 0 #000,inset 2px 2px 0 #c0c0c0"></div><div class="t" style="left:1532.0px;top:459.76px;width:200px;text-align:center;font-size:18px;line-height:22px;color:#000;transform:scaleX(0.8287);transform-origin:50% 0;">1</div><div style="left:1676px;top:459px;width:36px;height:25px;background:#fff;box-shadow:inset -2px -2px 0 #000,inset 2px 2px 0 #c0c0c0"></div><div class="t" style="left:1594.0px;top:459.76px;width:200px;text-align:center;font-size:18px;line-height:22px;color:#000;transform:scaleX(0.8287);transform-origin:50% 0;">50</div><div style="left:1613px;top:484px;width:39px;height:24px;background:#fff;box-shadow:inset -2px -2px 0 #000,inset 2px 2px 0 #c0c0c0"></div><div class="t" style="left:1532.0px;top:484.76px;width:200px;text-align:center;font-size:18px;line-height:22px;color:#000;transform:scaleX(0.8287);transform-origin:50% 0;">2</div><div style="left:1676px;top:484px;width:36px;height:24px;background:#fff;box-shadow:inset -2px -2px 0 #000,inset 2px 2px 0 #c0c0c0"></div><div class="t" style="left:1594.0px;top:484.76px;width:200px;text-align:center;font-size:18px;line-height:22px;color:#000;transform:scaleX(0.8287);transform-origin:50% 0;">100</div><div style="left:1613px;top:508px;width:39px;height:24px;background:#fff;box-shadow:inset -2px -2px 0 #000,inset 2px 2px 0 #c0c0c0"></div><div class="t" style="left:1532.0px;top:508.76px;width:200px;text-align:center;font-size:18px;line-height:22px;color:#000;transform:scaleX(0.8287);transform-origin:50% 0;">5</div><div style="left:1676px;top:508px;width:36px;height:24px;background:#fff;box-shadow:inset -2px -2px 0 #000,inset 2px 2px 0 #c0c0c0"></div><div class="t" style="left:1594.0px;top:508.76px;width:200px;text-align:center;font-size:18px;line-height:22px;color:#000;transform:scaleX(0.8287);transform-origin:50% 0;">200</div><div style="left:1603px;top:544px;width:120px;height:143px;border:2px solid #a8a8a8"></div><div style="left:1612px;top:542px;width:57px;height:5px;background:#fff"></div><div class="t" style="left:1617px;top:534.26px;font-size:18px;line-height:22px;color:#000;transform:scaleX(0.8517);transform-origin:0 0;">Trigger</div><svg style="left:1614.6px;top:561px" width="18" height="18" viewBox="0 0 18 18"><circle cx="9" cy="9" r="7.6" fill="#fff" stroke="#c8c8c8" stroke-width="1.6"/><path d="M3.6 14.4 A7.6 7.6 0 0 1 14.4 3.6" fill="none" stroke="#222" stroke-width="1.6"/><circle cx="9" cy="9" r="2.6" fill="#000"/></svg><div class="t" style="left:1641px;top:559.26px;font-size:18px;line-height:22px;color:#000;transform:scaleX(0.7988);transform-origin:0 0;">L</div><svg style="left:1673px;top:561px" width="18" height="18" viewBox="0 0 18 18"><circle cx="9" cy="9" r="7.6" fill="#fff" stroke="#c8c8c8" stroke-width="1.6"/><path d="M3.6 14.4 A7.6 7.6 0 0 1 14.4 3.6" fill="none" stroke="#222" stroke-width="1.6"/></svg><div class="t" style="left:1699.5px;top:559.26px;font-size:18px;line-height:22px;color:#000;transform:scaleX(0.7692);transform-origin:0 0;">R</div><div class="t" style="left:1635px;top:577.26px;font-size:18px;line-height:22px;color:#000;transform:scaleX(0.8940);transform-origin:0 0;">Source</div><div style="left:1616px;top:610px;width:94px;height:2px;background:#222"></div><div style="left:1616px;top:612px;width:94px;height:3px;background:#c8c8c8"></div><svg style="left:1657px;top:603px" width="13" height="23" viewBox="0 0 13 23"><path d="M1.5 1 H11 V17 L6 22 L1.5 17 Z" fill="#e0e0e0" stroke="#c0c0c0" stroke-width="1.2"/><path d="M11 1 V17 L6.5 21.5" fill="none" stroke="#000" stroke-width="1.6"/></svg><div style="left:1621px;top:626px;width:1px;height:5px;background:#222"></div><div style="left:1663px;top:626px;width:1px;height:5px;background:#222"></div><div style="left:1705px;top:626px;width:1px;height:5px;background:#222"></div><div class="t" style="left:1615px;top:630.26px;font-size:18px;line-height:22px;color:#000;transform:scaleX(0.8717);transform-origin:0 0;">Trigger Level</div><div style="left:1625px;top:658px;width:19px;height:19px;background:#fff;box-shadow:inset 2px 2px 0 #111,inset -2px -2px 0 #c8c8c8"></div><svg style="left:1625px;top:658px" width="19" height="19" viewBox="0 0 19 19"><path d="M5 9 L8 12.5 L14.5 5.5" fill="none" stroke="#000" stroke-width="2.6"/></svg><div class="t" style="left:1652px;top:656.26px;font-size:18px;line-height:22px;color:#000;transform:scaleX(0.8911);transform-origin:0 0;">Auto</div><div style="left:339px;top:882px;width:110px;height:1px;background:#8c8c8c"></div><div style="left:1595px;top:882px;width:135px;height:1px;background:#8c8c8c"></div><div class="t" style="left:343px;top:889.76px;font-size:18px;line-height:22px;color:#111;transform:scaleX(0.9847);transform-origin:0 0;">Use Alt+Space to start or stop input processing</div><div style="left:1307px;top:888px;width:241px;height:25px;border-top:1px solid #a0a0a0;border-left:1px solid #a0a0a0;border-right:1px solid #e8e8e8"></div><div style="left:1551px;top:888px;width:44px;height:25px;border-top:1px solid #a0a0a0;border-left:1px solid #a0a0a0;border-right:1px solid #e8e8e8"></div><div style="left:1598px;top:888px;width:51px;height:25px;border-top:1px solid #a0a0a0;border-left:1px solid #a0a0a0;border-right:1px solid #e8e8e8"></div><div style="left:1652px;top:888px;width:49px;height:25px;border-top:1px solid #a0a0a0;border-left:1px solid #a0a0a0;border-right:1px solid #e8e8e8"></div><div class="t" style="left:1310px;top:889.76px;font-size:18px;line-height:22px;color:#111;transform:scaleX(0.9921);transform-origin:0 0;">Workbench</div><div class="t" style="left:1601px;top:889.76px;font-size:18px;line-height:22px;color:#111;transform:scaleX(1.0732);transform-origin:0 0;">NUM</div><svg style="left:1710px;top:893px" width="19" height="19" viewBox="0 0 19 19"><path d="M18 2 L2 18 M18 7 L7 18 M18 12 L12 18" stroke="#a0a0a0" stroke-width="1.6"/></svg><div style="left:0px;top:1020px;width:1920px;height:60px;background:#fff;border-top:1px solid #000"></div><div style="left:0px;top:1079px;width:660px;height:1px;background:#000"></div><div style="left:1418px;top:1079px;width:502px;height:1px;background:#000"></div><div style="left:71px;top:1020px;width:1px;height:60px;background:#000"></div><div style="left:588px;top:1020px;width:1px;height:60px;background:#000"></div><div style="left:659px;top:1020px;width:1px;height:60px;background:#000"></div><svg style="left:24px;top:1038px" width="25" height="25" viewBox="0 0 25 25"><path d="M0 3.5 L10.5 2 V11.7 H0 Z M11.7 1.8 L24.5 0 V11.7 H11.7 Z M0 12.9 H10.5 V22.7 L0 21.3 Z M11.7 12.9 H24.5 V24.8 L11.7 23 Z" fill="#000"/></svg><svg style="left:84px;top:1032px" width="36" height="36" viewBox="0 0 36 36"><circle cx="18" cy="18" r="15.6" fill="none" stroke="#909090" stroke-width="1.6"/><circle cx="18" cy="18" r="13.4" fill="none" stroke="#000" stroke-width="2.8"/></svg><div class="t" style="left:132px;top:1039.57px;font-size:20px;line-height:24px;color:#5c0a00;transform:scaleX(1.0182);transform-origin:0 0;">Type here to search</div><svg style="left:545px;top:1036px" width="24" height="28" viewBox="0 0 24 28"><rect x="7.5" y="2.5" width="9" height="15" rx="4.5" fill="none" stroke="#000" stroke-width="1.6"/><path d="M4 13 V14.5 C4 19 7.5 22 12 22 C16.5 22 20 19 20 14.5 V13" fill="none" stroke="#000" stroke-width="1.6"/><path d="M12 22 V25.5 M8 25.5 H16" stroke="#000" stroke-width="1.6"/></svg><svg style="left:608px;top:1038px" width="32" height="24" viewBox="0 0 32 24"><rect x="7" y="2.3" width="17.5" height="19.5" fill="none" stroke="#000" stroke-width="1.6"/><path d="M4.3 5 H1.3 V19 H4.3 M27 5 H30 V19 H27" fill="none" stroke="#000" stroke-width="1.6"/></svg><svg style="left:683px;top:1032px" width="35" height="35" viewBox="-17.5 -17.5 35 35"><path d="M0 0 L-15.15 -8.75 A17.5 17.5 0 0 1 15.15 -8.75 Z" fill="#db4437"/><path d="M0 0 L15.15 -8.75 A17.5 17.5 0 0 1 0 17.5 Z" fill="#fcc934"/><path d="M0 0 L0 17.5 A17.5 17.5 0 0 1 -15.15 -8.75 Z" fill="#1fa463"/><circle r="7.7" fill="#fff"/><circle r="6.1" fill="#4688f1"/></svg><div style="left:741px;top:1022px;width:66px;height:52px;background:#370070"></div><div style="left:808px;top:1022px;width:4px;height:52px;background:#000"></div><div style="left:741px;top:1075px;width:66px;height:4px;background:#000"></div><div style="left:808px;top:1075px;width:4px;height:4px;background:#000"></div><svg style="left:758px;top:1032px" width="37" height="36" viewBox="0 0 37 36"><rect x="0" y="0" width="37" height="36" fill="#000"/><rect x="0.75" y="0.75" width="35.5" height="34.5" fill="none" stroke="#bdbdbd" stroke-width="1.5"/><rect x="8.9" y="0" width="1.2" height="36" fill="#9a9a9a"/><rect x="17.9" y="0" width="1.2" height="36" fill="#9a9a9a"/><rect x="26.9" y="0" width="1.2" height="36" fill="#9a9a9a"/><rect x="0" y="8.4" width="37" height="1.2" fill="#9a9a9a"/><rect x="0" y="17.4" width="37" height="1.2" fill="#9a9a9a"/><rect x="0" y="26.4" width="37" height="1.2" fill="#9a9a9a"/><path d="M1.5 17.5 C4 12 6.5 7.5 9.5 7.5 C13 7.5 15.5 14 18.5 19 C21.5 24 24 28.5 27.5 28.5 C30.5 28.5 33 23 35.5 18.5" fill="none" stroke="#18d8e8" stroke-width="1.4"/></svg><svg style="left:834px;top:1036px" width="34" height="28" viewBox="0 0 34 28"><rect x="1" y="3" width="32" height="23.5" rx="1.5" fill="#fde38a"/><path d="M1 5.8 V2.5 Q1 1 2.5 1 H13.5 L16.5 4 L13.5 5.8 Z" fill="#f3c53e"/><rect x="3.5" y="2.6" width="7.5" height="1.5" fill="#fff"/><path d="M6.4 27 V17 Q6.4 14 9.4 14 H24.3 Q27.3 14 27.3 17 V27 H21.8 V19.5 H11.8 V27 Z" fill="#3aade8"/></svg><div style="left:822px;top:1075px;width:59px;height:4px;background:#000"></div><svg style="left:913px;top:1037px" width="25" height="25" viewBox="0 0 25 25"><path d="M8 7 V5.5 C8 2.5 9.8 1 12 1 C14.2 1 16 2.5 16 5.5 V7" fill="none" stroke="#000" stroke-width="1.4"/><path d="M10 7 V5.5 C10 3.5 11 2.5 12.5 2.5" fill="none" stroke="#000" stroke-width="1"/><path d="M1 7 H24 V22.5 C24 23.5 23 24.3 22 24.3 H3 C2 24.3 1 23.5 1 22.5 Z" fill="#000"/><rect x="7" y="10" width="5" height="5" fill="#fff"/><rect x="13" y="10" width="5" height="5" fill="#fff"/><rect x="7" y="16" width="5" height="5" fill="#fff"/><rect x="13" y="16" width="5" height="5" fill="#fff"/></svg><svg style="left:988px;top:1038px" width="26" height="22" viewBox="0 0 26 22"><path d="M1 6 L13 0.5 L25 6 Z" fill="#000"/><path d="M1 7 L19 17.5 L15 12 L25 7 V20.5 H1 Z" fill="#000"/></svg><svg style="left:1370px;top:1037px" width="25" height="25" viewBox="0 0 25 25"><circle cx="15.5" cy="5" r="3.6" fill="none" stroke="#000" stroke-width="1.4"/><path d="M10.5 13 C11 10.5 13 9 15.5 9 C18.5 9 20.5 11 21.5 13.5" fill="none" stroke="#000" stroke-width="1.4"/><circle cx="7.5" cy="12.5" r="3.6" fill="none" stroke="#000" stroke-width="1.4"/><path d="M1.5 22.5 C2 19 4.5 16.5 7.5 16.5 C10.5 16.5 13 19 13.5 22.5" fill="none" stroke="#000" stroke-width="1.4"/></svg><div style="left:1418px;top:1020px;width:48px;height:60px;border:1px solid #000"></div><div style="left:1466px;top:1020px;width:48px;height:60px;border:1px solid #000"></div><div style="left:1514px;top:1020px;width:48px;height:60px;border:1px solid #000"></div><div style="left:1562px;top:1020px;width:48px;height:60px;border:1px solid #000"></div><div style="left:1610px;top:1020px;width:48px;height:60px;border:1px solid #000"></div><div style="left:1658px;top:1020px;width:48px;height:60px;border:1px solid #000"></div><div style="left:1706px;top:1020px;width:104px;height:60px;border:1px solid #000"></div><div style="left:1810px;top:1020px;width:59px;height:60px;border:1px solid #000"></div><div style="left:1869px;top:1020px;width:13px;height:60px;border:1px solid #000"></div><div style="left:1882px;top:1020px;width:38px;height:60px;border:1px solid #000"></div><svg style="left:1432px;top:1043px" width="20" height="12" viewBox="0 0 20 12"><path d="M1.2 10.5 L10 1.7 L18.8 10.5" fill="none" stroke="#000" stroke-width="1.5"/></svg><svg style="left:1477px;top:1039px" width="26" height="23" viewBox="0 0 26 23"><path d="M1.5 4.5 L7.5 0.8999999999999999 L13.5 4.5 L7.5 8.1 Z" fill="none" stroke="#7a7a7a" stroke-width="1.1"/><path d="M12.5 4.5 L18.5 0.8999999999999999 L24.5 4.5 L18.5 8.1 Z" fill="none" stroke="#7a7a7a" stroke-width="1.1"/><path d="M1.5 11 L7.5 7.4 L13.5 11 L7.5 14.6 Z" fill="none" stroke="#7a7a7a" stroke-width="1.1"/><path d="M12.5 11 L18.5 7.4 L24.5 11 L18.5 14.6 Z" fill="none" stroke="#7a7a7a" stroke-width="1.1"/><path d="M7 17.5 L13 13.9 L19 17.5 L13 21.1 Z" fill="none" stroke="#7a7a7a" stroke-width="1.1"/></svg><svg style="left:1525px;top:1040px" width="26" height="18" viewBox="0 0 26 18"><path d="M4 13 C1.5 13 0.8 11 1.2 9.5 C1.8 7.5 3.5 7 5 7.3 C5.5 4 8 2 11 2.2 C13.5 2.4 15 3.8 15.8 5.5" fill="none" stroke="#b8b8b8" stroke-width="1.2"/><path d="M7 16.5 C4.5 16.5 4 14 4.5 12.8 C5 11.3 6.5 10.8 8 11.2 C8.5 8 11 6 14 6.2 C16.5 6.4 18 8 18.6 9.6 C21.5 9 24.5 10.5 24.5 13.3 C24.5 15.5 23 16.5 21 16.5 Z" fill="none" stroke="#b8b8b8" stroke-width="1.2"/></svg><svg style="left:1572px;top:1040px" width="27" height="18" viewBox="0 0 27 18"><path d="M3 0.5 V3.5 M6 0.5 V3.5" stroke="#000" stroke-width="1.2"/><path d="M2 3.5 H7 V6.5 C7 8 6 9 4.5 9 C3 9 2 8 2 6.5 Z" fill="none" stroke="#000" stroke-width="1.2"/><path d="M4.5 9 V17" stroke="#000" stroke-width="1.2"/><rect x="5.6" y="3.6" width="18.2" height="12.6" fill="none" stroke="#000" stroke-width="1.2"/><rect x="8" y="6" width="14" height="8" fill="#000"/><rect x="24" y="8" width="2" height="4" fill="#000"/></svg><svg style="left:1625px;top:1041px" width="21" height="20" viewBox="0 0 21 20"><path d="M1 19 A18 18 0 0 1 19 1" fill="none" stroke="#000" stroke-width="1.3"/><path d="M5.5 19 A13.5 13.5 0 0 1 19 5.5" fill="none" stroke="#000" stroke-width="1.3"/><path d="M10 19 A9 9 0 0 1 19 10" fill="none" stroke="#000" stroke-width="1.3"/><circle cx="16.5" cy="16.5" r="1.6" fill="#000"/></svg><svg style="left:1670px;top:1040px" width="25" height="20" viewBox="0 0 25 20"><path d="M1 7 H5 L11 1 V19 L5 13 H1 Z" fill="none" stroke="#000" stroke-width="1.3"/><path d="M13.5 8 C14.5 9 14.5 11 13.5 12" fill="none" stroke="#000" stroke-width="1.3"/><path d="M16.5 5 C19 7.5 19 12.5 16.5 15" fill="none" stroke="#000" stroke-width="1.3"/><path d="M19.5 2 C23.5 6 23.5 14 19.5 18" fill="none" stroke="#000" stroke-width="1.3"/></svg><div class="t" style="left:1698.0px;top:1026.61px;width:120px;text-align:center;font-size:17px;line-height:20px;color:#111;transform:scaleX(0.9895);transform-origin:50% 0;">12:10 PM</div><div class="t" style="left:1698.0px;top:1054.61px;width:120px;text-align:center;font-size:17px;line-height:20px;color:#111;transform:scaleX(1.0878);transform-origin:50% 0;">3/8/2018</div><svg style="left:1826px;top:1036px" width="40" height="40" viewBox="0 0 40 40"><path d="M2 2 H26 V21 H14 L10 25 V21 H2 Z" fill="#000"/><path d="M7 8 H21 M7 12.5 H21 M7 17 H17" stroke="#fff" stroke-width="1.2"/><circle cx="25.4" cy="25.4" r="11.6" fill="#fff" stroke="#000" stroke-width="1.2"/><text x="25.4" y="31.5" text-anchor="middle" font-family="Liberation Sans" font-weight="bold" font-size="17" fill="#000">1</text></svg></body></html>
